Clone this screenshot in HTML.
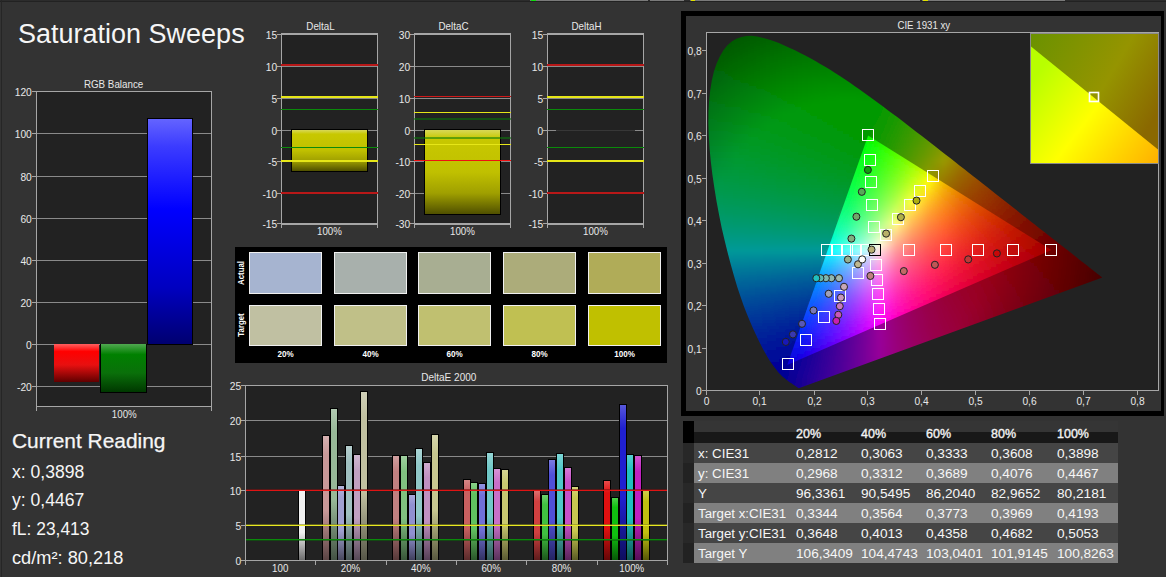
<!DOCTYPE html><html><head><meta charset="utf-8"><style>
html,body{margin:0;padding:0;background:#333333;width:1166px;height:577px;overflow:hidden}
svg{display:block}
text{font-family:"Liberation Sans", sans-serif;fill:#e8e8e8}
</style></head><body>
<svg width="1166" height="577" viewBox="0 0 1166 577" shape-rendering="crispEdges">
<rect x="0" y="0" width="1166" height="577" fill="#333333"/>

<rect x="0" y="0" width="1166" height="1" fill="#2c2c2c"/><rect x="0" y="1" width="1166" height="1" fill="#222222"/>
<rect x="530" y="0" width="118" height="1" fill="#7a7a7a"/><rect x="650" y="0" width="34" height="1" fill="#7a7a7a"/><rect x="690" y="0" width="230" height="1" fill="#7a7a7a"/><rect x="922" y="0" width="143" height="1" fill="#7a7a7a"/>
<rect x="531" y="0" width="5" height="1" fill="#10e010"/><rect x="691" y="0" width="4" height="1" fill="#e0e000"/><rect x="923" y="0" width="5" height="1" fill="#e0e000"/>
<rect x="1" y="0" width="1" height="577" fill="#262626"/>
<text x="18.0" y="42.5" style="font-size:27px;fill:#f6f6f6">Saturation Sweeps</text>
<defs>
<linearGradient id="gR" x1="0" y1="0" x2="0" y2="1"><stop offset="0" stop-color="#ff6060"/><stop offset="0.2" stop-color="#ff0000"/><stop offset="0.55" stop-color="#e81010"/><stop offset="1" stop-color="#600000"/></linearGradient>
<linearGradient id="gG" x1="0" y1="0" x2="0" y2="1"><stop offset="0" stop-color="#50a850"/><stop offset="0.22" stop-color="#008000"/><stop offset="0.6" stop-color="#0a700a"/><stop offset="1" stop-color="#003800"/></linearGradient>
<linearGradient id="gB" x1="0" y1="0" x2="0" y2="1"><stop offset="0" stop-color="#6464ff"/><stop offset="0.12" stop-color="#3c3cff"/><stop offset="0.4" stop-color="#0000ff"/><stop offset="0.75" stop-color="#0000c0"/><stop offset="1" stop-color="#000070"/></linearGradient>
<linearGradient id="gYb" x1="0" y1="0" x2="0" y2="1"><stop offset="0" stop-color="#d8d858"/><stop offset="0.1" stop-color="#c8c800"/><stop offset="0.5" stop-color="#c0c000"/><stop offset="0.75" stop-color="#a0a000"/><stop offset="1" stop-color="#505000"/></linearGradient>
</defs>
<rect x="36" y="91" width="175" height="315" fill="#222222"/>
<rect x="36" y="386" width="175" height="1" fill="#8a8a8a"/>
<rect x="32" y="386" width="4" height="1" fill="#a6a6a6"/>
<text x="31.8" y="391.0" text-anchor="end" textLength="14.8" lengthAdjust="spacingAndGlyphs" style="font-size:11px">-20</text>
<rect x="36" y="344" width="175" height="1" fill="#8a8a8a"/>
<rect x="32" y="344" width="4" height="1" fill="#a6a6a6"/>
<text x="31.8" y="349.0" text-anchor="end" textLength="5.7" lengthAdjust="spacingAndGlyphs" style="font-size:11px">0</text>
<rect x="36" y="302" width="175" height="1" fill="#8a8a8a"/>
<rect x="32" y="302" width="4" height="1" fill="#a6a6a6"/>
<text x="31.8" y="307.0" text-anchor="end" textLength="11.4" lengthAdjust="spacingAndGlyphs" style="font-size:11px">20</text>
<rect x="36" y="260" width="175" height="1" fill="#8a8a8a"/>
<rect x="32" y="260" width="4" height="1" fill="#a6a6a6"/>
<text x="31.8" y="265.0" text-anchor="end" textLength="11.4" lengthAdjust="spacingAndGlyphs" style="font-size:11px">40</text>
<rect x="36" y="218" width="175" height="1" fill="#8a8a8a"/>
<rect x="32" y="218" width="4" height="1" fill="#a6a6a6"/>
<text x="31.8" y="223.0" text-anchor="end" textLength="11.4" lengthAdjust="spacingAndGlyphs" style="font-size:11px">60</text>
<rect x="36" y="176" width="175" height="1" fill="#8a8a8a"/>
<rect x="32" y="176" width="4" height="1" fill="#a6a6a6"/>
<text x="31.8" y="181.0" text-anchor="end" textLength="11.4" lengthAdjust="spacingAndGlyphs" style="font-size:11px">80</text>
<rect x="36" y="133" width="175" height="1" fill="#8a8a8a"/>
<rect x="32" y="133" width="4" height="1" fill="#a6a6a6"/>
<text x="31.8" y="138.0" text-anchor="end" textLength="17.1" lengthAdjust="spacingAndGlyphs" style="font-size:11px">100</text>
<rect x="36" y="91" width="175" height="1" fill="#8a8a8a"/>
<rect x="32" y="91" width="4" height="1" fill="#a6a6a6"/>
<text x="31.8" y="96.0" text-anchor="end" textLength="17.1" lengthAdjust="spacingAndGlyphs" style="font-size:11px">120</text>
<rect x="36" y="91" width="1" height="320" fill="#a6a6a6"/><rect x="211" y="91" width="1" height="320" fill="#a6a6a6"/>
<rect x="36" y="91" width="175" height="1" fill="#a6a6a6"/><rect x="36" y="406" width="176" height="1" fill="#a6a6a6"/>
<text x="113.6" y="88.0" text-anchor="middle" textLength="59.3" lengthAdjust="spacingAndGlyphs" style="font-size:11px">RGB Balance</text>
<text x="124.3" y="418.0" text-anchor="middle" textLength="24.9" lengthAdjust="spacingAndGlyphs" style="font-size:11px">100%</text>
<rect x="54" y="344" width="45" height="38" fill="url(#gR)"/>
<rect x="100" y="344" width="47" height="49" fill="#000"/><rect x="101" y="344" width="45" height="48" fill="url(#gG)"/>
<rect x="147" y="118" width="46" height="227" fill="#000"/><rect x="148" y="119" width="44" height="225" fill="url(#gB)"/>
<rect x="281" y="34" width="96" height="189" fill="#222222"/>
<rect x="281" y="34" width="96" height="1" fill="#8a8a8a"/>
<rect x="277" y="34" width="4" height="1" fill="#a6a6a6"/>
<text x="277.2" y="39.0" text-anchor="end" textLength="11.4" lengthAdjust="spacingAndGlyphs" style="font-size:11px">15</text>
<rect x="281" y="66" width="96" height="1" fill="#8a8a8a"/>
<rect x="277" y="66" width="4" height="1" fill="#a6a6a6"/>
<text x="277.2" y="71.0" text-anchor="end" textLength="11.4" lengthAdjust="spacingAndGlyphs" style="font-size:11px">10</text>
<rect x="281" y="98" width="96" height="1" fill="#8a8a8a"/>
<rect x="277" y="98" width="4" height="1" fill="#a6a6a6"/>
<text x="277.2" y="103.0" text-anchor="end" textLength="5.7" lengthAdjust="spacingAndGlyphs" style="font-size:11px">5</text>
<rect x="281" y="130" width="96" height="1" fill="#8a8a8a"/>
<rect x="277" y="130" width="4" height="1" fill="#a6a6a6"/>
<text x="277.2" y="135.0" text-anchor="end" textLength="5.7" lengthAdjust="spacingAndGlyphs" style="font-size:11px">0</text>
<rect x="281" y="161" width="96" height="1" fill="#8a8a8a"/>
<rect x="277" y="161" width="4" height="1" fill="#a6a6a6"/>
<text x="277.2" y="166.0" text-anchor="end" textLength="9.1" lengthAdjust="spacingAndGlyphs" style="font-size:11px">-5</text>
<rect x="281" y="193" width="96" height="1" fill="#8a8a8a"/>
<rect x="277" y="193" width="4" height="1" fill="#a6a6a6"/>
<text x="277.2" y="198.0" text-anchor="end" textLength="14.8" lengthAdjust="spacingAndGlyphs" style="font-size:11px">-10</text>
<rect x="281" y="223" width="96" height="1" fill="#8a8a8a"/>
<rect x="277" y="223" width="4" height="1" fill="#a6a6a6"/>
<text x="277.2" y="228.0" text-anchor="end" textLength="14.8" lengthAdjust="spacingAndGlyphs" style="font-size:11px">-15</text>
<rect x="291" y="129" width="77" height="43" fill="#000"/>
<rect x="292" y="130" width="75" height="41" fill="url(#gYb)"/>
<rect x="281" y="33" width="1" height="195" fill="#a6a6a6"/><rect x="377" y="33" width="1" height="195" fill="#a6a6a6"/>
<rect x="281" y="33" width="96" height="2" fill="#a6a6a6"/><rect x="281" y="223" width="97" height="2" fill="#a6a6a6"/>
<rect x="281" y="64" width="97" height="2" fill="#b81818"/>
<rect x="281" y="96" width="97" height="2" fill="#e6e618"/>
<rect x="281" y="109" width="97" height="1" fill="#0a8a0a"/>
<rect x="281" y="147" width="97" height="1" fill="#0a8a0a"/>
<rect x="281" y="160" width="97" height="2" fill="#e6e618"/>
<rect x="281" y="192" width="97" height="2" fill="#b81818"/>
<text x="320.5" y="30.0" text-anchor="middle" textLength="28.3" lengthAdjust="spacingAndGlyphs" style="font-size:11px">DeltaL</text>
<text x="329.5" y="234.5" text-anchor="middle" textLength="24.9" lengthAdjust="spacingAndGlyphs" style="font-size:11px">100%</text>
<rect x="414" y="34" width="96" height="189" fill="#222222"/>
<rect x="414" y="34" width="96" height="1" fill="#8a8a8a"/>
<rect x="410" y="34" width="4" height="1" fill="#a6a6a6"/>
<text x="410.2" y="39.0" text-anchor="end" textLength="11.4" lengthAdjust="spacingAndGlyphs" style="font-size:11px">30</text>
<rect x="414" y="66" width="96" height="1" fill="#8a8a8a"/>
<rect x="410" y="66" width="4" height="1" fill="#a6a6a6"/>
<text x="410.2" y="71.0" text-anchor="end" textLength="11.4" lengthAdjust="spacingAndGlyphs" style="font-size:11px">20</text>
<rect x="414" y="98" width="96" height="1" fill="#8a8a8a"/>
<rect x="410" y="98" width="4" height="1" fill="#a6a6a6"/>
<text x="410.2" y="103.0" text-anchor="end" textLength="11.4" lengthAdjust="spacingAndGlyphs" style="font-size:11px">10</text>
<rect x="414" y="130" width="96" height="1" fill="#8a8a8a"/>
<rect x="410" y="130" width="4" height="1" fill="#a6a6a6"/>
<text x="410.2" y="135.0" text-anchor="end" textLength="5.7" lengthAdjust="spacingAndGlyphs" style="font-size:11px">0</text>
<rect x="414" y="161" width="96" height="1" fill="#8a8a8a"/>
<rect x="410" y="161" width="4" height="1" fill="#a6a6a6"/>
<text x="410.2" y="166.0" text-anchor="end" textLength="14.8" lengthAdjust="spacingAndGlyphs" style="font-size:11px">-10</text>
<rect x="414" y="193" width="96" height="1" fill="#8a8a8a"/>
<rect x="410" y="193" width="4" height="1" fill="#a6a6a6"/>
<text x="410.2" y="198.0" text-anchor="end" textLength="14.8" lengthAdjust="spacingAndGlyphs" style="font-size:11px">-20</text>
<rect x="414" y="223" width="96" height="1" fill="#8a8a8a"/>
<rect x="410" y="223" width="4" height="1" fill="#a6a6a6"/>
<text x="410.2" y="228.0" text-anchor="end" textLength="14.8" lengthAdjust="spacingAndGlyphs" style="font-size:11px">-30</text>
<rect x="424" y="129" width="77" height="86" fill="#000"/>
<rect x="425" y="130" width="75" height="84" fill="url(#gYb)"/>
<rect x="414" y="33" width="1" height="195" fill="#a6a6a6"/><rect x="510" y="33" width="1" height="195" fill="#a6a6a6"/>
<rect x="414" y="33" width="96" height="2" fill="#a6a6a6"/><rect x="414" y="223" width="97" height="2" fill="#a6a6a6"/>
<rect x="414" y="96" width="97" height="1" fill="#d01818"/>
<rect x="414" y="112" width="97" height="1" fill="#e6e618"/>
<rect x="414" y="118" width="97" height="2" fill="#0a7a0a" opacity="0.55"/>
<rect x="414" y="137" width="97" height="2" fill="#0a7a0a" opacity="0.55"/>
<rect x="414" y="144" width="97" height="1" fill="#e6e618"/>
<rect x="414" y="160" width="97" height="1" fill="#f01010"/>
<text x="453.5" y="30.0" text-anchor="middle" textLength="29.9" lengthAdjust="spacingAndGlyphs" style="font-size:11px">DeltaC</text>
<text x="462.5" y="234.5" text-anchor="middle" textLength="24.9" lengthAdjust="spacingAndGlyphs" style="font-size:11px">100%</text>
<rect x="547" y="34" width="96" height="189" fill="#222222"/>
<rect x="547" y="34" width="96" height="1" fill="#8a8a8a"/>
<rect x="543" y="34" width="4" height="1" fill="#a6a6a6"/>
<text x="543.2" y="39.0" text-anchor="end" textLength="11.4" lengthAdjust="spacingAndGlyphs" style="font-size:11px">15</text>
<rect x="547" y="66" width="96" height="1" fill="#8a8a8a"/>
<rect x="543" y="66" width="4" height="1" fill="#a6a6a6"/>
<text x="543.2" y="71.0" text-anchor="end" textLength="11.4" lengthAdjust="spacingAndGlyphs" style="font-size:11px">10</text>
<rect x="547" y="98" width="96" height="1" fill="#8a8a8a"/>
<rect x="543" y="98" width="4" height="1" fill="#a6a6a6"/>
<text x="543.2" y="103.0" text-anchor="end" textLength="5.7" lengthAdjust="spacingAndGlyphs" style="font-size:11px">5</text>
<rect x="547" y="130" width="96" height="1" fill="#8a8a8a"/>
<rect x="543" y="130" width="4" height="1" fill="#a6a6a6"/>
<text x="543.2" y="135.0" text-anchor="end" textLength="5.7" lengthAdjust="spacingAndGlyphs" style="font-size:11px">0</text>
<rect x="547" y="161" width="96" height="1" fill="#8a8a8a"/>
<rect x="543" y="161" width="4" height="1" fill="#a6a6a6"/>
<text x="543.2" y="166.0" text-anchor="end" textLength="9.1" lengthAdjust="spacingAndGlyphs" style="font-size:11px">-5</text>
<rect x="547" y="193" width="96" height="1" fill="#8a8a8a"/>
<rect x="543" y="193" width="4" height="1" fill="#a6a6a6"/>
<text x="543.2" y="198.0" text-anchor="end" textLength="14.8" lengthAdjust="spacingAndGlyphs" style="font-size:11px">-10</text>
<rect x="547" y="223" width="96" height="1" fill="#8a8a8a"/>
<rect x="543" y="223" width="4" height="1" fill="#a6a6a6"/>
<text x="543.2" y="228.0" text-anchor="end" textLength="14.8" lengthAdjust="spacingAndGlyphs" style="font-size:11px">-15</text>
<rect x="556" y="130" width="79" height="1" fill="#000" opacity="0.6"/>
<rect x="547" y="33" width="1" height="195" fill="#a6a6a6"/><rect x="643" y="33" width="1" height="195" fill="#a6a6a6"/>
<rect x="547" y="33" width="96" height="2" fill="#a6a6a6"/><rect x="547" y="223" width="97" height="2" fill="#a6a6a6"/>
<rect x="547" y="64" width="97" height="2" fill="#b81818"/>
<rect x="547" y="96" width="97" height="2" fill="#e6e618"/>
<rect x="547" y="109" width="97" height="1" fill="#0a8a0a"/>
<rect x="547" y="147" width="97" height="1" fill="#0a8a0a"/>
<rect x="547" y="160" width="97" height="2" fill="#e6e618"/>
<rect x="547" y="192" width="97" height="2" fill="#b81818"/>
<text x="586.5" y="30.0" text-anchor="middle" textLength="29.9" lengthAdjust="spacingAndGlyphs" style="font-size:11px">DeltaH</text>
<text x="595.5" y="234.5" text-anchor="middle" textLength="24.9" lengthAdjust="spacingAndGlyphs" style="font-size:11px">100%</text>
<rect x="235" y="247" width="432" height="116" fill="#000"/>
<rect x="249" y="252" width="73" height="42" fill="#f0f0f0"/><rect x="250" y="253" width="71" height="40" fill="#a6b4d0"/>
<rect x="249" y="305" width="73" height="41" fill="#f0f0f0"/><rect x="250" y="306" width="71" height="39" fill="#c0c0a2"/>
<text x="285.5" y="357.0" text-anchor="middle" textLength="16.2" lengthAdjust="spacingAndGlyphs" style="font-size:8.5px;font-weight:700;fill:#fff">20%</text>
<rect x="334" y="252" width="73" height="42" fill="#f0f0f0"/><rect x="335" y="253" width="71" height="40" fill="#a8b0ac"/>
<rect x="334" y="305" width="73" height="41" fill="#f0f0f0"/><rect x="335" y="306" width="71" height="39" fill="#c0c088"/>
<text x="370.5" y="357.0" text-anchor="middle" textLength="16.2" lengthAdjust="spacingAndGlyphs" style="font-size:8.5px;font-weight:700;fill:#fff">40%</text>
<rect x="418" y="252" width="73" height="42" fill="#f0f0f0"/><rect x="419" y="253" width="71" height="40" fill="#a8ae92"/>
<rect x="418" y="305" width="73" height="41" fill="#f0f0f0"/><rect x="419" y="306" width="71" height="39" fill="#c0c070"/>
<text x="454.5" y="357.0" text-anchor="middle" textLength="16.2" lengthAdjust="spacingAndGlyphs" style="font-size:8.5px;font-weight:700;fill:#fff">60%</text>
<rect x="503" y="252" width="73" height="42" fill="#f0f0f0"/><rect x="504" y="253" width="71" height="40" fill="#acac7a"/>
<rect x="503" y="305" width="73" height="41" fill="#f0f0f0"/><rect x="504" y="306" width="71" height="39" fill="#c0c052"/>
<text x="539.5" y="357.0" text-anchor="middle" textLength="16.2" lengthAdjust="spacingAndGlyphs" style="font-size:8.5px;font-weight:700;fill:#fff">80%</text>
<rect x="588" y="252" width="73" height="42" fill="#f0f0f0"/><rect x="589" y="253" width="71" height="40" fill="#b0ac58"/>
<rect x="588" y="305" width="73" height="41" fill="#f0f0f0"/><rect x="589" y="306" width="71" height="39" fill="#c0c000"/>
<text x="624.5" y="357.0" text-anchor="middle" textLength="20.7" lengthAdjust="spacingAndGlyphs" style="font-size:8.5px;font-weight:700;fill:#fff">100%</text>
<g transform="translate(244.2,273) rotate(-90)">
<text x="0.0" y="0.0" text-anchor="middle" textLength="23.9" lengthAdjust="spacingAndGlyphs" style="font-size:8.5px;font-weight:700;fill:#fff">Actual</text>
</g>
<g transform="translate(244.2,325) rotate(-90)">
<text x="0.0" y="0.0" text-anchor="middle" textLength="23.3" lengthAdjust="spacingAndGlyphs" style="font-size:8.5px;font-weight:700;fill:#fff">Target</text>
</g>
<rect x="245" y="385" width="422" height="175" fill="#222222"/>
<rect x="245" y="560" width="422" height="1" fill="#8a8a8a"/>
<rect x="241" y="560" width="4" height="1" fill="#a6a6a6"/>
<text x="241.2" y="565.0" text-anchor="end" textLength="5.7" lengthAdjust="spacingAndGlyphs" style="font-size:11px">0</text>
<rect x="245" y="525" width="422" height="1" fill="#8a8a8a"/>
<rect x="241" y="525" width="4" height="1" fill="#a6a6a6"/>
<text x="241.2" y="530.0" text-anchor="end" textLength="5.7" lengthAdjust="spacingAndGlyphs" style="font-size:11px">5</text>
<rect x="245" y="490" width="422" height="1" fill="#8a8a8a"/>
<rect x="241" y="490" width="4" height="1" fill="#a6a6a6"/>
<text x="241.2" y="495.0" text-anchor="end" textLength="11.4" lengthAdjust="spacingAndGlyphs" style="font-size:11px">10</text>
<rect x="245" y="456" width="422" height="1" fill="#8a8a8a"/>
<rect x="241" y="456" width="4" height="1" fill="#a6a6a6"/>
<text x="241.2" y="461.0" text-anchor="end" textLength="11.4" lengthAdjust="spacingAndGlyphs" style="font-size:11px">15</text>
<rect x="245" y="420" width="422" height="1" fill="#8a8a8a"/>
<rect x="241" y="420" width="4" height="1" fill="#a6a6a6"/>
<text x="241.2" y="425.0" text-anchor="end" textLength="11.4" lengthAdjust="spacingAndGlyphs" style="font-size:11px">20</text>
<rect x="245" y="385" width="422" height="1" fill="#8a8a8a"/>
<rect x="241" y="385" width="4" height="1" fill="#a6a6a6"/>
<text x="241.2" y="390.0" text-anchor="end" textLength="11.4" lengthAdjust="spacingAndGlyphs" style="font-size:11px">25</text>
<defs>
<linearGradient id="e06" x1="0" y1="0" x2="0" y2="1"><stop offset="0" stop-color="#f3f3f3"/><stop offset="0.15" stop-color="#f0f0f0"/><stop offset="0.6" stop-color="#f0f0f0"/><stop offset="1" stop-color="#6c6c6c"/></linearGradient>
<linearGradient id="e10" x1="0" y1="0" x2="0" y2="1"><stop offset="0" stop-color="#d5b1b1"/><stop offset="0.15" stop-color="#c89898"/><stop offset="0.6" stop-color="#c89898"/><stop offset="1" stop-color="#5a4444"/></linearGradient>
<linearGradient id="e11" x1="0" y1="0" x2="0" y2="1"><stop offset="0" stop-color="#b1c9b1"/><stop offset="0.15" stop-color="#98b898"/><stop offset="0.6" stop-color="#98b898"/><stop offset="1" stop-color="#445244"/></linearGradient>
<linearGradient id="e12" x1="0" y1="0" x2="0" y2="1"><stop offset="0" stop-color="#b7b7db"/><stop offset="0.15" stop-color="#a0a0d0"/><stop offset="0.6" stop-color="#a0a0d0"/><stop offset="1" stop-color="#48485d"/></linearGradient>
<linearGradient id="e13" x1="0" y1="0" x2="0" y2="1"><stop offset="0" stop-color="#b7cfcf"/><stop offset="0.15" stop-color="#a0c0c0"/><stop offset="0.6" stop-color="#a0c0c0"/><stop offset="1" stop-color="#485656"/></linearGradient>
<linearGradient id="e14" x1="0" y1="0" x2="0" y2="1"><stop offset="0" stop-color="#cfb7cf"/><stop offset="0.15" stop-color="#c0a0c0"/><stop offset="0.6" stop-color="#c0a0c0"/><stop offset="1" stop-color="#564856"/></linearGradient>
<linearGradient id="e15" x1="0" y1="0" x2="0" y2="1"><stop offset="0" stop-color="#cfcfb7"/><stop offset="0.15" stop-color="#c0c0a0"/><stop offset="0.6" stop-color="#c0c0a0"/><stop offset="1" stop-color="#565648"/></linearGradient>
<linearGradient id="e20" x1="0" y1="0" x2="0" y2="1"><stop offset="0" stop-color="#cf9f9f"/><stop offset="0.15" stop-color="#c08080"/><stop offset="0.6" stop-color="#c08080"/><stop offset="1" stop-color="#563939"/></linearGradient>
<linearGradient id="e21" x1="0" y1="0" x2="0" y2="1"><stop offset="0" stop-color="#9fcf9f"/><stop offset="0.15" stop-color="#80c080"/><stop offset="0.6" stop-color="#80c080"/><stop offset="1" stop-color="#395639"/></linearGradient>
<linearGradient id="e22" x1="0" y1="0" x2="0" y2="1"><stop offset="0" stop-color="#ababdb"/><stop offset="0.15" stop-color="#9090d0"/><stop offset="0.6" stop-color="#9090d0"/><stop offset="1" stop-color="#40405d"/></linearGradient>
<linearGradient id="e23" x1="0" y1="0" x2="0" y2="1"><stop offset="0" stop-color="#abd5d5"/><stop offset="0.15" stop-color="#90c8c8"/><stop offset="0.6" stop-color="#90c8c8"/><stop offset="1" stop-color="#405a5a"/></linearGradient>
<linearGradient id="e24" x1="0" y1="0" x2="0" y2="1"><stop offset="0" stop-color="#cfabcf"/><stop offset="0.15" stop-color="#c090c0"/><stop offset="0.6" stop-color="#c090c0"/><stop offset="1" stop-color="#564056"/></linearGradient>
<linearGradient id="e25" x1="0" y1="0" x2="0" y2="1"><stop offset="0" stop-color="#d5d5ab"/><stop offset="0.15" stop-color="#c8c890"/><stop offset="0.6" stop-color="#c8c890"/><stop offset="1" stop-color="#5a5a40"/></linearGradient>
<linearGradient id="e30" x1="0" y1="0" x2="0" y2="1"><stop offset="0" stop-color="#d58787"/><stop offset="0.15" stop-color="#c86060"/><stop offset="0.6" stop-color="#c86060"/><stop offset="1" stop-color="#5a2b2b"/></linearGradient>
<linearGradient id="e31" x1="0" y1="0" x2="0" y2="1"><stop offset="0" stop-color="#87cf87"/><stop offset="0.15" stop-color="#60c060"/><stop offset="0.6" stop-color="#60c060"/><stop offset="1" stop-color="#2b562b"/></linearGradient>
<linearGradient id="e32" x1="0" y1="0" x2="0" y2="1"><stop offset="0" stop-color="#9393e1"/><stop offset="0.15" stop-color="#7070d8"/><stop offset="0.6" stop-color="#7070d8"/><stop offset="1" stop-color="#323261"/></linearGradient>
<linearGradient id="e33" x1="0" y1="0" x2="0" y2="1"><stop offset="0" stop-color="#93d5d5"/><stop offset="0.15" stop-color="#70c8c8"/><stop offset="0.6" stop-color="#70c8c8"/><stop offset="1" stop-color="#325a5a"/></linearGradient>
<linearGradient id="e34" x1="0" y1="0" x2="0" y2="1"><stop offset="0" stop-color="#d593d5"/><stop offset="0.15" stop-color="#c870c8"/><stop offset="0.6" stop-color="#c870c8"/><stop offset="1" stop-color="#5a325a"/></linearGradient>
<linearGradient id="e35" x1="0" y1="0" x2="0" y2="1"><stop offset="0" stop-color="#d5d593"/><stop offset="0.15" stop-color="#c8c870"/><stop offset="0.6" stop-color="#c8c870"/><stop offset="1" stop-color="#5a5a32"/></linearGradient>
<linearGradient id="e40" x1="0" y1="0" x2="0" y2="1"><stop offset="0" stop-color="#db6f6f"/><stop offset="0.15" stop-color="#d04040"/><stop offset="0.6" stop-color="#d04040"/><stop offset="1" stop-color="#5d1c1c"/></linearGradient>
<linearGradient id="e41" x1="0" y1="0" x2="0" y2="1"><stop offset="0" stop-color="#6fcf6f"/><stop offset="0.15" stop-color="#40c040"/><stop offset="0.6" stop-color="#40c040"/><stop offset="1" stop-color="#1c561c"/></linearGradient>
<linearGradient id="e42" x1="0" y1="0" x2="0" y2="1"><stop offset="0" stop-color="#7b7be1"/><stop offset="0.15" stop-color="#5050d8"/><stop offset="0.6" stop-color="#5050d8"/><stop offset="1" stop-color="#242461"/></linearGradient>
<linearGradient id="e43" x1="0" y1="0" x2="0" y2="1"><stop offset="0" stop-color="#7bd5d5"/><stop offset="0.15" stop-color="#50c8c8"/><stop offset="0.6" stop-color="#50c8c8"/><stop offset="1" stop-color="#245a5a"/></linearGradient>
<linearGradient id="e44" x1="0" y1="0" x2="0" y2="1"><stop offset="0" stop-color="#d57bd5"/><stop offset="0.15" stop-color="#c850c8"/><stop offset="0.6" stop-color="#c850c8"/><stop offset="1" stop-color="#5a245a"/></linearGradient>
<linearGradient id="e45" x1="0" y1="0" x2="0" y2="1"><stop offset="0" stop-color="#d5d57b"/><stop offset="0.15" stop-color="#c8c850"/><stop offset="0.6" stop-color="#c8c850"/><stop offset="1" stop-color="#5a5a24"/></linearGradient>
<linearGradient id="e50" x1="0" y1="0" x2="0" y2="1"><stop offset="0" stop-color="#e74b4b"/><stop offset="0.15" stop-color="#e01010"/><stop offset="0.6" stop-color="#e01010"/><stop offset="1" stop-color="#640707"/></linearGradient>
<linearGradient id="e51" x1="0" y1="0" x2="0" y2="1"><stop offset="0" stop-color="#4bcf4b"/><stop offset="0.15" stop-color="#10c010"/><stop offset="0.6" stop-color="#10c010"/><stop offset="1" stop-color="#075607"/></linearGradient>
<linearGradient id="e52" x1="0" y1="0" x2="0" y2="1"><stop offset="0" stop-color="#5757db"/><stop offset="0.15" stop-color="#2020d0"/><stop offset="0.6" stop-color="#2020d0"/><stop offset="1" stop-color="#0e0e5d"/></linearGradient>
<linearGradient id="e53" x1="0" y1="0" x2="0" y2="1"><stop offset="0" stop-color="#57cfcf"/><stop offset="0.15" stop-color="#20c0c0"/><stop offset="0.6" stop-color="#20c0c0"/><stop offset="1" stop-color="#0e5656"/></linearGradient>
<linearGradient id="e54" x1="0" y1="0" x2="0" y2="1"><stop offset="0" stop-color="#cf57cf"/><stop offset="0.15" stop-color="#c020c0"/><stop offset="0.6" stop-color="#c020c0"/><stop offset="1" stop-color="#560e56"/></linearGradient>
<linearGradient id="e55" x1="0" y1="0" x2="0" y2="1"><stop offset="0" stop-color="#cfcf4b"/><stop offset="0.15" stop-color="#c0c010"/><stop offset="0.6" stop-color="#c0c010"/><stop offset="1" stop-color="#565607"/></linearGradient>
</defs>
<rect x="298" y="490" width="8" height="70" fill="#000"/><rect x="299" y="491" width="6" height="69" fill="url(#e06)"/>
<rect x="322" y="435" width="8" height="125" fill="#000"/><rect x="323" y="436" width="6" height="124" fill="url(#e10)"/>
<rect x="330" y="408" width="8" height="152" fill="#000"/><rect x="331" y="409" width="6" height="151" fill="url(#e11)"/>
<rect x="337" y="485" width="8" height="75" fill="#000"/><rect x="338" y="486" width="6" height="74" fill="url(#e12)"/>
<rect x="345" y="445" width="8" height="115" fill="#000"/><rect x="346" y="446" width="6" height="114" fill="url(#e13)"/>
<rect x="353" y="454" width="8" height="106" fill="#000"/><rect x="354" y="455" width="6" height="105" fill="url(#e14)"/>
<rect x="360" y="391" width="8" height="169" fill="#000"/><rect x="361" y="392" width="6" height="168" fill="url(#e15)"/>
<rect x="392" y="455" width="8" height="105" fill="#000"/><rect x="393" y="456" width="6" height="104" fill="url(#e20)"/>
<rect x="400" y="455" width="8" height="105" fill="#000"/><rect x="401" y="456" width="6" height="104" fill="url(#e21)"/>
<rect x="408" y="494" width="8" height="66" fill="#000"/><rect x="409" y="495" width="6" height="65" fill="url(#e22)"/>
<rect x="415" y="448" width="8" height="112" fill="#000"/><rect x="416" y="449" width="6" height="111" fill="url(#e23)"/>
<rect x="423" y="462" width="8" height="98" fill="#000"/><rect x="424" y="463" width="6" height="97" fill="url(#e24)"/>
<rect x="431" y="434" width="8" height="126" fill="#000"/><rect x="432" y="435" width="6" height="125" fill="url(#e25)"/>
<rect x="463" y="479" width="8" height="81" fill="#000"/><rect x="464" y="480" width="6" height="80" fill="url(#e30)"/>
<rect x="470" y="482" width="8" height="78" fill="#000"/><rect x="471" y="483" width="6" height="77" fill="url(#e31)"/>
<rect x="478" y="483" width="8" height="77" fill="#000"/><rect x="479" y="484" width="6" height="76" fill="url(#e32)"/>
<rect x="486" y="452" width="8" height="108" fill="#000"/><rect x="487" y="453" width="6" height="107" fill="url(#e33)"/>
<rect x="493" y="468" width="8" height="92" fill="#000"/><rect x="494" y="469" width="6" height="91" fill="url(#e34)"/>
<rect x="501" y="469" width="8" height="91" fill="#000"/><rect x="502" y="470" width="6" height="90" fill="url(#e35)"/>
<rect x="533" y="490" width="8" height="70" fill="#000"/><rect x="534" y="491" width="6" height="69" fill="url(#e40)"/>
<rect x="541" y="494" width="8" height="66" fill="#000"/><rect x="542" y="495" width="6" height="65" fill="url(#e41)"/>
<rect x="548" y="459" width="8" height="101" fill="#000"/><rect x="549" y="460" width="6" height="100" fill="url(#e42)"/>
<rect x="556" y="453" width="8" height="107" fill="#000"/><rect x="557" y="454" width="6" height="106" fill="url(#e43)"/>
<rect x="564" y="467" width="8" height="93" fill="#000"/><rect x="565" y="468" width="6" height="92" fill="url(#e44)"/>
<rect x="571" y="486" width="8" height="74" fill="#000"/><rect x="572" y="487" width="6" height="73" fill="url(#e45)"/>
<rect x="603" y="480" width="8" height="80" fill="#000"/><rect x="604" y="481" width="6" height="79" fill="url(#e50)"/>
<rect x="611" y="497" width="8" height="63" fill="#000"/><rect x="612" y="498" width="6" height="62" fill="url(#e51)"/>
<rect x="619" y="404" width="8" height="156" fill="#000"/><rect x="620" y="405" width="6" height="155" fill="url(#e52)"/>
<rect x="626" y="454" width="8" height="106" fill="#000"/><rect x="627" y="455" width="6" height="105" fill="url(#e53)"/>
<rect x="634" y="455" width="8" height="105" fill="#000"/><rect x="635" y="456" width="6" height="104" fill="url(#e54)"/>
<rect x="642" y="490" width="8" height="70" fill="#000"/><rect x="643" y="491" width="6" height="69" fill="url(#e55)"/>
<rect x="245" y="490" width="422" height="1" fill="#e01414"/><rect x="245" y="489" width="422" height="1" fill="#801010" opacity="0.6"/>
<rect x="245" y="525" width="422" height="1" fill="#e8e820"/><rect x="245" y="524" width="422" height="1" fill="#8a8a20" opacity="0.6"/>
<rect x="245" y="539" width="422" height="1" fill="#0a8a0a"/><rect x="245" y="540" width="422" height="1" fill="#0a600a" opacity="0.6"/>
<rect x="245" y="385" width="1" height="175" fill="#a6a6a6"/><rect x="667" y="385" width="1" height="175" fill="#a6a6a6"/>
<rect x="245" y="385" width="422" height="1" fill="#a6a6a6"/><rect x="245" y="560" width="423" height="1" fill="#a6a6a6"/>
<rect x="245" y="560" width="1" height="5" fill="#a6a6a6"/>
<rect x="315" y="560" width="1" height="5" fill="#a6a6a6"/>
<rect x="386" y="560" width="1" height="5" fill="#a6a6a6"/>
<rect x="456" y="560" width="1" height="5" fill="#a6a6a6"/>
<rect x="526" y="560" width="1" height="5" fill="#a6a6a6"/>
<rect x="597" y="560" width="1" height="5" fill="#a6a6a6"/>
<rect x="667" y="560" width="1" height="5" fill="#a6a6a6"/>
<text x="280.2" y="571.5" text-anchor="middle" textLength="16.2" lengthAdjust="spacingAndGlyphs" style="font-size:11px">100</text>
<text x="350.5" y="571.5" text-anchor="middle" textLength="19.5" lengthAdjust="spacingAndGlyphs" style="font-size:11px">20%</text>
<text x="420.8" y="571.5" text-anchor="middle" textLength="19.5" lengthAdjust="spacingAndGlyphs" style="font-size:11px">40%</text>
<text x="491.2" y="571.5" text-anchor="middle" textLength="19.5" lengthAdjust="spacingAndGlyphs" style="font-size:11px">60%</text>
<text x="561.5" y="571.5" text-anchor="middle" textLength="19.5" lengthAdjust="spacingAndGlyphs" style="font-size:11px">80%</text>
<text x="631.8" y="571.5" text-anchor="middle" textLength="24.9" lengthAdjust="spacingAndGlyphs" style="font-size:11px">100%</text>
<text x="448.8" y="381.0" text-anchor="middle" textLength="55.1" lengthAdjust="spacingAndGlyphs" style="font-size:11px">DeltaE 2000</text>
<text x="12.0" y="448.0" textLength="153.5" lengthAdjust="spacingAndGlyphs" style="font-size:21px;fill:#f6f6f6" stroke="#f6f6f6" stroke-width="0.25">Current Reading</text>
<text x="12.0" y="477.9" textLength="72.3" lengthAdjust="spacingAndGlyphs" style="font-size:18px;fill:#f6f6f6">x: 0,3898</text>
<text x="12.0" y="505.7" textLength="72.3" lengthAdjust="spacingAndGlyphs" style="font-size:18px;fill:#f6f6f6">y: 0,4467</text>
<text x="12.0" y="535.1" textLength="77.5" lengthAdjust="spacingAndGlyphs" style="font-size:18px;fill:#f6f6f6">fL: 23,413</text>
<text x="12.0" y="563.5" textLength="111.5" lengthAdjust="spacingAndGlyphs" style="font-size:18px;fill:#f6f6f6">cd/m²: 80,218</text>
<rect x="683" y="421" width="435" height="11" fill="#353535"/><rect x="683" y="432" width="435" height="11" fill="#181818"/>
<rect x="683" y="421" width="11" height="22" fill="#000"/>
<text x="796.0" y="437.5" style="font-size:12.5px;fill:#f4f4f4" stroke="#f4f4f4" stroke-width="0.35">20%</text>
<text x="861.0" y="437.5" style="font-size:12.5px;fill:#f4f4f4" stroke="#f4f4f4" stroke-width="0.35">40%</text>
<text x="926.0" y="437.5" style="font-size:12.5px;fill:#f4f4f4" stroke="#f4f4f4" stroke-width="0.35">60%</text>
<text x="991.0" y="437.5" style="font-size:12.5px;fill:#f4f4f4" stroke="#f4f4f4" stroke-width="0.35">80%</text>
<text x="1057.0" y="437.5" style="font-size:12.5px;fill:#f4f4f4" stroke="#f4f4f4" stroke-width="0.35">100%</text>
<rect x="694" y="443" width="424" height="20" fill="#454545"/><rect x="683" y="443" width="11" height="20" fill="#282828"/>
<text x="698.0" y="458.0" textLength="51.1" lengthAdjust="spacingAndGlyphs" style="font-size:12.5px;fill:#f6f6f6">x: CIE31</text>
<text x="796.0" y="458.0" textLength="41.7" lengthAdjust="spacingAndGlyphs" style="font-size:12.5px;fill:#f6f6f6">0,2812</text>
<text x="861.0" y="458.0" textLength="41.7" lengthAdjust="spacingAndGlyphs" style="font-size:12.5px;fill:#f6f6f6">0,3063</text>
<text x="926.0" y="458.0" textLength="41.7" lengthAdjust="spacingAndGlyphs" style="font-size:12.5px;fill:#f6f6f6">0,3333</text>
<text x="991.0" y="458.0" textLength="41.7" lengthAdjust="spacingAndGlyphs" style="font-size:12.5px;fill:#f6f6f6">0,3608</text>
<text x="1057.0" y="458.0" textLength="41.7" lengthAdjust="spacingAndGlyphs" style="font-size:12.5px;fill:#f6f6f6">0,3898</text>
<rect x="694" y="463" width="424" height="20" fill="#808080"/><rect x="683" y="463" width="11" height="20" fill="#222222"/>
<text x="698.0" y="478.0" textLength="51.1" lengthAdjust="spacingAndGlyphs" style="font-size:12.5px;fill:#f6f6f6">y: CIE31</text>
<text x="796.0" y="478.0" textLength="41.7" lengthAdjust="spacingAndGlyphs" style="font-size:12.5px;fill:#f6f6f6">0,2968</text>
<text x="861.0" y="478.0" textLength="41.7" lengthAdjust="spacingAndGlyphs" style="font-size:12.5px;fill:#f6f6f6">0,3312</text>
<text x="926.0" y="478.0" textLength="41.7" lengthAdjust="spacingAndGlyphs" style="font-size:12.5px;fill:#f6f6f6">0,3689</text>
<text x="991.0" y="478.0" textLength="41.7" lengthAdjust="spacingAndGlyphs" style="font-size:12.5px;fill:#f6f6f6">0,4076</text>
<text x="1057.0" y="478.0" textLength="41.7" lengthAdjust="spacingAndGlyphs" style="font-size:12.5px;fill:#f6f6f6">0,4467</text>
<rect x="694" y="483" width="424" height="20" fill="#454545"/><rect x="683" y="483" width="11" height="20" fill="#282828"/>
<text x="698.0" y="498.0" textLength="8.9" lengthAdjust="spacingAndGlyphs" style="font-size:12.5px;fill:#f6f6f6">Y</text>
<text x="796.0" y="498.0" textLength="49.3" lengthAdjust="spacingAndGlyphs" style="font-size:12.5px;fill:#f6f6f6">96,3361</text>
<text x="861.0" y="498.0" textLength="49.3" lengthAdjust="spacingAndGlyphs" style="font-size:12.5px;fill:#f6f6f6">90,5495</text>
<text x="926.0" y="498.0" textLength="49.3" lengthAdjust="spacingAndGlyphs" style="font-size:12.5px;fill:#f6f6f6">86,2040</text>
<text x="991.0" y="498.0" textLength="49.3" lengthAdjust="spacingAndGlyphs" style="font-size:12.5px;fill:#f6f6f6">82,9652</text>
<text x="1057.0" y="498.0" textLength="49.3" lengthAdjust="spacingAndGlyphs" style="font-size:12.5px;fill:#f6f6f6">80,2181</text>
<rect x="694" y="503" width="424" height="20" fill="#808080"/><rect x="683" y="503" width="11" height="20" fill="#222222"/>
<text x="698.0" y="518.0" textLength="88.1" lengthAdjust="spacingAndGlyphs" style="font-size:12.5px;fill:#f6f6f6">Target x:CIE31</text>
<text x="796.0" y="518.0" textLength="41.7" lengthAdjust="spacingAndGlyphs" style="font-size:12.5px;fill:#f6f6f6">0,3344</text>
<text x="861.0" y="518.0" textLength="41.7" lengthAdjust="spacingAndGlyphs" style="font-size:12.5px;fill:#f6f6f6">0,3564</text>
<text x="926.0" y="518.0" textLength="41.7" lengthAdjust="spacingAndGlyphs" style="font-size:12.5px;fill:#f6f6f6">0,3773</text>
<text x="991.0" y="518.0" textLength="41.7" lengthAdjust="spacingAndGlyphs" style="font-size:12.5px;fill:#f6f6f6">0,3969</text>
<text x="1057.0" y="518.0" textLength="41.7" lengthAdjust="spacingAndGlyphs" style="font-size:12.5px;fill:#f6f6f6">0,4193</text>
<rect x="694" y="523" width="424" height="20" fill="#454545"/><rect x="683" y="523" width="11" height="20" fill="#282828"/>
<text x="698.0" y="538.0" textLength="88.1" lengthAdjust="spacingAndGlyphs" style="font-size:12.5px;fill:#f6f6f6">Target y:CIE31</text>
<text x="796.0" y="538.0" textLength="41.7" lengthAdjust="spacingAndGlyphs" style="font-size:12.5px;fill:#f6f6f6">0,3648</text>
<text x="861.0" y="538.0" textLength="41.7" lengthAdjust="spacingAndGlyphs" style="font-size:12.5px;fill:#f6f6f6">0,4013</text>
<text x="926.0" y="538.0" textLength="41.7" lengthAdjust="spacingAndGlyphs" style="font-size:12.5px;fill:#f6f6f6">0,4358</text>
<text x="991.0" y="538.0" textLength="41.7" lengthAdjust="spacingAndGlyphs" style="font-size:12.5px;fill:#f6f6f6">0,4682</text>
<text x="1057.0" y="538.0" textLength="41.7" lengthAdjust="spacingAndGlyphs" style="font-size:12.5px;fill:#f6f6f6">0,5053</text>
<rect x="694" y="543" width="424" height="20" fill="#808080"/><rect x="683" y="543" width="11" height="20" fill="#222222"/>
<text x="698.0" y="558.0" textLength="49.3" lengthAdjust="spacingAndGlyphs" style="font-size:12.5px;fill:#f6f6f6">Target Y</text>
<text x="796.0" y="558.0" textLength="56.8" lengthAdjust="spacingAndGlyphs" style="font-size:12.5px;fill:#f6f6f6">106,3409</text>
<text x="861.0" y="558.0" textLength="56.8" lengthAdjust="spacingAndGlyphs" style="font-size:12.5px;fill:#f6f6f6">104,4743</text>
<text x="926.0" y="558.0" textLength="56.8" lengthAdjust="spacingAndGlyphs" style="font-size:12.5px;fill:#f6f6f6">103,0401</text>
<text x="991.0" y="558.0" textLength="56.8" lengthAdjust="spacingAndGlyphs" style="font-size:12.5px;fill:#f6f6f6">101,9145</text>
<text x="1057.0" y="558.0" textLength="56.8" lengthAdjust="spacingAndGlyphs" style="font-size:12.5px;fill:#f6f6f6">100,8263</text>
<rect x="681" y="11" width="483" height="405" fill="#000"/><rect x="686" y="16" width="475" height="395" fill="#333333"/>
<rect x="706" y="32" width="453" height="359" fill="#222222"/>
<defs><clipPath id="cHs"><path d="M798.8,388.2 L798.7,388.2 L798.5,388.1 L798.4,388.0 L798.2,387.9 L798.0,387.8 L797.8,387.7 L797.7,387.6 L797.4,387.5 L797.2,387.3 L796.9,387.1 L796.7,386.9 L796.4,386.7 L796.1,386.5 L795.7,386.3 L795.4,386.0 L795.0,385.8 L794.6,385.5 L794.2,385.2 L793.7,384.9 L793.2,384.5 L792.7,384.2 L792.1,383.8 L791.5,383.3 L790.8,382.9 L790.1,382.4 L789.4,381.9 L788.6,381.4 L787.8,380.8 L786.9,380.1 L786.0,379.4 L785.0,378.6 L784.0,377.8 L783.0,376.9 L781.9,375.9 L780.7,374.8 L779.4,373.4 L778.0,371.9 L776.6,370.1 L775.0,368.1 L773.3,365.8 L771.5,363.3 L769.6,360.4 L767.6,357.2 L765.5,353.5 L763.2,349.4 L760.8,344.8 L758.3,339.7 L755.6,334.0 L752.7,327.7 L749.7,320.8 L746.6,313.3 L743.4,305.1 L740.3,296.1 L737.1,286.4 L734.0,276.0 L730.9,265.0 L727.8,253.3 L724.7,240.8 L721.7,228.0 L719.1,215.0 L716.6,201.8 L714.4,188.3 L712.4,174.7 L710.8,161.6 L709.6,148.7 L708.8,136.0 L708.4,123.8 L708.5,112.1 L709.1,101.0 L710.2,90.4 L711.8,80.5 L713.9,71.6 L716.6,63.6 L719.8,56.5 L723.4,50.3 L727.4,45.3 L731.7,41.5 L736.4,38.8 L741.4,37.1 L746.4,36.0 L751.6,35.8 L757.0,36.5 L762.5,37.8 L768.0,39.3 L773.4,41.0 L778.9,43.1 L784.4,45.5 L789.8,47.9 L795.0,50.3 L800.2,52.9 L805.3,55.5 L810.4,58.2 L815.4,61.0 L820.3,63.9 L825.2,66.8 L830.2,69.8 L835.1,72.9 L839.9,76.1 L844.8,79.3 L849.7,82.6 L854.5,85.9 L859.3,89.3 L864.1,92.7 L869.0,96.2 L873.8,99.7 L878.6,103.2 L883.4,106.8 L888.2,110.4 L893.0,114.0 L897.9,117.6 L902.7,121.3 L907.5,125.0 L912.3,128.7 L917.1,132.4 L921.9,136.1 L926.7,139.8 L931.5,143.5 L936.3,147.2 L941.0,151.0 L945.8,154.7 L950.5,158.3 L955.2,162.0 L959.8,165.7 L964.5,169.3 L969.1,172.9 L973.6,176.5 L978.2,180.1 L982.6,183.6 L987.1,187.1 L991.5,190.5 L995.8,193.9 L1000.0,197.3 L1004.2,200.6 L1008.4,203.8 L1012.5,207.0 L1016.4,210.1 L1020.3,213.2 L1024.1,216.2 L1027.8,219.1 L1031.4,221.9 L1034.8,224.6 L1038.1,227.2 L1041.3,229.7 L1044.4,232.1 L1047.4,234.5 L1050.3,236.7 L1053.1,239.0 L1055.8,241.1 L1058.3,243.0 L1060.8,244.9 L1063.1,246.7 L1065.3,248.4 L1067.4,250.1 L1069.3,251.6 L1071.2,253.1 L1073.0,254.5 L1074.6,255.8 L1076.2,257.1 L1077.7,258.3 L1079.1,259.4 L1080.5,260.4 L1081.7,261.4 L1082.9,262.3 L1084.0,263.2 L1085.1,264.0 L1086.1,264.8 L1087.0,265.6 L1088.0,266.3 L1088.8,267.0 L1089.7,267.7 L1090.5,268.3 L1091.2,268.9 L1092.0,269.5 L1092.7,270.0 L1093.3,270.5 L1093.9,271.0 L1094.5,271.5 L1095.1,271.9 L1095.6,272.3 L1096.1,272.7 L1096.5,273.0 L1097.0,273.4 L1097.3,273.7 L1097.7,273.9 L1098.1,274.2 L1098.4,274.5 L1098.7,274.7 L1099.0,274.9 L1099.2,275.1 L1099.5,275.3 L1099.7,275.5 L1099.9,275.6 L1100.0,275.8 L1100.2,275.9 L1100.3,276.0 L1100.5,276.1 L1100.6,276.2 L1100.7,276.3 L1100.8,276.4 L1100.9,276.5 L1101.1,276.6 L1101.3,276.8 L1101.5,276.9 L1101.7,277.1 L1101.9,277.2 L1102.1,277.4 L1102.3,277.5 L1102.4,277.6 Z"/></clipPath><clipPath id="cTr"><path d="M1051.4,250.1 L868.1,135.4 L787.2,364.9 Z"/></clipPath><filter id="bl" x="-5%" y="-5%" width="110%" height="110%"><feGaussianBlur stdDeviation="1.5"/></filter><linearGradient id="o0" gradientUnits="userSpaceOnUse" x1="704" y1="0" x2="800" y2="0"><stop offset="0.000" stop-color="#004700"/><stop offset="0.167" stop-color="#004d00"/><stop offset="0.333" stop-color="#005300"/><stop offset="0.500" stop-color="#005800"/><stop offset="0.667" stop-color="#005d00"/><stop offset="0.833" stop-color="#006000"/><stop offset="1.000" stop-color="#006300"/></linearGradient><linearGradient id="o1" gradientUnits="userSpaceOnUse" x1="704" y1="0" x2="800" y2="0"><stop offset="0.000" stop-color="#004900"/><stop offset="0.167" stop-color="#004f00"/><stop offset="0.333" stop-color="#005500"/><stop offset="0.500" stop-color="#005a00"/><stop offset="0.667" stop-color="#005f00"/><stop offset="0.833" stop-color="#006200"/><stop offset="1.000" stop-color="#006500"/></linearGradient><linearGradient id="o2" gradientUnits="userSpaceOnUse" x1="704" y1="0" x2="800" y2="0"><stop offset="0.000" stop-color="#004b01"/><stop offset="0.167" stop-color="#005100"/><stop offset="0.333" stop-color="#005700"/><stop offset="0.500" stop-color="#005c00"/><stop offset="0.667" stop-color="#006100"/><stop offset="0.833" stop-color="#006500"/><stop offset="1.000" stop-color="#006800"/></linearGradient><linearGradient id="o3" gradientUnits="userSpaceOnUse" x1="688" y1="0" x2="816" y2="0"><stop offset="0.000" stop-color="#004502"/><stop offset="0.125" stop-color="#004c01"/><stop offset="0.250" stop-color="#005300"/><stop offset="0.375" stop-color="#005900"/><stop offset="0.500" stop-color="#005e00"/><stop offset="0.625" stop-color="#006300"/><stop offset="0.750" stop-color="#006700"/><stop offset="0.875" stop-color="#006a00"/><stop offset="1.000" stop-color="#006c00"/></linearGradient><linearGradient id="o4" gradientUnits="userSpaceOnUse" x1="688" y1="0" x2="816" y2="0"><stop offset="0.000" stop-color="#004703"/><stop offset="0.125" stop-color="#004e01"/><stop offset="0.250" stop-color="#005500"/><stop offset="0.375" stop-color="#005b00"/><stop offset="0.500" stop-color="#006000"/><stop offset="0.625" stop-color="#006500"/><stop offset="0.750" stop-color="#006900"/><stop offset="0.875" stop-color="#006c00"/><stop offset="1.000" stop-color="#006e00"/></linearGradient><linearGradient id="o5" gradientUnits="userSpaceOnUse" x1="688" y1="0" x2="832" y2="0"><stop offset="0.000" stop-color="#004903"/><stop offset="0.111" stop-color="#005002"/><stop offset="0.222" stop-color="#005600"/><stop offset="0.333" stop-color="#005c00"/><stop offset="0.444" stop-color="#006200"/><stop offset="0.556" stop-color="#006700"/><stop offset="0.667" stop-color="#006b00"/><stop offset="0.778" stop-color="#006e00"/><stop offset="0.889" stop-color="#007000"/><stop offset="1.000" stop-color="#007200"/></linearGradient><linearGradient id="o6" gradientUnits="userSpaceOnUse" x1="688" y1="0" x2="832" y2="0"><stop offset="0.000" stop-color="#004a04"/><stop offset="0.111" stop-color="#005203"/><stop offset="0.222" stop-color="#005801"/><stop offset="0.333" stop-color="#005e00"/><stop offset="0.444" stop-color="#006400"/><stop offset="0.556" stop-color="#006900"/><stop offset="0.667" stop-color="#006d00"/><stop offset="0.778" stop-color="#007000"/><stop offset="0.889" stop-color="#007200"/><stop offset="1.000" stop-color="#007400"/></linearGradient><linearGradient id="o7" gradientUnits="userSpaceOnUse" x1="688" y1="0" x2="848" y2="0"><stop offset="0.000" stop-color="#004c04"/><stop offset="0.100" stop-color="#005303"/><stop offset="0.200" stop-color="#005a02"/><stop offset="0.300" stop-color="#006000"/><stop offset="0.400" stop-color="#006600"/><stop offset="0.500" stop-color="#006b00"/><stop offset="0.600" stop-color="#006f00"/><stop offset="0.700" stop-color="#007200"/><stop offset="0.800" stop-color="#007400"/><stop offset="0.900" stop-color="#007600"/><stop offset="1.000" stop-color="#007600"/></linearGradient><linearGradient id="o8" gradientUnits="userSpaceOnUse" x1="688" y1="0" x2="848" y2="0"><stop offset="0.000" stop-color="#004e05"/><stop offset="0.100" stop-color="#005504"/><stop offset="0.200" stop-color="#005c02"/><stop offset="0.300" stop-color="#006200"/><stop offset="0.400" stop-color="#006800"/><stop offset="0.500" stop-color="#006d00"/><stop offset="0.600" stop-color="#007100"/><stop offset="0.700" stop-color="#007400"/><stop offset="0.800" stop-color="#007700"/><stop offset="0.900" stop-color="#007800"/><stop offset="1.000" stop-color="#007900"/></linearGradient><linearGradient id="o9" gradientUnits="userSpaceOnUse" x1="672" y1="0" x2="848" y2="0"><stop offset="0.000" stop-color="#004806"/><stop offset="0.091" stop-color="#004f05"/><stop offset="0.182" stop-color="#005704"/><stop offset="0.273" stop-color="#005e03"/><stop offset="0.364" stop-color="#006401"/><stop offset="0.455" stop-color="#006a00"/><stop offset="0.545" stop-color="#006f00"/><stop offset="0.636" stop-color="#007300"/><stop offset="0.727" stop-color="#007600"/><stop offset="0.818" stop-color="#007900"/><stop offset="0.909" stop-color="#007a00"/><stop offset="1.000" stop-color="#007b00"/></linearGradient><linearGradient id="o10" gradientUnits="userSpaceOnUse" x1="672" y1="0" x2="864" y2="0"><stop offset="0.000" stop-color="#004907"/><stop offset="0.083" stop-color="#005106"/><stop offset="0.167" stop-color="#005805"/><stop offset="0.250" stop-color="#005f04"/><stop offset="0.333" stop-color="#006602"/><stop offset="0.417" stop-color="#006b00"/><stop offset="0.500" stop-color="#007100"/><stop offset="0.583" stop-color="#007500"/><stop offset="0.667" stop-color="#007800"/><stop offset="0.750" stop-color="#007b00"/><stop offset="0.833" stop-color="#007c00"/><stop offset="0.917" stop-color="#007d00"/><stop offset="1.000" stop-color="#007c00"/></linearGradient><linearGradient id="o11" gradientUnits="userSpaceOnUse" x1="672" y1="0" x2="864" y2="0"><stop offset="0.000" stop-color="#004b07"/><stop offset="0.083" stop-color="#005307"/><stop offset="0.167" stop-color="#005a06"/><stop offset="0.250" stop-color="#006104"/><stop offset="0.333" stop-color="#006802"/><stop offset="0.417" stop-color="#006d00"/><stop offset="0.500" stop-color="#007300"/><stop offset="0.583" stop-color="#007700"/><stop offset="0.667" stop-color="#007a00"/><stop offset="0.750" stop-color="#007d00"/><stop offset="0.833" stop-color="#007f00"/><stop offset="0.917" stop-color="#007f00"/><stop offset="1.000" stop-color="#007f00"/></linearGradient><linearGradient id="o12" gradientUnits="userSpaceOnUse" x1="672" y1="0" x2="864" y2="0"><stop offset="0.000" stop-color="#004c08"/><stop offset="0.083" stop-color="#005407"/><stop offset="0.167" stop-color="#005c06"/><stop offset="0.250" stop-color="#006305"/><stop offset="0.333" stop-color="#006903"/><stop offset="0.417" stop-color="#006f01"/><stop offset="0.500" stop-color="#007400"/><stop offset="0.583" stop-color="#007900"/><stop offset="0.667" stop-color="#007c00"/><stop offset="0.750" stop-color="#007f00"/><stop offset="0.833" stop-color="#008100"/><stop offset="0.917" stop-color="#008100"/><stop offset="1.000" stop-color="#008100"/></linearGradient><linearGradient id="o13" gradientUnits="userSpaceOnUse" x1="672" y1="0" x2="880" y2="0"><stop offset="0.000" stop-color="#004e09"/><stop offset="0.077" stop-color="#005608"/><stop offset="0.154" stop-color="#005d07"/><stop offset="0.231" stop-color="#006506"/><stop offset="0.308" stop-color="#006b04"/><stop offset="0.385" stop-color="#007102"/><stop offset="0.462" stop-color="#007600"/><stop offset="0.538" stop-color="#007b00"/><stop offset="0.615" stop-color="#007f00"/><stop offset="0.692" stop-color="#008100"/><stop offset="0.769" stop-color="#008300"/><stop offset="0.846" stop-color="#008300"/><stop offset="0.923" stop-color="#008300"/><stop offset="1.000" stop-color="#008100"/></linearGradient><linearGradient id="o14" gradientUnits="userSpaceOnUse" x1="672" y1="0" x2="880" y2="0"><stop offset="0.000" stop-color="#004f0a"/><stop offset="0.077" stop-color="#005709"/><stop offset="0.154" stop-color="#005f08"/><stop offset="0.231" stop-color="#006607"/><stop offset="0.308" stop-color="#006d05"/><stop offset="0.385" stop-color="#007303"/><stop offset="0.462" stop-color="#007800"/><stop offset="0.538" stop-color="#007d00"/><stop offset="0.615" stop-color="#008100"/><stop offset="0.692" stop-color="#008300"/><stop offset="0.769" stop-color="#008500"/><stop offset="0.846" stop-color="#008600"/><stop offset="0.923" stop-color="#008500"/><stop offset="1.000" stop-color="#008400"/></linearGradient><linearGradient id="o15" gradientUnits="userSpaceOnUse" x1="672" y1="0" x2="880" y2="0"><stop offset="0.000" stop-color="#00510a"/><stop offset="0.077" stop-color="#00590a"/><stop offset="0.154" stop-color="#006109"/><stop offset="0.231" stop-color="#006807"/><stop offset="0.308" stop-color="#006f06"/><stop offset="0.385" stop-color="#007503"/><stop offset="0.462" stop-color="#007a01"/><stop offset="0.538" stop-color="#007f00"/><stop offset="0.615" stop-color="#008300"/><stop offset="0.692" stop-color="#008500"/><stop offset="0.769" stop-color="#008700"/><stop offset="0.846" stop-color="#008800"/><stop offset="0.923" stop-color="#008700"/><stop offset="1.000" stop-color="#008600"/></linearGradient><linearGradient id="o16" gradientUnits="userSpaceOnUse" x1="672" y1="0" x2="880" y2="0"><stop offset="0.000" stop-color="#00520b"/><stop offset="0.077" stop-color="#005a0b"/><stop offset="0.154" stop-color="#00620a"/><stop offset="0.231" stop-color="#006a08"/><stop offset="0.308" stop-color="#007106"/><stop offset="0.385" stop-color="#007704"/><stop offset="0.462" stop-color="#007c02"/><stop offset="0.538" stop-color="#008100"/><stop offset="0.615" stop-color="#008500"/><stop offset="0.692" stop-color="#008800"/><stop offset="0.769" stop-color="#008900"/><stop offset="0.846" stop-color="#008a00"/><stop offset="0.923" stop-color="#008900"/><stop offset="1.000" stop-color="#008800"/></linearGradient><linearGradient id="o17" gradientUnits="userSpaceOnUse" x1="672" y1="0" x2="896" y2="0"><stop offset="0.000" stop-color="#00540c"/><stop offset="0.071" stop-color="#005c0b"/><stop offset="0.143" stop-color="#00640a"/><stop offset="0.214" stop-color="#006b09"/><stop offset="0.286" stop-color="#007207"/><stop offset="0.357" stop-color="#007905"/><stop offset="0.429" stop-color="#007e03"/><stop offset="0.500" stop-color="#008300"/><stop offset="0.571" stop-color="#008700"/><stop offset="0.643" stop-color="#008a00"/><stop offset="0.714" stop-color="#008b00"/><stop offset="0.786" stop-color="#008c00"/><stop offset="0.857" stop-color="#008c00"/><stop offset="0.929" stop-color="#008a00"/><stop offset="1.000" stop-color="#088700"/></linearGradient><linearGradient id="o18" gradientUnits="userSpaceOnUse" x1="672" y1="0" x2="896" y2="0"><stop offset="0.000" stop-color="#00550d"/><stop offset="0.071" stop-color="#005d0c"/><stop offset="0.143" stop-color="#00650b"/><stop offset="0.214" stop-color="#006d0a"/><stop offset="0.286" stop-color="#007408"/><stop offset="0.357" stop-color="#007a06"/><stop offset="0.429" stop-color="#008004"/><stop offset="0.500" stop-color="#008501"/><stop offset="0.571" stop-color="#008900"/><stop offset="0.643" stop-color="#008c00"/><stop offset="0.714" stop-color="#008e00"/><stop offset="0.786" stop-color="#008e00"/><stop offset="0.857" stop-color="#008e00"/><stop offset="0.929" stop-color="#008c00"/><stop offset="1.000" stop-color="#098900"/></linearGradient><linearGradient id="o19" gradientUnits="userSpaceOnUse" x1="672" y1="0" x2="896" y2="0"><stop offset="0.000" stop-color="#00560e"/><stop offset="0.071" stop-color="#005f0d"/><stop offset="0.143" stop-color="#00670c"/><stop offset="0.214" stop-color="#006f0b"/><stop offset="0.286" stop-color="#007609"/><stop offset="0.357" stop-color="#007c07"/><stop offset="0.429" stop-color="#008205"/><stop offset="0.500" stop-color="#008702"/><stop offset="0.571" stop-color="#008b00"/><stop offset="0.643" stop-color="#008e00"/><stop offset="0.714" stop-color="#009000"/><stop offset="0.786" stop-color="#009000"/><stop offset="0.857" stop-color="#009000"/><stop offset="0.929" stop-color="#008e00"/><stop offset="1.000" stop-color="#0b8b00"/></linearGradient><linearGradient id="o20" gradientUnits="userSpaceOnUse" x1="672" y1="0" x2="896" y2="0"><stop offset="0.000" stop-color="#00580e"/><stop offset="0.071" stop-color="#00600e"/><stop offset="0.143" stop-color="#00690d"/><stop offset="0.214" stop-color="#00700c"/><stop offset="0.286" stop-color="#00780a"/><stop offset="0.357" stop-color="#007e08"/><stop offset="0.429" stop-color="#008406"/><stop offset="0.500" stop-color="#008903"/><stop offset="0.571" stop-color="#008d00"/><stop offset="0.643" stop-color="#009000"/><stop offset="0.714" stop-color="#009200"/><stop offset="0.786" stop-color="#009200"/><stop offset="0.857" stop-color="#009200"/><stop offset="0.929" stop-color="#009000"/><stop offset="1.000" stop-color="#0c8d00"/></linearGradient><linearGradient id="o21" gradientUnits="userSpaceOnUse" x1="672" y1="0" x2="912" y2="0"><stop offset="0.000" stop-color="#00590f"/><stop offset="0.067" stop-color="#00620f"/><stop offset="0.133" stop-color="#006a0e"/><stop offset="0.200" stop-color="#00720d"/><stop offset="0.267" stop-color="#00790c"/><stop offset="0.333" stop-color="#008009"/><stop offset="0.400" stop-color="#008607"/><stop offset="0.467" stop-color="#008b04"/><stop offset="0.533" stop-color="#008f00"/><stop offset="0.600" stop-color="#009200"/><stop offset="0.667" stop-color="#009400"/><stop offset="0.733" stop-color="#009500"/><stop offset="0.800" stop-color="#009400"/><stop offset="0.867" stop-color="#009200"/><stop offset="0.933" stop-color="#0e8f00"/><stop offset="1.000" stop-color="#1e8b00"/></linearGradient><linearGradient id="o22" gradientUnits="userSpaceOnUse" x1="672" y1="0" x2="912" y2="0"><stop offset="0.000" stop-color="#005b10"/><stop offset="0.067" stop-color="#006310"/><stop offset="0.133" stop-color="#006c10"/><stop offset="0.200" stop-color="#00740e"/><stop offset="0.267" stop-color="#007b0d"/><stop offset="0.333" stop-color="#00820b"/><stop offset="0.400" stop-color="#008808"/><stop offset="0.467" stop-color="#008d05"/><stop offset="0.533" stop-color="#009101"/><stop offset="0.600" stop-color="#009400"/><stop offset="0.667" stop-color="#009600"/><stop offset="0.733" stop-color="#009700"/><stop offset="0.800" stop-color="#009600"/><stop offset="0.867" stop-color="#009400"/><stop offset="0.933" stop-color="#0f9100"/><stop offset="1.000" stop-color="#208d00"/></linearGradient><linearGradient id="o23" gradientUnits="userSpaceOnUse" x1="672" y1="0" x2="912" y2="0"><stop offset="0.000" stop-color="#005c11"/><stop offset="0.067" stop-color="#006511"/><stop offset="0.133" stop-color="#006d11"/><stop offset="0.200" stop-color="#007510"/><stop offset="0.267" stop-color="#007d0e"/><stop offset="0.333" stop-color="#00830c"/><stop offset="0.400" stop-color="#008a09"/><stop offset="0.467" stop-color="#008f06"/><stop offset="0.533" stop-color="#009303"/><stop offset="0.600" stop-color="#009600"/><stop offset="0.667" stop-color="#009800"/><stop offset="0.733" stop-color="#009900"/><stop offset="0.800" stop-color="#009800"/><stop offset="0.867" stop-color="#009700"/><stop offset="0.933" stop-color="#119300"/><stop offset="1.000" stop-color="#228f00"/></linearGradient><linearGradient id="o24" gradientUnits="userSpaceOnUse" x1="672" y1="0" x2="912" y2="0"><stop offset="0.000" stop-color="#005d12"/><stop offset="0.067" stop-color="#006612"/><stop offset="0.133" stop-color="#006f12"/><stop offset="0.200" stop-color="#007711"/><stop offset="0.267" stop-color="#007e0f"/><stop offset="0.333" stop-color="#00850d"/><stop offset="0.400" stop-color="#008b0b"/><stop offset="0.467" stop-color="#009107"/><stop offset="0.533" stop-color="#009504"/><stop offset="0.600" stop-color="#009800"/><stop offset="0.667" stop-color="#009900"/><stop offset="0.733" stop-color="#009900"/><stop offset="0.800" stop-color="#009900"/><stop offset="0.867" stop-color="#009900"/><stop offset="0.933" stop-color="#129500"/><stop offset="1.000" stop-color="#249100"/></linearGradient><linearGradient id="o25" gradientUnits="userSpaceOnUse" x1="672" y1="0" x2="928" y2="0"><stop offset="0.000" stop-color="#005f14"/><stop offset="0.062" stop-color="#006814"/><stop offset="0.125" stop-color="#007013"/><stop offset="0.188" stop-color="#007812"/><stop offset="0.250" stop-color="#008010"/><stop offset="0.312" stop-color="#00870e"/><stop offset="0.375" stop-color="#008d0c"/><stop offset="0.438" stop-color="#009309"/><stop offset="0.500" stop-color="#009705"/><stop offset="0.562" stop-color="#009901"/><stop offset="0.625" stop-color="#009900"/><stop offset="0.688" stop-color="#009900"/><stop offset="0.750" stop-color="#009900"/><stop offset="0.812" stop-color="#029900"/><stop offset="0.875" stop-color="#149800"/><stop offset="0.938" stop-color="#269300"/><stop offset="1.000" stop-color="#398e00"/></linearGradient><linearGradient id="o26" gradientUnits="userSpaceOnUse" x1="672" y1="0" x2="928" y2="0"><stop offset="0.000" stop-color="#006015"/><stop offset="0.062" stop-color="#006915"/><stop offset="0.125" stop-color="#007214"/><stop offset="0.188" stop-color="#007a13"/><stop offset="0.250" stop-color="#008212"/><stop offset="0.312" stop-color="#008910"/><stop offset="0.375" stop-color="#008f0d"/><stop offset="0.438" stop-color="#00950a"/><stop offset="0.500" stop-color="#009907"/><stop offset="0.562" stop-color="#009902"/><stop offset="0.625" stop-color="#009900"/><stop offset="0.688" stop-color="#009900"/><stop offset="0.750" stop-color="#009900"/><stop offset="0.812" stop-color="#039900"/><stop offset="0.875" stop-color="#169900"/><stop offset="0.938" stop-color="#299500"/><stop offset="1.000" stop-color="#3c9000"/></linearGradient><linearGradient id="o27" gradientUnits="userSpaceOnUse" x1="672" y1="0" x2="928" y2="0"><stop offset="0.000" stop-color="#006116"/><stop offset="0.062" stop-color="#006a16"/><stop offset="0.125" stop-color="#007316"/><stop offset="0.188" stop-color="#007b15"/><stop offset="0.250" stop-color="#008313"/><stop offset="0.312" stop-color="#008a11"/><stop offset="0.375" stop-color="#00910f"/><stop offset="0.438" stop-color="#00970c"/><stop offset="0.500" stop-color="#009908"/><stop offset="0.562" stop-color="#009904"/><stop offset="0.625" stop-color="#009900"/><stop offset="0.688" stop-color="#009900"/><stop offset="0.750" stop-color="#009900"/><stop offset="0.812" stop-color="#049900"/><stop offset="0.875" stop-color="#179900"/><stop offset="0.938" stop-color="#2b9700"/><stop offset="1.000" stop-color="#3f9200"/></linearGradient><linearGradient id="o28" gradientUnits="userSpaceOnUse" x1="672" y1="0" x2="928" y2="0"><stop offset="0.000" stop-color="#006217"/><stop offset="0.062" stop-color="#006c17"/><stop offset="0.125" stop-color="#007517"/><stop offset="0.188" stop-color="#007d16"/><stop offset="0.250" stop-color="#008515"/><stop offset="0.312" stop-color="#008c13"/><stop offset="0.375" stop-color="#009310"/><stop offset="0.438" stop-color="#00990d"/><stop offset="0.500" stop-color="#009909"/><stop offset="0.562" stop-color="#009905"/><stop offset="0.625" stop-color="#009901"/><stop offset="0.688" stop-color="#009900"/><stop offset="0.750" stop-color="#009900"/><stop offset="0.812" stop-color="#059900"/><stop offset="0.875" stop-color="#199900"/><stop offset="0.938" stop-color="#2e9900"/><stop offset="1.000" stop-color="#429300"/></linearGradient><linearGradient id="o29" gradientUnits="userSpaceOnUse" x1="672" y1="0" x2="944" y2="0"><stop offset="0.000" stop-color="#006418"/><stop offset="0.059" stop-color="#006d18"/><stop offset="0.118" stop-color="#007618"/><stop offset="0.176" stop-color="#007e18"/><stop offset="0.235" stop-color="#008616"/><stop offset="0.294" stop-color="#008e14"/><stop offset="0.353" stop-color="#009512"/><stop offset="0.412" stop-color="#00990f"/><stop offset="0.471" stop-color="#00990b"/><stop offset="0.529" stop-color="#009907"/><stop offset="0.588" stop-color="#009902"/><stop offset="0.647" stop-color="#009900"/><stop offset="0.706" stop-color="#009900"/><stop offset="0.765" stop-color="#079900"/><stop offset="0.824" stop-color="#1b9900"/><stop offset="0.882" stop-color="#309900"/><stop offset="0.941" stop-color="#459500"/><stop offset="1.000" stop-color="#598f00"/></linearGradient><linearGradient id="o30" gradientUnits="userSpaceOnUse" x1="672" y1="0" x2="944" y2="0"><stop offset="0.000" stop-color="#006519"/><stop offset="0.059" stop-color="#006e1a"/><stop offset="0.118" stop-color="#00771a"/><stop offset="0.176" stop-color="#008019"/><stop offset="0.235" stop-color="#008818"/><stop offset="0.294" stop-color="#009016"/><stop offset="0.353" stop-color="#009614"/><stop offset="0.412" stop-color="#009910"/><stop offset="0.471" stop-color="#00990c"/><stop offset="0.529" stop-color="#009908"/><stop offset="0.588" stop-color="#009904"/><stop offset="0.647" stop-color="#009900"/><stop offset="0.706" stop-color="#009900"/><stop offset="0.765" stop-color="#089900"/><stop offset="0.824" stop-color="#1c9900"/><stop offset="0.882" stop-color="#329900"/><stop offset="0.941" stop-color="#489700"/><stop offset="1.000" stop-color="#5d9000"/></linearGradient><linearGradient id="o31" gradientUnits="userSpaceOnUse" x1="672" y1="0" x2="944" y2="0"><stop offset="0.000" stop-color="#00661b"/><stop offset="0.059" stop-color="#00701b"/><stop offset="0.118" stop-color="#00791b"/><stop offset="0.176" stop-color="#00811b"/><stop offset="0.235" stop-color="#008a19"/><stop offset="0.294" stop-color="#009118"/><stop offset="0.353" stop-color="#009815"/><stop offset="0.412" stop-color="#009912"/><stop offset="0.471" stop-color="#00990e"/><stop offset="0.529" stop-color="#00990a"/><stop offset="0.588" stop-color="#009905"/><stop offset="0.647" stop-color="#009900"/><stop offset="0.706" stop-color="#009900"/><stop offset="0.765" stop-color="#099900"/><stop offset="0.824" stop-color="#1e9900"/><stop offset="0.882" stop-color="#349900"/><stop offset="0.941" stop-color="#4c9900"/><stop offset="1.000" stop-color="#619200"/></linearGradient><linearGradient id="o32" gradientUnits="userSpaceOnUse" x1="672" y1="0" x2="944" y2="0"><stop offset="0.000" stop-color="#00671c"/><stop offset="0.059" stop-color="#00711d"/><stop offset="0.118" stop-color="#007a1d"/><stop offset="0.176" stop-color="#00831c"/><stop offset="0.235" stop-color="#008b1b"/><stop offset="0.294" stop-color="#009319"/><stop offset="0.353" stop-color="#009917"/><stop offset="0.412" stop-color="#009913"/><stop offset="0.471" stop-color="#00990f"/><stop offset="0.529" stop-color="#00990b"/><stop offset="0.588" stop-color="#009907"/><stop offset="0.647" stop-color="#009902"/><stop offset="0.706" stop-color="#009900"/><stop offset="0.765" stop-color="#0b9900"/><stop offset="0.824" stop-color="#209900"/><stop offset="0.882" stop-color="#369900"/><stop offset="0.941" stop-color="#4f9900"/><stop offset="1.000" stop-color="#659400"/></linearGradient><linearGradient id="o33" gradientUnits="userSpaceOnUse" x1="672" y1="0" x2="960" y2="0"><stop offset="0.000" stop-color="#00681d"/><stop offset="0.056" stop-color="#00721e"/><stop offset="0.111" stop-color="#007b1e"/><stop offset="0.167" stop-color="#00841e"/><stop offset="0.222" stop-color="#008d1d"/><stop offset="0.278" stop-color="#00951b"/><stop offset="0.333" stop-color="#009918"/><stop offset="0.389" stop-color="#009915"/><stop offset="0.444" stop-color="#009911"/><stop offset="0.500" stop-color="#00990d"/><stop offset="0.556" stop-color="#009908"/><stop offset="0.611" stop-color="#009903"/><stop offset="0.667" stop-color="#009900"/><stop offset="0.722" stop-color="#0c9900"/><stop offset="0.778" stop-color="#229900"/><stop offset="0.833" stop-color="#399900"/><stop offset="0.889" stop-color="#529900"/><stop offset="0.944" stop-color="#6a9500"/><stop offset="1.000" stop-color="#7f8d00"/></linearGradient><linearGradient id="o34" gradientUnits="userSpaceOnUse" x1="672" y1="0" x2="960" y2="0"><stop offset="0.000" stop-color="#006a1f"/><stop offset="0.056" stop-color="#007320"/><stop offset="0.111" stop-color="#007d20"/><stop offset="0.167" stop-color="#008620"/><stop offset="0.222" stop-color="#008e1f"/><stop offset="0.278" stop-color="#00961d"/><stop offset="0.333" stop-color="#00991a"/><stop offset="0.389" stop-color="#009916"/><stop offset="0.444" stop-color="#009912"/><stop offset="0.500" stop-color="#00990e"/><stop offset="0.556" stop-color="#00990a"/><stop offset="0.611" stop-color="#009905"/><stop offset="0.667" stop-color="#009900"/><stop offset="0.722" stop-color="#0e9900"/><stop offset="0.778" stop-color="#249900"/><stop offset="0.833" stop-color="#3b9900"/><stop offset="0.889" stop-color="#559900"/><stop offset="0.944" stop-color="#6f9700"/><stop offset="1.000" stop-color="#858f00"/></linearGradient><linearGradient id="o35" gradientUnits="userSpaceOnUse" x1="672" y1="0" x2="960" y2="0"><stop offset="0.000" stop-color="#006b20"/><stop offset="0.056" stop-color="#007421"/><stop offset="0.111" stop-color="#007e22"/><stop offset="0.167" stop-color="#008721"/><stop offset="0.222" stop-color="#009021"/><stop offset="0.278" stop-color="#00981f"/><stop offset="0.333" stop-color="#00991c"/><stop offset="0.389" stop-color="#009918"/><stop offset="0.444" stop-color="#009914"/><stop offset="0.500" stop-color="#009910"/><stop offset="0.556" stop-color="#00990b"/><stop offset="0.611" stop-color="#009907"/><stop offset="0.667" stop-color="#009901"/><stop offset="0.722" stop-color="#109900"/><stop offset="0.778" stop-color="#269900"/><stop offset="0.833" stop-color="#3e9900"/><stop offset="0.889" stop-color="#589900"/><stop offset="0.944" stop-color="#739900"/><stop offset="1.000" stop-color="#8a9100"/></linearGradient><linearGradient id="o36" gradientUnits="userSpaceOnUse" x1="672" y1="0" x2="960" y2="0"><stop offset="0.000" stop-color="#006c22"/><stop offset="0.056" stop-color="#007623"/><stop offset="0.111" stop-color="#007f23"/><stop offset="0.167" stop-color="#008823"/><stop offset="0.222" stop-color="#009122"/><stop offset="0.278" stop-color="#009921"/><stop offset="0.333" stop-color="#00991d"/><stop offset="0.389" stop-color="#00991a"/><stop offset="0.444" stop-color="#009916"/><stop offset="0.500" stop-color="#009912"/><stop offset="0.556" stop-color="#00990d"/><stop offset="0.611" stop-color="#009908"/><stop offset="0.667" stop-color="#009903"/><stop offset="0.722" stop-color="#119900"/><stop offset="0.778" stop-color="#289900"/><stop offset="0.833" stop-color="#409900"/><stop offset="0.889" stop-color="#5b9900"/><stop offset="0.944" stop-color="#789900"/><stop offset="1.000" stop-color="#909200"/></linearGradient><linearGradient id="o37" gradientUnits="userSpaceOnUse" x1="672" y1="0" x2="976" y2="0"><stop offset="0.000" stop-color="#006d23"/><stop offset="0.053" stop-color="#007724"/><stop offset="0.105" stop-color="#008025"/><stop offset="0.158" stop-color="#008a25"/><stop offset="0.211" stop-color="#009324"/><stop offset="0.263" stop-color="#009923"/><stop offset="0.316" stop-color="#00991f"/><stop offset="0.368" stop-color="#00991b"/><stop offset="0.421" stop-color="#009918"/><stop offset="0.474" stop-color="#009913"/><stop offset="0.526" stop-color="#00990f"/><stop offset="0.579" stop-color="#00990a"/><stop offset="0.632" stop-color="#009905"/><stop offset="0.684" stop-color="#139900"/><stop offset="0.737" stop-color="#2a9900"/><stop offset="0.789" stop-color="#439900"/><stop offset="0.842" stop-color="#5e9900"/><stop offset="0.895" stop-color="#7c9900"/><stop offset="0.947" stop-color="#939100"/><stop offset="1.000" stop-color="#8b6f00"/></linearGradient><linearGradient id="o38" gradientUnits="userSpaceOnUse" x1="672" y1="0" x2="976" y2="0"><stop offset="0.000" stop-color="#006e25"/><stop offset="0.053" stop-color="#007826"/><stop offset="0.105" stop-color="#008227"/><stop offset="0.158" stop-color="#008b27"/><stop offset="0.211" stop-color="#009426"/><stop offset="0.263" stop-color="#009924"/><stop offset="0.316" stop-color="#009921"/><stop offset="0.368" stop-color="#00991d"/><stop offset="0.421" stop-color="#009919"/><stop offset="0.474" stop-color="#009915"/><stop offset="0.526" stop-color="#009911"/><stop offset="0.579" stop-color="#00990c"/><stop offset="0.632" stop-color="#009907"/><stop offset="0.684" stop-color="#159901"/><stop offset="0.737" stop-color="#2c9900"/><stop offset="0.789" stop-color="#469900"/><stop offset="0.842" stop-color="#619900"/><stop offset="0.895" stop-color="#809900"/><stop offset="0.947" stop-color="#958e00"/><stop offset="1.000" stop-color="#8c6c00"/></linearGradient><linearGradient id="o39" gradientUnits="userSpaceOnUse" x1="672" y1="0" x2="976" y2="0"><stop offset="0.000" stop-color="#006f26"/><stop offset="0.053" stop-color="#007928"/><stop offset="0.105" stop-color="#008329"/><stop offset="0.158" stop-color="#008c29"/><stop offset="0.211" stop-color="#009529"/><stop offset="0.263" stop-color="#009926"/><stop offset="0.316" stop-color="#009923"/><stop offset="0.368" stop-color="#00991f"/><stop offset="0.421" stop-color="#00991b"/><stop offset="0.474" stop-color="#009917"/><stop offset="0.526" stop-color="#009912"/><stop offset="0.579" stop-color="#00990e"/><stop offset="0.632" stop-color="#009908"/><stop offset="0.684" stop-color="#169903"/><stop offset="0.737" stop-color="#2e9900"/><stop offset="0.789" stop-color="#499900"/><stop offset="0.842" stop-color="#659900"/><stop offset="0.895" stop-color="#849900"/><stop offset="0.947" stop-color="#968a00"/><stop offset="1.000" stop-color="#8d6a00"/></linearGradient><linearGradient id="o40" gradientUnits="userSpaceOnUse" x1="672" y1="0" x2="976" y2="0"><stop offset="0.000" stop-color="#007028"/><stop offset="0.053" stop-color="#007a2a"/><stop offset="0.105" stop-color="#00842b"/><stop offset="0.158" stop-color="#008e2b"/><stop offset="0.211" stop-color="#00972b"/><stop offset="0.263" stop-color="#009928"/><stop offset="0.316" stop-color="#009925"/><stop offset="0.368" stop-color="#009921"/><stop offset="0.421" stop-color="#00991d"/><stop offset="0.474" stop-color="#009919"/><stop offset="0.526" stop-color="#009914"/><stop offset="0.579" stop-color="#00990f"/><stop offset="0.632" stop-color="#02990a"/><stop offset="0.684" stop-color="#189905"/><stop offset="0.737" stop-color="#319900"/><stop offset="0.789" stop-color="#4c9900"/><stop offset="0.842" stop-color="#699900"/><stop offset="0.895" stop-color="#899900"/><stop offset="0.947" stop-color="#988700"/><stop offset="1.000" stop-color="#8e6800"/></linearGradient><linearGradient id="o41" gradientUnits="userSpaceOnUse" x1="672" y1="0" x2="992" y2="0"><stop offset="0.000" stop-color="#00712a"/><stop offset="0.050" stop-color="#007b2c"/><stop offset="0.100" stop-color="#00852d"/><stop offset="0.150" stop-color="#008f2d"/><stop offset="0.200" stop-color="#00982d"/><stop offset="0.250" stop-color="#00992a"/><stop offset="0.300" stop-color="#009927"/><stop offset="0.350" stop-color="#009923"/><stop offset="0.400" stop-color="#00991f"/><stop offset="0.450" stop-color="#00991b"/><stop offset="0.500" stop-color="#009916"/><stop offset="0.550" stop-color="#009911"/><stop offset="0.600" stop-color="#03990c"/><stop offset="0.650" stop-color="#1a9907"/><stop offset="0.700" stop-color="#339900"/><stop offset="0.750" stop-color="#4f9900"/><stop offset="0.800" stop-color="#6c9900"/><stop offset="0.850" stop-color="#8d9900"/><stop offset="0.900" stop-color="#998400"/><stop offset="0.950" stop-color="#906500"/><stop offset="1.000" stop-color="#864e00"/></linearGradient><linearGradient id="o42" gradientUnits="userSpaceOnUse" x1="672" y1="0" x2="992" y2="0"><stop offset="0.000" stop-color="#00722c"/><stop offset="0.050" stop-color="#007c2d"/><stop offset="0.100" stop-color="#00862f"/><stop offset="0.150" stop-color="#00902f"/><stop offset="0.200" stop-color="#00992f"/><stop offset="0.250" stop-color="#00992c"/><stop offset="0.300" stop-color="#009929"/><stop offset="0.350" stop-color="#009925"/><stop offset="0.400" stop-color="#009921"/><stop offset="0.450" stop-color="#00991d"/><stop offset="0.500" stop-color="#009918"/><stop offset="0.550" stop-color="#009913"/><stop offset="0.600" stop-color="#05990e"/><stop offset="0.650" stop-color="#1c9909"/><stop offset="0.700" stop-color="#369902"/><stop offset="0.750" stop-color="#529900"/><stop offset="0.800" stop-color="#709900"/><stop offset="0.850" stop-color="#929900"/><stop offset="0.900" stop-color="#998000"/><stop offset="0.950" stop-color="#916300"/><stop offset="1.000" stop-color="#874d00"/></linearGradient><linearGradient id="o43" gradientUnits="userSpaceOnUse" x1="672" y1="0" x2="992" y2="0"><stop offset="0.000" stop-color="#00732d"/><stop offset="0.050" stop-color="#007d2f"/><stop offset="0.100" stop-color="#008731"/><stop offset="0.150" stop-color="#009132"/><stop offset="0.200" stop-color="#009931"/><stop offset="0.250" stop-color="#00992e"/><stop offset="0.300" stop-color="#00992b"/><stop offset="0.350" stop-color="#009927"/><stop offset="0.400" stop-color="#009923"/><stop offset="0.450" stop-color="#00991f"/><stop offset="0.500" stop-color="#00991a"/><stop offset="0.550" stop-color="#009916"/><stop offset="0.600" stop-color="#069910"/><stop offset="0.650" stop-color="#1e990b"/><stop offset="0.700" stop-color="#399904"/><stop offset="0.750" stop-color="#559900"/><stop offset="0.800" stop-color="#759900"/><stop offset="0.850" stop-color="#979900"/><stop offset="0.900" stop-color="#997c00"/><stop offset="0.950" stop-color="#926000"/><stop offset="1.000" stop-color="#884b00"/></linearGradient><linearGradient id="o44" gradientUnits="userSpaceOnUse" x1="672" y1="0" x2="992" y2="0"><stop offset="0.000" stop-color="#00742f"/><stop offset="0.050" stop-color="#007e31"/><stop offset="0.100" stop-color="#008833"/><stop offset="0.150" stop-color="#009234"/><stop offset="0.200" stop-color="#009933"/><stop offset="0.250" stop-color="#009930"/><stop offset="0.300" stop-color="#00992d"/><stop offset="0.350" stop-color="#009929"/><stop offset="0.400" stop-color="#009925"/><stop offset="0.450" stop-color="#009921"/><stop offset="0.500" stop-color="#00991d"/><stop offset="0.550" stop-color="#009918"/><stop offset="0.600" stop-color="#089912"/><stop offset="0.650" stop-color="#21990d"/><stop offset="0.700" stop-color="#3b9907"/><stop offset="0.750" stop-color="#599900"/><stop offset="0.800" stop-color="#799900"/><stop offset="0.850" stop-color="#999600"/><stop offset="0.900" stop-color="#997800"/><stop offset="0.950" stop-color="#935e00"/><stop offset="1.000" stop-color="#894900"/></linearGradient><linearGradient id="o45" gradientUnits="userSpaceOnUse" x1="672" y1="0" x2="1008" y2="0"><stop offset="0.000" stop-color="#007531"/><stop offset="0.048" stop-color="#007f33"/><stop offset="0.095" stop-color="#008935"/><stop offset="0.143" stop-color="#009336"/><stop offset="0.190" stop-color="#009936"/><stop offset="0.238" stop-color="#009932"/><stop offset="0.286" stop-color="#00992f"/><stop offset="0.333" stop-color="#00992b"/><stop offset="0.381" stop-color="#009927"/><stop offset="0.429" stop-color="#009923"/><stop offset="0.476" stop-color="#00991f"/><stop offset="0.524" stop-color="#00991a"/><stop offset="0.571" stop-color="#0a9915"/><stop offset="0.619" stop-color="#23990f"/><stop offset="0.667" stop-color="#3e9909"/><stop offset="0.714" stop-color="#5c9902"/><stop offset="0.762" stop-color="#7d9900"/><stop offset="0.810" stop-color="#999100"/><stop offset="0.857" stop-color="#997300"/><stop offset="0.905" stop-color="#945b00"/><stop offset="0.952" stop-color="#8a4700"/><stop offset="1.000" stop-color="#803700"/></linearGradient><linearGradient id="o46" gradientUnits="userSpaceOnUse" x1="672" y1="0" x2="1008" y2="0"><stop offset="0.000" stop-color="#007533"/><stop offset="0.048" stop-color="#008036"/><stop offset="0.095" stop-color="#008a38"/><stop offset="0.143" stop-color="#009439"/><stop offset="0.190" stop-color="#009938"/><stop offset="0.238" stop-color="#009935"/><stop offset="0.286" stop-color="#009931"/><stop offset="0.333" stop-color="#00992e"/><stop offset="0.381" stop-color="#00992a"/><stop offset="0.429" stop-color="#009926"/><stop offset="0.476" stop-color="#009921"/><stop offset="0.524" stop-color="#00991c"/><stop offset="0.571" stop-color="#0b9917"/><stop offset="0.619" stop-color="#259911"/><stop offset="0.667" stop-color="#41990b"/><stop offset="0.714" stop-color="#609904"/><stop offset="0.762" stop-color="#829900"/><stop offset="0.810" stop-color="#998b00"/><stop offset="0.857" stop-color="#997000"/><stop offset="0.905" stop-color="#955900"/><stop offset="0.952" stop-color="#8b4500"/><stop offset="1.000" stop-color="#813500"/></linearGradient><linearGradient id="o47" gradientUnits="userSpaceOnUse" x1="672" y1="0" x2="1008" y2="0"><stop offset="0.000" stop-color="#007635"/><stop offset="0.048" stop-color="#008138"/><stop offset="0.095" stop-color="#008b3a"/><stop offset="0.143" stop-color="#00963b"/><stop offset="0.190" stop-color="#00993a"/><stop offset="0.238" stop-color="#009937"/><stop offset="0.286" stop-color="#009933"/><stop offset="0.333" stop-color="#009930"/><stop offset="0.381" stop-color="#00992c"/><stop offset="0.429" stop-color="#009928"/><stop offset="0.476" stop-color="#009923"/><stop offset="0.524" stop-color="#00991f"/><stop offset="0.571" stop-color="#0d9919"/><stop offset="0.619" stop-color="#289914"/><stop offset="0.667" stop-color="#44990d"/><stop offset="0.714" stop-color="#649907"/><stop offset="0.762" stop-color="#879900"/><stop offset="0.810" stop-color="#998700"/><stop offset="0.857" stop-color="#996c00"/><stop offset="0.905" stop-color="#975600"/><stop offset="0.952" stop-color="#8c4300"/><stop offset="1.000" stop-color="#823400"/></linearGradient><linearGradient id="o48" gradientUnits="userSpaceOnUse" x1="672" y1="0" x2="1008" y2="0"><stop offset="0.000" stop-color="#007737"/><stop offset="0.048" stop-color="#00823a"/><stop offset="0.095" stop-color="#008c3c"/><stop offset="0.143" stop-color="#00973e"/><stop offset="0.190" stop-color="#00993c"/><stop offset="0.238" stop-color="#009939"/><stop offset="0.286" stop-color="#009936"/><stop offset="0.333" stop-color="#009932"/><stop offset="0.381" stop-color="#00992f"/><stop offset="0.429" stop-color="#00992a"/><stop offset="0.476" stop-color="#009926"/><stop offset="0.524" stop-color="#009921"/><stop offset="0.571" stop-color="#0f991c"/><stop offset="0.619" stop-color="#2a9916"/><stop offset="0.667" stop-color="#489910"/><stop offset="0.714" stop-color="#689909"/><stop offset="0.762" stop-color="#8c9901"/><stop offset="0.810" stop-color="#998200"/><stop offset="0.857" stop-color="#996800"/><stop offset="0.905" stop-color="#985400"/><stop offset="0.952" stop-color="#8d4100"/><stop offset="1.000" stop-color="#833200"/></linearGradient><linearGradient id="o49" gradientUnits="userSpaceOnUse" x1="672" y1="0" x2="1024" y2="0"><stop offset="0.000" stop-color="#007839"/><stop offset="0.045" stop-color="#00823c"/><stop offset="0.091" stop-color="#008d3f"/><stop offset="0.136" stop-color="#009741"/><stop offset="0.182" stop-color="#00993f"/><stop offset="0.227" stop-color="#00993c"/><stop offset="0.273" stop-color="#009938"/><stop offset="0.318" stop-color="#009935"/><stop offset="0.364" stop-color="#009931"/><stop offset="0.409" stop-color="#00992d"/><stop offset="0.455" stop-color="#009929"/><stop offset="0.500" stop-color="#009924"/><stop offset="0.545" stop-color="#11991e"/><stop offset="0.591" stop-color="#2d9919"/><stop offset="0.636" stop-color="#4b9912"/><stop offset="0.682" stop-color="#6c990c"/><stop offset="0.727" stop-color="#929904"/><stop offset="0.773" stop-color="#997d00"/><stop offset="0.818" stop-color="#996400"/><stop offset="0.864" stop-color="#995200"/><stop offset="0.909" stop-color="#8e3f00"/><stop offset="0.955" stop-color="#843000"/><stop offset="1.000" stop-color="#792500"/></linearGradient><linearGradient id="o50" gradientUnits="userSpaceOnUse" x1="672" y1="0" x2="1024" y2="0"><stop offset="0.000" stop-color="#00783b"/><stop offset="0.045" stop-color="#00833f"/><stop offset="0.091" stop-color="#008e41"/><stop offset="0.136" stop-color="#009844"/><stop offset="0.182" stop-color="#009941"/><stop offset="0.227" stop-color="#00993e"/><stop offset="0.273" stop-color="#00993b"/><stop offset="0.318" stop-color="#009937"/><stop offset="0.364" stop-color="#009934"/><stop offset="0.409" stop-color="#009930"/><stop offset="0.455" stop-color="#00992b"/><stop offset="0.500" stop-color="#009926"/><stop offset="0.545" stop-color="#139921"/><stop offset="0.591" stop-color="#2f991b"/><stop offset="0.636" stop-color="#4f9915"/><stop offset="0.682" stop-color="#71990e"/><stop offset="0.727" stop-color="#979906"/><stop offset="0.773" stop-color="#997900"/><stop offset="0.818" stop-color="#996100"/><stop offset="0.864" stop-color="#994f00"/><stop offset="0.909" stop-color="#8f3d00"/><stop offset="0.955" stop-color="#842f00"/><stop offset="1.000" stop-color="#7a2400"/></linearGradient><linearGradient id="o51" gradientUnits="userSpaceOnUse" x1="672" y1="0" x2="1024" y2="0"><stop offset="0.000" stop-color="#00793d"/><stop offset="0.045" stop-color="#008441"/><stop offset="0.091" stop-color="#008f44"/><stop offset="0.136" stop-color="#009946"/><stop offset="0.182" stop-color="#009944"/><stop offset="0.227" stop-color="#009941"/><stop offset="0.273" stop-color="#00993d"/><stop offset="0.318" stop-color="#00993a"/><stop offset="0.364" stop-color="#009936"/><stop offset="0.409" stop-color="#009932"/><stop offset="0.455" stop-color="#00992e"/><stop offset="0.500" stop-color="#009929"/><stop offset="0.545" stop-color="#159924"/><stop offset="0.591" stop-color="#32991e"/><stop offset="0.636" stop-color="#529918"/><stop offset="0.682" stop-color="#769911"/><stop offset="0.727" stop-color="#999509"/><stop offset="0.773" stop-color="#997400"/><stop offset="0.818" stop-color="#995d00"/><stop offset="0.864" stop-color="#994c00"/><stop offset="0.909" stop-color="#903b00"/><stop offset="0.955" stop-color="#852d00"/><stop offset="1.000" stop-color="#7a2300"/></linearGradient><linearGradient id="o52" gradientUnits="userSpaceOnUse" x1="672" y1="0" x2="1024" y2="0"><stop offset="0.000" stop-color="#007a40"/><stop offset="0.045" stop-color="#008543"/><stop offset="0.091" stop-color="#009047"/><stop offset="0.136" stop-color="#009949"/><stop offset="0.182" stop-color="#009946"/><stop offset="0.227" stop-color="#009943"/><stop offset="0.273" stop-color="#009940"/><stop offset="0.318" stop-color="#00993d"/><stop offset="0.364" stop-color="#009939"/><stop offset="0.409" stop-color="#009935"/><stop offset="0.455" stop-color="#009931"/><stop offset="0.500" stop-color="#00992c"/><stop offset="0.545" stop-color="#189927"/><stop offset="0.591" stop-color="#359921"/><stop offset="0.636" stop-color="#56991b"/><stop offset="0.682" stop-color="#7b9914"/><stop offset="0.727" stop-color="#998f0b"/><stop offset="0.773" stop-color="#997002"/><stop offset="0.818" stop-color="#995a00"/><stop offset="0.864" stop-color="#994900"/><stop offset="0.909" stop-color="#913900"/><stop offset="0.955" stop-color="#862b00"/><stop offset="1.000" stop-color="#7b2100"/></linearGradient><linearGradient id="o53" gradientUnits="userSpaceOnUse" x1="672" y1="0" x2="1040" y2="0"><stop offset="0.000" stop-color="#007a42"/><stop offset="0.043" stop-color="#008546"/><stop offset="0.087" stop-color="#00904a"/><stop offset="0.130" stop-color="#00994b"/><stop offset="0.174" stop-color="#009949"/><stop offset="0.217" stop-color="#009946"/><stop offset="0.261" stop-color="#009943"/><stop offset="0.304" stop-color="#009940"/><stop offset="0.348" stop-color="#00993c"/><stop offset="0.391" stop-color="#009938"/><stop offset="0.435" stop-color="#009934"/><stop offset="0.478" stop-color="#00992f"/><stop offset="0.522" stop-color="#1a992a"/><stop offset="0.565" stop-color="#389924"/><stop offset="0.609" stop-color="#5a991e"/><stop offset="0.652" stop-color="#809917"/><stop offset="0.696" stop-color="#998a0e"/><stop offset="0.739" stop-color="#996c05"/><stop offset="0.783" stop-color="#995600"/><stop offset="0.826" stop-color="#994600"/><stop offset="0.870" stop-color="#913700"/><stop offset="0.913" stop-color="#862a00"/><stop offset="0.957" stop-color="#7b2000"/><stop offset="1.000" stop-color="#701800"/></linearGradient><linearGradient id="o54" gradientUnits="userSpaceOnUse" x1="672" y1="0" x2="1040" y2="0"><stop offset="0.000" stop-color="#007b44"/><stop offset="0.043" stop-color="#008649"/><stop offset="0.087" stop-color="#00914c"/><stop offset="0.130" stop-color="#00994e"/><stop offset="0.174" stop-color="#00994c"/><stop offset="0.217" stop-color="#009949"/><stop offset="0.261" stop-color="#009946"/><stop offset="0.304" stop-color="#009942"/><stop offset="0.348" stop-color="#00993f"/><stop offset="0.391" stop-color="#00993b"/><stop offset="0.435" stop-color="#009937"/><stop offset="0.478" stop-color="#009932"/><stop offset="0.522" stop-color="#1c992d"/><stop offset="0.565" stop-color="#3c9928"/><stop offset="0.609" stop-color="#5e9921"/><stop offset="0.652" stop-color="#85991a"/><stop offset="0.696" stop-color="#998410"/><stop offset="0.739" stop-color="#996707"/><stop offset="0.783" stop-color="#995300"/><stop offset="0.826" stop-color="#994300"/><stop offset="0.870" stop-color="#923500"/><stop offset="0.913" stop-color="#872800"/><stop offset="0.957" stop-color="#7c1f00"/><stop offset="1.000" stop-color="#711700"/></linearGradient><linearGradient id="o55" gradientUnits="userSpaceOnUse" x1="672" y1="0" x2="1040" y2="0"><stop offset="0.000" stop-color="#007c47"/><stop offset="0.043" stop-color="#00874b"/><stop offset="0.087" stop-color="#00924f"/><stop offset="0.130" stop-color="#009951"/><stop offset="0.174" stop-color="#00994e"/><stop offset="0.217" stop-color="#00994c"/><stop offset="0.261" stop-color="#009949"/><stop offset="0.304" stop-color="#009945"/><stop offset="0.348" stop-color="#009942"/><stop offset="0.391" stop-color="#00993e"/><stop offset="0.435" stop-color="#00993a"/><stop offset="0.478" stop-color="#029935"/><stop offset="0.522" stop-color="#1f9930"/><stop offset="0.565" stop-color="#3f992b"/><stop offset="0.609" stop-color="#639925"/><stop offset="0.652" stop-color="#8b991e"/><stop offset="0.696" stop-color="#997f12"/><stop offset="0.739" stop-color="#996308"/><stop offset="0.783" stop-color="#994f01"/><stop offset="0.826" stop-color="#994000"/><stop offset="0.870" stop-color="#933300"/><stop offset="0.913" stop-color="#882700"/><stop offset="0.957" stop-color="#7d1d00"/><stop offset="1.000" stop-color="#711600"/></linearGradient><linearGradient id="o56" gradientUnits="userSpaceOnUse" x1="672" y1="0" x2="1040" y2="0"><stop offset="0.000" stop-color="#007c49"/><stop offset="0.043" stop-color="#00874e"/><stop offset="0.087" stop-color="#009252"/><stop offset="0.130" stop-color="#009954"/><stop offset="0.174" stop-color="#009951"/><stop offset="0.217" stop-color="#00994f"/><stop offset="0.261" stop-color="#00994c"/><stop offset="0.304" stop-color="#009949"/><stop offset="0.348" stop-color="#009945"/><stop offset="0.391" stop-color="#009941"/><stop offset="0.435" stop-color="#00993d"/><stop offset="0.478" stop-color="#049939"/><stop offset="0.522" stop-color="#229934"/><stop offset="0.565" stop-color="#43992e"/><stop offset="0.609" stop-color="#679928"/><stop offset="0.652" stop-color="#919921"/><stop offset="0.696" stop-color="#997a14"/><stop offset="0.739" stop-color="#995f0a"/><stop offset="0.783" stop-color="#994c03"/><stop offset="0.826" stop-color="#993e00"/><stop offset="0.870" stop-color="#933100"/><stop offset="0.913" stop-color="#882500"/><stop offset="0.957" stop-color="#7d1c00"/><stop offset="1.000" stop-color="#721500"/></linearGradient><linearGradient id="o57" gradientUnits="userSpaceOnUse" x1="672" y1="0" x2="1040" y2="0"><stop offset="0.000" stop-color="#007d4c"/><stop offset="0.043" stop-color="#008851"/><stop offset="0.087" stop-color="#009355"/><stop offset="0.130" stop-color="#009957"/><stop offset="0.174" stop-color="#009954"/><stop offset="0.217" stop-color="#009952"/><stop offset="0.261" stop-color="#00994f"/><stop offset="0.304" stop-color="#00994c"/><stop offset="0.348" stop-color="#009948"/><stop offset="0.391" stop-color="#009945"/><stop offset="0.435" stop-color="#009941"/><stop offset="0.478" stop-color="#06993c"/><stop offset="0.522" stop-color="#249938"/><stop offset="0.565" stop-color="#469932"/><stop offset="0.609" stop-color="#6c992c"/><stop offset="0.652" stop-color="#979925"/><stop offset="0.696" stop-color="#997516"/><stop offset="0.739" stop-color="#995b0c"/><stop offset="0.783" stop-color="#994905"/><stop offset="0.826" stop-color="#993b00"/><stop offset="0.870" stop-color="#942f00"/><stop offset="0.913" stop-color="#892300"/><stop offset="0.957" stop-color="#7e1a00"/><stop offset="1.000" stop-color="#721400"/></linearGradient><linearGradient id="o58" gradientUnits="userSpaceOnUse" x1="672" y1="0" x2="1056" y2="0"><stop offset="0.000" stop-color="#007d4e"/><stop offset="0.042" stop-color="#008854"/><stop offset="0.083" stop-color="#009359"/><stop offset="0.125" stop-color="#00995a"/><stop offset="0.167" stop-color="#009957"/><stop offset="0.208" stop-color="#009955"/><stop offset="0.250" stop-color="#009952"/><stop offset="0.292" stop-color="#00994f"/><stop offset="0.333" stop-color="#00994c"/><stop offset="0.375" stop-color="#009948"/><stop offset="0.417" stop-color="#009944"/><stop offset="0.458" stop-color="#089940"/><stop offset="0.500" stop-color="#27993b"/><stop offset="0.542" stop-color="#4a9936"/><stop offset="0.583" stop-color="#729930"/><stop offset="0.625" stop-color="#999428"/><stop offset="0.667" stop-color="#997019"/><stop offset="0.708" stop-color="#99580e"/><stop offset="0.750" stop-color="#994607"/><stop offset="0.792" stop-color="#993801"/><stop offset="0.833" stop-color="#942d00"/><stop offset="0.875" stop-color="#892200"/><stop offset="0.917" stop-color="#7e1900"/><stop offset="0.958" stop-color="#731200"/><stop offset="1.000" stop-color="#680d00"/></linearGradient><linearGradient id="o59" gradientUnits="userSpaceOnUse" x1="672" y1="0" x2="1056" y2="0"><stop offset="0.000" stop-color="#007d51"/><stop offset="0.042" stop-color="#008957"/><stop offset="0.083" stop-color="#00945c"/><stop offset="0.125" stop-color="#00995d"/><stop offset="0.167" stop-color="#00995b"/><stop offset="0.208" stop-color="#009958"/><stop offset="0.250" stop-color="#009956"/><stop offset="0.292" stop-color="#009953"/><stop offset="0.333" stop-color="#00994f"/><stop offset="0.375" stop-color="#00994c"/><stop offset="0.417" stop-color="#009948"/><stop offset="0.458" stop-color="#0a9944"/><stop offset="0.500" stop-color="#2a993f"/><stop offset="0.542" stop-color="#4e993a"/><stop offset="0.583" stop-color="#779934"/><stop offset="0.625" stop-color="#998e2a"/><stop offset="0.667" stop-color="#996b1b"/><stop offset="0.708" stop-color="#995410"/><stop offset="0.750" stop-color="#994308"/><stop offset="0.792" stop-color="#993602"/><stop offset="0.833" stop-color="#952b00"/><stop offset="0.875" stop-color="#8a2000"/><stop offset="0.917" stop-color="#7f1800"/><stop offset="0.958" stop-color="#731100"/><stop offset="1.000" stop-color="#680c00"/></linearGradient><linearGradient id="o60" gradientUnits="userSpaceOnUse" x1="672" y1="0" x2="1056" y2="0"><stop offset="0.000" stop-color="#007e54"/><stop offset="0.042" stop-color="#00895a"/><stop offset="0.083" stop-color="#00945f"/><stop offset="0.125" stop-color="#009960"/><stop offset="0.167" stop-color="#00995e"/><stop offset="0.208" stop-color="#00995c"/><stop offset="0.250" stop-color="#009959"/><stop offset="0.292" stop-color="#009956"/><stop offset="0.333" stop-color="#009953"/><stop offset="0.375" stop-color="#009950"/><stop offset="0.417" stop-color="#00994c"/><stop offset="0.458" stop-color="#0c9948"/><stop offset="0.500" stop-color="#2d9943"/><stop offset="0.542" stop-color="#53993e"/><stop offset="0.583" stop-color="#7d9939"/><stop offset="0.625" stop-color="#99882c"/><stop offset="0.667" stop-color="#99671c"/><stop offset="0.708" stop-color="#995012"/><stop offset="0.750" stop-color="#99400a"/><stop offset="0.792" stop-color="#993304"/><stop offset="0.833" stop-color="#952800"/><stop offset="0.875" stop-color="#8a1e00"/><stop offset="0.917" stop-color="#7f1600"/><stop offset="0.958" stop-color="#741000"/><stop offset="1.000" stop-color="#680b00"/></linearGradient><linearGradient id="o61" gradientUnits="userSpaceOnUse" x1="672" y1="0" x2="1056" y2="0"><stop offset="0.000" stop-color="#007e56"/><stop offset="0.042" stop-color="#00895d"/><stop offset="0.083" stop-color="#009563"/><stop offset="0.125" stop-color="#009963"/><stop offset="0.167" stop-color="#009961"/><stop offset="0.208" stop-color="#00995f"/><stop offset="0.250" stop-color="#00995d"/><stop offset="0.292" stop-color="#00995a"/><stop offset="0.333" stop-color="#009957"/><stop offset="0.375" stop-color="#009954"/><stop offset="0.417" stop-color="#009950"/><stop offset="0.458" stop-color="#0f994c"/><stop offset="0.500" stop-color="#319948"/><stop offset="0.542" stop-color="#579943"/><stop offset="0.583" stop-color="#83993d"/><stop offset="0.625" stop-color="#99822e"/><stop offset="0.667" stop-color="#99621e"/><stop offset="0.708" stop-color="#994d13"/><stop offset="0.750" stop-color="#993d0b"/><stop offset="0.792" stop-color="#993105"/><stop offset="0.833" stop-color="#962600"/><stop offset="0.875" stop-color="#8b1d00"/><stop offset="0.917" stop-color="#7f1500"/><stop offset="0.958" stop-color="#740f00"/><stop offset="1.000" stop-color="#690a00"/></linearGradient><linearGradient id="o62" gradientUnits="userSpaceOnUse" x1="672" y1="0" x2="1072" y2="0"><stop offset="0.000" stop-color="#007e59"/><stop offset="0.040" stop-color="#008a60"/><stop offset="0.080" stop-color="#009566"/><stop offset="0.120" stop-color="#009967"/><stop offset="0.160" stop-color="#009965"/><stop offset="0.200" stop-color="#009963"/><stop offset="0.240" stop-color="#009960"/><stop offset="0.280" stop-color="#00995e"/><stop offset="0.320" stop-color="#00995b"/><stop offset="0.360" stop-color="#009958"/><stop offset="0.400" stop-color="#009955"/><stop offset="0.440" stop-color="#119951"/><stop offset="0.480" stop-color="#34994c"/><stop offset="0.520" stop-color="#5c9948"/><stop offset="0.560" stop-color="#899942"/><stop offset="0.600" stop-color="#997c30"/><stop offset="0.640" stop-color="#995e20"/><stop offset="0.680" stop-color="#994915"/><stop offset="0.720" stop-color="#993a0d"/><stop offset="0.760" stop-color="#992e06"/><stop offset="0.800" stop-color="#962401"/><stop offset="0.840" stop-color="#8b1b00"/><stop offset="0.880" stop-color="#801400"/><stop offset="0.920" stop-color="#740e00"/><stop offset="0.960" stop-color="#690a00"/><stop offset="1.000" stop-color="#5d0600"/></linearGradient><linearGradient id="o63" gradientUnits="userSpaceOnUse" x1="672" y1="0" x2="1072" y2="0"><stop offset="0.000" stop-color="#007f5c"/><stop offset="0.040" stop-color="#008a63"/><stop offset="0.080" stop-color="#00966a"/><stop offset="0.120" stop-color="#00996b"/><stop offset="0.160" stop-color="#009969"/><stop offset="0.200" stop-color="#009967"/><stop offset="0.240" stop-color="#009964"/><stop offset="0.280" stop-color="#009962"/><stop offset="0.320" stop-color="#00995f"/><stop offset="0.360" stop-color="#00995c"/><stop offset="0.400" stop-color="#009959"/><stop offset="0.440" stop-color="#149955"/><stop offset="0.480" stop-color="#389951"/><stop offset="0.520" stop-color="#61994d"/><stop offset="0.560" stop-color="#909947"/><stop offset="0.600" stop-color="#997632"/><stop offset="0.640" stop-color="#995a22"/><stop offset="0.680" stop-color="#994617"/><stop offset="0.720" stop-color="#99370e"/><stop offset="0.760" stop-color="#992c08"/><stop offset="0.800" stop-color="#972203"/><stop offset="0.840" stop-color="#8b1900"/><stop offset="0.880" stop-color="#801200"/><stop offset="0.920" stop-color="#740d00"/><stop offset="0.960" stop-color="#690900"/><stop offset="1.000" stop-color="#5e0500"/></linearGradient><linearGradient id="o64" gradientUnits="userSpaceOnUse" x1="688" y1="0" x2="1072" y2="0"><stop offset="0.000" stop-color="#008a67"/><stop offset="0.042" stop-color="#00966d"/><stop offset="0.083" stop-color="#00996e"/><stop offset="0.125" stop-color="#00996c"/><stop offset="0.167" stop-color="#00996b"/><stop offset="0.208" stop-color="#009968"/><stop offset="0.250" stop-color="#009966"/><stop offset="0.292" stop-color="#009964"/><stop offset="0.333" stop-color="#009961"/><stop offset="0.375" stop-color="#00995e"/><stop offset="0.417" stop-color="#16995a"/><stop offset="0.458" stop-color="#3c9956"/><stop offset="0.500" stop-color="#679952"/><stop offset="0.542" stop-color="#97994d"/><stop offset="0.583" stop-color="#997134"/><stop offset="0.625" stop-color="#995524"/><stop offset="0.667" stop-color="#994218"/><stop offset="0.708" stop-color="#993410"/><stop offset="0.750" stop-color="#992a09"/><stop offset="0.792" stop-color="#972004"/><stop offset="0.833" stop-color="#8c1800"/><stop offset="0.875" stop-color="#801100"/><stop offset="0.917" stop-color="#750c00"/><stop offset="0.958" stop-color="#690800"/><stop offset="1.000" stop-color="#5e0500"/></linearGradient><linearGradient id="o65" gradientUnits="userSpaceOnUse" x1="688" y1="0" x2="1072" y2="0"><stop offset="0.000" stop-color="#008b6a"/><stop offset="0.042" stop-color="#009671"/><stop offset="0.083" stop-color="#009972"/><stop offset="0.125" stop-color="#009970"/><stop offset="0.167" stop-color="#00996f"/><stop offset="0.208" stop-color="#00996d"/><stop offset="0.250" stop-color="#00996b"/><stop offset="0.292" stop-color="#009968"/><stop offset="0.333" stop-color="#009966"/><stop offset="0.375" stop-color="#009963"/><stop offset="0.417" stop-color="#199960"/><stop offset="0.458" stop-color="#40995c"/><stop offset="0.500" stop-color="#6c9958"/><stop offset="0.542" stop-color="#999350"/><stop offset="0.583" stop-color="#996b36"/><stop offset="0.625" stop-color="#995126"/><stop offset="0.667" stop-color="#993f1a"/><stop offset="0.708" stop-color="#993211"/><stop offset="0.750" stop-color="#99270b"/><stop offset="0.792" stop-color="#971f05"/><stop offset="0.833" stop-color="#8c1601"/><stop offset="0.875" stop-color="#801000"/><stop offset="0.917" stop-color="#750b00"/><stop offset="0.958" stop-color="#690700"/><stop offset="1.000" stop-color="#5e0400"/></linearGradient><linearGradient id="o66" gradientUnits="userSpaceOnUse" x1="688" y1="0" x2="1088" y2="0"><stop offset="0.000" stop-color="#008b6d"/><stop offset="0.040" stop-color="#009675"/><stop offset="0.080" stop-color="#009976"/><stop offset="0.120" stop-color="#009975"/><stop offset="0.160" stop-color="#009973"/><stop offset="0.200" stop-color="#009971"/><stop offset="0.240" stop-color="#00996f"/><stop offset="0.280" stop-color="#00996d"/><stop offset="0.320" stop-color="#00996b"/><stop offset="0.360" stop-color="#009968"/><stop offset="0.400" stop-color="#1c9965"/><stop offset="0.440" stop-color="#449962"/><stop offset="0.480" stop-color="#72995e"/><stop offset="0.520" stop-color="#998c52"/><stop offset="0.560" stop-color="#996638"/><stop offset="0.600" stop-color="#994d27"/><stop offset="0.640" stop-color="#993c1b"/><stop offset="0.680" stop-color="#992f13"/><stop offset="0.720" stop-color="#99250c"/><stop offset="0.760" stop-color="#971d06"/><stop offset="0.800" stop-color="#8c1402"/><stop offset="0.840" stop-color="#800e00"/><stop offset="0.880" stop-color="#750900"/><stop offset="0.920" stop-color="#6a0600"/><stop offset="0.960" stop-color="#5e0300"/><stop offset="1.000" stop-color="#530100"/></linearGradient><linearGradient id="o67" gradientUnits="userSpaceOnUse" x1="688" y1="0" x2="1088" y2="0"><stop offset="0.000" stop-color="#008b71"/><stop offset="0.040" stop-color="#009679"/><stop offset="0.080" stop-color="#00997a"/><stop offset="0.120" stop-color="#009979"/><stop offset="0.160" stop-color="#009977"/><stop offset="0.200" stop-color="#009976"/><stop offset="0.240" stop-color="#009974"/><stop offset="0.280" stop-color="#009972"/><stop offset="0.320" stop-color="#009970"/><stop offset="0.360" stop-color="#00996e"/><stop offset="0.400" stop-color="#20996b"/><stop offset="0.440" stop-color="#499968"/><stop offset="0.480" stop-color="#799964"/><stop offset="0.520" stop-color="#998553"/><stop offset="0.560" stop-color="#99613a"/><stop offset="0.600" stop-color="#994929"/><stop offset="0.640" stop-color="#99391d"/><stop offset="0.680" stop-color="#992c14"/><stop offset="0.720" stop-color="#99230d"/><stop offset="0.760" stop-color="#981b08"/><stop offset="0.800" stop-color="#8c1303"/><stop offset="0.840" stop-color="#810d00"/><stop offset="0.880" stop-color="#750800"/><stop offset="0.920" stop-color="#6a0500"/><stop offset="0.960" stop-color="#5e0200"/><stop offset="1.000" stop-color="#530100"/></linearGradient><linearGradient id="o68" gradientUnits="userSpaceOnUse" x1="688" y1="0" x2="1088" y2="0"><stop offset="0.000" stop-color="#008b75"/><stop offset="0.040" stop-color="#00977d"/><stop offset="0.080" stop-color="#00997e"/><stop offset="0.120" stop-color="#00997d"/><stop offset="0.160" stop-color="#00997c"/><stop offset="0.200" stop-color="#00997b"/><stop offset="0.240" stop-color="#009979"/><stop offset="0.280" stop-color="#009977"/><stop offset="0.320" stop-color="#009976"/><stop offset="0.360" stop-color="#009973"/><stop offset="0.400" stop-color="#239971"/><stop offset="0.440" stop-color="#4e996e"/><stop offset="0.480" stop-color="#80996b"/><stop offset="0.520" stop-color="#997e55"/><stop offset="0.560" stop-color="#995c3b"/><stop offset="0.600" stop-color="#99462b"/><stop offset="0.640" stop-color="#99361e"/><stop offset="0.680" stop-color="#992a15"/><stop offset="0.720" stop-color="#99200e"/><stop offset="0.760" stop-color="#981909"/><stop offset="0.800" stop-color="#8c1104"/><stop offset="0.840" stop-color="#810c00"/><stop offset="0.880" stop-color="#750700"/><stop offset="0.920" stop-color="#6a0400"/><stop offset="0.960" stop-color="#5e0200"/><stop offset="1.000" stop-color="#530000"/></linearGradient><linearGradient id="o69" gradientUnits="userSpaceOnUse" x1="688" y1="0" x2="1088" y2="0"><stop offset="0.000" stop-color="#008b79"/><stop offset="0.040" stop-color="#009782"/><stop offset="0.080" stop-color="#009983"/><stop offset="0.120" stop-color="#009982"/><stop offset="0.160" stop-color="#009981"/><stop offset="0.200" stop-color="#009980"/><stop offset="0.240" stop-color="#00997e"/><stop offset="0.280" stop-color="#00997d"/><stop offset="0.320" stop-color="#00997b"/><stop offset="0.360" stop-color="#009979"/><stop offset="0.400" stop-color="#279977"/><stop offset="0.440" stop-color="#539975"/><stop offset="0.480" stop-color="#879972"/><stop offset="0.520" stop-color="#997757"/><stop offset="0.560" stop-color="#99573d"/><stop offset="0.600" stop-color="#99422c"/><stop offset="0.640" stop-color="#993220"/><stop offset="0.680" stop-color="#992717"/><stop offset="0.720" stop-color="#991e10"/><stop offset="0.760" stop-color="#98170a"/><stop offset="0.800" stop-color="#8c1005"/><stop offset="0.840" stop-color="#810a01"/><stop offset="0.880" stop-color="#750600"/><stop offset="0.920" stop-color="#6a0300"/><stop offset="0.960" stop-color="#5e0100"/><stop offset="1.000" stop-color="#530000"/></linearGradient><linearGradient id="o70" gradientUnits="userSpaceOnUse" x1="688" y1="0" x2="1104" y2="0"><stop offset="0.000" stop-color="#008b7c"/><stop offset="0.038" stop-color="#009786"/><stop offset="0.077" stop-color="#009987"/><stop offset="0.115" stop-color="#009987"/><stop offset="0.154" stop-color="#009986"/><stop offset="0.192" stop-color="#009985"/><stop offset="0.231" stop-color="#009984"/><stop offset="0.269" stop-color="#009983"/><stop offset="0.308" stop-color="#009981"/><stop offset="0.346" stop-color="#029980"/><stop offset="0.385" stop-color="#2a997e"/><stop offset="0.423" stop-color="#59997c"/><stop offset="0.462" stop-color="#8f997a"/><stop offset="0.500" stop-color="#997158"/><stop offset="0.538" stop-color="#99533f"/><stop offset="0.577" stop-color="#993e2e"/><stop offset="0.615" stop-color="#992f21"/><stop offset="0.654" stop-color="#992418"/><stop offset="0.692" stop-color="#991c11"/><stop offset="0.731" stop-color="#98150b"/><stop offset="0.769" stop-color="#8c0e06"/><stop offset="0.808" stop-color="#810902"/><stop offset="0.846" stop-color="#750500"/><stop offset="0.885" stop-color="#6a0200"/><stop offset="0.923" stop-color="#5e0000"/><stop offset="0.962" stop-color="#530000"/><stop offset="1.000" stop-color="#470000"/></linearGradient><linearGradient id="o71" gradientUnits="userSpaceOnUse" x1="688" y1="0" x2="1104" y2="0"><stop offset="0.000" stop-color="#008b80"/><stop offset="0.038" stop-color="#00978b"/><stop offset="0.077" stop-color="#00998c"/><stop offset="0.115" stop-color="#00998c"/><stop offset="0.154" stop-color="#00998b"/><stop offset="0.192" stop-color="#00998a"/><stop offset="0.231" stop-color="#00998a"/><stop offset="0.269" stop-color="#009989"/><stop offset="0.308" stop-color="#009988"/><stop offset="0.346" stop-color="#059987"/><stop offset="0.385" stop-color="#2f9986"/><stop offset="0.423" stop-color="#5f9984"/><stop offset="0.462" stop-color="#989983"/><stop offset="0.500" stop-color="#996b5a"/><stop offset="0.538" stop-color="#994e40"/><stop offset="0.577" stop-color="#993b2f"/><stop offset="0.615" stop-color="#992d23"/><stop offset="0.654" stop-color="#992219"/><stop offset="0.692" stop-color="#991a12"/><stop offset="0.731" stop-color="#98130c"/><stop offset="0.769" stop-color="#8c0d07"/><stop offset="0.808" stop-color="#810803"/><stop offset="0.846" stop-color="#750400"/><stop offset="0.885" stop-color="#6a0100"/><stop offset="0.923" stop-color="#5e0000"/><stop offset="0.962" stop-color="#530000"/><stop offset="1.000" stop-color="#470000"/></linearGradient><linearGradient id="o72" gradientUnits="userSpaceOnUse" x1="688" y1="0" x2="1104" y2="0"><stop offset="0.000" stop-color="#008b85"/><stop offset="0.038" stop-color="#00978f"/><stop offset="0.077" stop-color="#009991"/><stop offset="0.115" stop-color="#009991"/><stop offset="0.154" stop-color="#009991"/><stop offset="0.192" stop-color="#009990"/><stop offset="0.231" stop-color="#009990"/><stop offset="0.269" stop-color="#00998f"/><stop offset="0.308" stop-color="#00998f"/><stop offset="0.346" stop-color="#08998e"/><stop offset="0.385" stop-color="#33998d"/><stop offset="0.423" stop-color="#65998d"/><stop offset="0.462" stop-color="#999285"/><stop offset="0.500" stop-color="#99655b"/><stop offset="0.538" stop-color="#994a42"/><stop offset="0.577" stop-color="#993731"/><stop offset="0.615" stop-color="#992a24"/><stop offset="0.654" stop-color="#99201b"/><stop offset="0.692" stop-color="#991813"/><stop offset="0.731" stop-color="#98110d"/><stop offset="0.769" stop-color="#8c0b08"/><stop offset="0.808" stop-color="#810604"/><stop offset="0.846" stop-color="#750301"/><stop offset="0.885" stop-color="#6a0000"/><stop offset="0.923" stop-color="#5e0000"/><stop offset="0.962" stop-color="#530000"/><stop offset="1.000" stop-color="#470000"/></linearGradient><linearGradient id="o73" gradientUnits="userSpaceOnUse" x1="688" y1="0" x2="1104" y2="0"><stop offset="0.000" stop-color="#008b89"/><stop offset="0.038" stop-color="#009694"/><stop offset="0.077" stop-color="#009996"/><stop offset="0.115" stop-color="#009996"/><stop offset="0.154" stop-color="#009996"/><stop offset="0.192" stop-color="#009996"/><stop offset="0.231" stop-color="#009996"/><stop offset="0.269" stop-color="#009996"/><stop offset="0.308" stop-color="#009996"/><stop offset="0.346" stop-color="#0a9996"/><stop offset="0.385" stop-color="#389996"/><stop offset="0.423" stop-color="#6c9996"/><stop offset="0.462" stop-color="#998986"/><stop offset="0.500" stop-color="#995f5d"/><stop offset="0.538" stop-color="#994543"/><stop offset="0.577" stop-color="#993432"/><stop offset="0.615" stop-color="#992726"/><stop offset="0.654" stop-color="#991d1c"/><stop offset="0.692" stop-color="#991515"/><stop offset="0.731" stop-color="#980f0e"/><stop offset="0.769" stop-color="#8c0909"/><stop offset="0.808" stop-color="#810505"/><stop offset="0.846" stop-color="#750202"/><stop offset="0.885" stop-color="#6a0000"/><stop offset="0.923" stop-color="#5e0000"/><stop offset="0.962" stop-color="#530000"/><stop offset="1.000" stop-color="#470000"/></linearGradient><linearGradient id="o74" gradientUnits="userSpaceOnUse" x1="688" y1="0" x2="1120" y2="0"><stop offset="0.000" stop-color="#00898b"/><stop offset="0.037" stop-color="#009496"/><stop offset="0.074" stop-color="#009699"/><stop offset="0.111" stop-color="#009699"/><stop offset="0.148" stop-color="#009699"/><stop offset="0.185" stop-color="#009599"/><stop offset="0.222" stop-color="#009599"/><stop offset="0.259" stop-color="#009599"/><stop offset="0.296" stop-color="#009599"/><stop offset="0.333" stop-color="#0d9499"/><stop offset="0.370" stop-color="#3a9499"/><stop offset="0.407" stop-color="#6f9399"/><stop offset="0.444" stop-color="#998187"/><stop offset="0.481" stop-color="#995a5e"/><stop offset="0.519" stop-color="#994145"/><stop offset="0.556" stop-color="#993033"/><stop offset="0.593" stop-color="#992427"/><stop offset="0.630" stop-color="#991b1d"/><stop offset="0.667" stop-color="#991316"/><stop offset="0.704" stop-color="#970d10"/><stop offset="0.741" stop-color="#8c080a"/><stop offset="0.778" stop-color="#810405"/><stop offset="0.815" stop-color="#750102"/><stop offset="0.852" stop-color="#6a0000"/><stop offset="0.889" stop-color="#5e0000"/><stop offset="0.926" stop-color="#530000"/><stop offset="0.963" stop-color="#470000"/><stop offset="1.000" stop-color="#3c0000"/></linearGradient><linearGradient id="o75" gradientUnits="userSpaceOnUse" x1="688" y1="0" x2="1120" y2="0"><stop offset="0.000" stop-color="#00848b"/><stop offset="0.037" stop-color="#008f96"/><stop offset="0.074" stop-color="#009199"/><stop offset="0.111" stop-color="#009099"/><stop offset="0.148" stop-color="#009099"/><stop offset="0.185" stop-color="#008f99"/><stop offset="0.222" stop-color="#008f99"/><stop offset="0.259" stop-color="#008e99"/><stop offset="0.296" stop-color="#008d99"/><stop offset="0.333" stop-color="#108c99"/><stop offset="0.370" stop-color="#3c8b99"/><stop offset="0.407" stop-color="#6f8a99"/><stop offset="0.444" stop-color="#997988"/><stop offset="0.481" stop-color="#995460"/><stop offset="0.519" stop-color="#993d46"/><stop offset="0.556" stop-color="#992d35"/><stop offset="0.593" stop-color="#992128"/><stop offset="0.630" stop-color="#99181f"/><stop offset="0.667" stop-color="#991117"/><stop offset="0.704" stop-color="#970c11"/><stop offset="0.741" stop-color="#8c060b"/><stop offset="0.778" stop-color="#800306"/><stop offset="0.815" stop-color="#750003"/><stop offset="0.852" stop-color="#690000"/><stop offset="0.889" stop-color="#5e0000"/><stop offset="0.926" stop-color="#530000"/><stop offset="0.963" stop-color="#470000"/><stop offset="1.000" stop-color="#3c0000"/></linearGradient><linearGradient id="o76" gradientUnits="userSpaceOnUse" x1="688" y1="0" x2="1120" y2="0"><stop offset="0.000" stop-color="#00808a"/><stop offset="0.037" stop-color="#008a96"/><stop offset="0.074" stop-color="#008c99"/><stop offset="0.111" stop-color="#008b99"/><stop offset="0.148" stop-color="#008a99"/><stop offset="0.185" stop-color="#008999"/><stop offset="0.222" stop-color="#008999"/><stop offset="0.259" stop-color="#008799"/><stop offset="0.296" stop-color="#008699"/><stop offset="0.333" stop-color="#128599"/><stop offset="0.370" stop-color="#3d8399"/><stop offset="0.407" stop-color="#708199"/><stop offset="0.444" stop-color="#997289"/><stop offset="0.481" stop-color="#994f61"/><stop offset="0.519" stop-color="#993948"/><stop offset="0.556" stop-color="#992a36"/><stop offset="0.593" stop-color="#991f29"/><stop offset="0.630" stop-color="#991620"/><stop offset="0.667" stop-color="#990f18"/><stop offset="0.704" stop-color="#970a12"/><stop offset="0.741" stop-color="#8c050c"/><stop offset="0.778" stop-color="#800107"/><stop offset="0.815" stop-color="#750004"/><stop offset="0.852" stop-color="#690001"/><stop offset="0.889" stop-color="#5e0000"/><stop offset="0.926" stop-color="#520000"/><stop offset="0.963" stop-color="#470000"/><stop offset="1.000" stop-color="#3b0000"/></linearGradient><linearGradient id="o77" gradientUnits="userSpaceOnUse" x1="688" y1="0" x2="1120" y2="0"><stop offset="0.000" stop-color="#007b8a"/><stop offset="0.037" stop-color="#008596"/><stop offset="0.074" stop-color="#008799"/><stop offset="0.111" stop-color="#008699"/><stop offset="0.148" stop-color="#008599"/><stop offset="0.185" stop-color="#008499"/><stop offset="0.222" stop-color="#008299"/><stop offset="0.259" stop-color="#008199"/><stop offset="0.296" stop-color="#007f99"/><stop offset="0.333" stop-color="#147e99"/><stop offset="0.370" stop-color="#3f7c99"/><stop offset="0.407" stop-color="#707999"/><stop offset="0.444" stop-color="#996b8a"/><stop offset="0.481" stop-color="#994a62"/><stop offset="0.519" stop-color="#993549"/><stop offset="0.556" stop-color="#992738"/><stop offset="0.593" stop-color="#991c2b"/><stop offset="0.630" stop-color="#991421"/><stop offset="0.667" stop-color="#990d19"/><stop offset="0.704" stop-color="#970813"/><stop offset="0.741" stop-color="#8b040c"/><stop offset="0.778" stop-color="#800008"/><stop offset="0.815" stop-color="#750004"/><stop offset="0.852" stop-color="#690002"/><stop offset="0.889" stop-color="#5e0000"/><stop offset="0.926" stop-color="#520000"/><stop offset="0.963" stop-color="#470000"/><stop offset="1.000" stop-color="#3b0000"/></linearGradient><linearGradient id="o78" gradientUnits="userSpaceOnUse" x1="688" y1="0" x2="1120" y2="0"><stop offset="0.000" stop-color="#00778a"/><stop offset="0.037" stop-color="#008095"/><stop offset="0.074" stop-color="#008299"/><stop offset="0.111" stop-color="#008199"/><stop offset="0.148" stop-color="#008099"/><stop offset="0.185" stop-color="#007e99"/><stop offset="0.222" stop-color="#007d99"/><stop offset="0.259" stop-color="#007b99"/><stop offset="0.296" stop-color="#007999"/><stop offset="0.333" stop-color="#167799"/><stop offset="0.370" stop-color="#407499"/><stop offset="0.407" stop-color="#707199"/><stop offset="0.444" stop-color="#99648b"/><stop offset="0.481" stop-color="#994564"/><stop offset="0.519" stop-color="#99314a"/><stop offset="0.556" stop-color="#992339"/><stop offset="0.593" stop-color="#99192c"/><stop offset="0.630" stop-color="#991222"/><stop offset="0.667" stop-color="#990b1a"/><stop offset="0.704" stop-color="#960614"/><stop offset="0.741" stop-color="#8b020d"/><stop offset="0.778" stop-color="#800009"/><stop offset="0.815" stop-color="#740005"/><stop offset="0.852" stop-color="#690002"/><stop offset="0.889" stop-color="#5d0000"/><stop offset="0.926" stop-color="#520000"/><stop offset="0.963" stop-color="#470000"/><stop offset="1.000" stop-color="#3b0000"/></linearGradient><linearGradient id="o79" gradientUnits="userSpaceOnUse" x1="688" y1="0" x2="1136" y2="0"><stop offset="0.000" stop-color="#00738a"/><stop offset="0.036" stop-color="#007b95"/><stop offset="0.071" stop-color="#007d99"/><stop offset="0.107" stop-color="#007c99"/><stop offset="0.143" stop-color="#007a99"/><stop offset="0.179" stop-color="#007999"/><stop offset="0.214" stop-color="#007799"/><stop offset="0.250" stop-color="#007599"/><stop offset="0.286" stop-color="#007399"/><stop offset="0.321" stop-color="#187099"/><stop offset="0.357" stop-color="#416d99"/><stop offset="0.393" stop-color="#716a99"/><stop offset="0.429" stop-color="#995d8c"/><stop offset="0.464" stop-color="#994065"/><stop offset="0.500" stop-color="#992d4c"/><stop offset="0.536" stop-color="#99203a"/><stop offset="0.571" stop-color="#99172d"/><stop offset="0.607" stop-color="#990f23"/><stop offset="0.643" stop-color="#990a1b"/><stop offset="0.679" stop-color="#960515"/><stop offset="0.714" stop-color="#8b010e"/><stop offset="0.750" stop-color="#7f0009"/><stop offset="0.786" stop-color="#740006"/><stop offset="0.821" stop-color="#690003"/><stop offset="0.857" stop-color="#5d0001"/><stop offset="0.893" stop-color="#520000"/><stop offset="0.929" stop-color="#460000"/><stop offset="0.964" stop-color="#3b0000"/><stop offset="1.000" stop-color="#2f0000"/></linearGradient><linearGradient id="o80" gradientUnits="userSpaceOnUse" x1="688" y1="0" x2="1136" y2="0"><stop offset="0.000" stop-color="#006f89"/><stop offset="0.036" stop-color="#007795"/><stop offset="0.071" stop-color="#007999"/><stop offset="0.107" stop-color="#007799"/><stop offset="0.143" stop-color="#007699"/><stop offset="0.179" stop-color="#007499"/><stop offset="0.214" stop-color="#007299"/><stop offset="0.250" stop-color="#006f99"/><stop offset="0.286" stop-color="#006d99"/><stop offset="0.321" stop-color="#1a6a99"/><stop offset="0.357" stop-color="#436699"/><stop offset="0.393" stop-color="#716399"/><stop offset="0.429" stop-color="#99578c"/><stop offset="0.464" stop-color="#993b66"/><stop offset="0.500" stop-color="#992a4d"/><stop offset="0.536" stop-color="#991d3b"/><stop offset="0.571" stop-color="#99142e"/><stop offset="0.607" stop-color="#990d24"/><stop offset="0.643" stop-color="#99081c"/><stop offset="0.679" stop-color="#960315"/><stop offset="0.714" stop-color="#8a000f"/><stop offset="0.750" stop-color="#7f000a"/><stop offset="0.786" stop-color="#740006"/><stop offset="0.821" stop-color="#680003"/><stop offset="0.857" stop-color="#5d0001"/><stop offset="0.893" stop-color="#520000"/><stop offset="0.929" stop-color="#460000"/><stop offset="0.964" stop-color="#3b0000"/><stop offset="1.000" stop-color="#2f0000"/></linearGradient><linearGradient id="o81" gradientUnits="userSpaceOnUse" x1="688" y1="0" x2="1136" y2="0"><stop offset="0.000" stop-color="#006b89"/><stop offset="0.036" stop-color="#007294"/><stop offset="0.071" stop-color="#007499"/><stop offset="0.107" stop-color="#007399"/><stop offset="0.143" stop-color="#007199"/><stop offset="0.179" stop-color="#006f99"/><stop offset="0.214" stop-color="#006c99"/><stop offset="0.250" stop-color="#006a99"/><stop offset="0.286" stop-color="#006799"/><stop offset="0.321" stop-color="#1c6499"/><stop offset="0.357" stop-color="#446099"/><stop offset="0.393" stop-color="#715c99"/><stop offset="0.429" stop-color="#99508d"/><stop offset="0.464" stop-color="#993767"/><stop offset="0.500" stop-color="#99264e"/><stop offset="0.536" stop-color="#991b3d"/><stop offset="0.571" stop-color="#991230"/><stop offset="0.607" stop-color="#990b26"/><stop offset="0.643" stop-color="#99061d"/><stop offset="0.679" stop-color="#950116"/><stop offset="0.714" stop-color="#8a0010"/><stop offset="0.750" stop-color="#7f000b"/><stop offset="0.786" stop-color="#730007"/><stop offset="0.821" stop-color="#680004"/><stop offset="0.857" stop-color="#5d0002"/><stop offset="0.893" stop-color="#510000"/><stop offset="0.929" stop-color="#460000"/><stop offset="0.964" stop-color="#3a0000"/><stop offset="1.000" stop-color="#2f0000"/></linearGradient><linearGradient id="o82" gradientUnits="userSpaceOnUse" x1="688" y1="0" x2="1136" y2="0"><stop offset="0.000" stop-color="#006788"/><stop offset="0.036" stop-color="#006e94"/><stop offset="0.071" stop-color="#007099"/><stop offset="0.107" stop-color="#006e99"/><stop offset="0.143" stop-color="#006c99"/><stop offset="0.179" stop-color="#006a99"/><stop offset="0.214" stop-color="#006799"/><stop offset="0.250" stop-color="#006499"/><stop offset="0.286" stop-color="#006199"/><stop offset="0.321" stop-color="#1e5e99"/><stop offset="0.357" stop-color="#455a99"/><stop offset="0.393" stop-color="#725599"/><stop offset="0.429" stop-color="#994a8e"/><stop offset="0.464" stop-color="#993268"/><stop offset="0.500" stop-color="#99234f"/><stop offset="0.536" stop-color="#99183e"/><stop offset="0.571" stop-color="#990f31"/><stop offset="0.607" stop-color="#990927"/><stop offset="0.643" stop-color="#99041f"/><stop offset="0.679" stop-color="#950017"/><stop offset="0.714" stop-color="#8a0011"/><stop offset="0.750" stop-color="#7e000b"/><stop offset="0.786" stop-color="#730007"/><stop offset="0.821" stop-color="#680004"/><stop offset="0.857" stop-color="#5c0002"/><stop offset="0.893" stop-color="#510000"/><stop offset="0.929" stop-color="#460000"/><stop offset="0.964" stop-color="#3a0000"/><stop offset="1.000" stop-color="#2f0000"/></linearGradient><linearGradient id="o83" gradientUnits="userSpaceOnUse" x1="688" y1="0" x2="1136" y2="0"><stop offset="0.000" stop-color="#006388"/><stop offset="0.036" stop-color="#006993"/><stop offset="0.071" stop-color="#006c99"/><stop offset="0.107" stop-color="#006a99"/><stop offset="0.143" stop-color="#006799"/><stop offset="0.179" stop-color="#006599"/><stop offset="0.214" stop-color="#006299"/><stop offset="0.250" stop-color="#005f99"/><stop offset="0.286" stop-color="#005c99"/><stop offset="0.321" stop-color="#1f5899"/><stop offset="0.357" stop-color="#465499"/><stop offset="0.393" stop-color="#724f99"/><stop offset="0.429" stop-color="#99458f"/><stop offset="0.464" stop-color="#992e69"/><stop offset="0.500" stop-color="#991f51"/><stop offset="0.536" stop-color="#99153f"/><stop offset="0.571" stop-color="#990d32"/><stop offset="0.607" stop-color="#990728"/><stop offset="0.643" stop-color="#990220"/><stop offset="0.679" stop-color="#940018"/><stop offset="0.714" stop-color="#890011"/><stop offset="0.750" stop-color="#7e000c"/><stop offset="0.786" stop-color="#730008"/><stop offset="0.821" stop-color="#670005"/><stop offset="0.857" stop-color="#5c0003"/><stop offset="0.893" stop-color="#510001"/><stop offset="0.929" stop-color="#450000"/><stop offset="0.964" stop-color="#3a0000"/><stop offset="1.000" stop-color="#2f0000"/></linearGradient><linearGradient id="o84" gradientUnits="userSpaceOnUse" x1="688" y1="0" x2="1136" y2="0"><stop offset="0.000" stop-color="#005f87"/><stop offset="0.036" stop-color="#006592"/><stop offset="0.071" stop-color="#006899"/><stop offset="0.107" stop-color="#006599"/><stop offset="0.143" stop-color="#006399"/><stop offset="0.179" stop-color="#006099"/><stop offset="0.214" stop-color="#005d99"/><stop offset="0.250" stop-color="#005a99"/><stop offset="0.286" stop-color="#005799"/><stop offset="0.321" stop-color="#215399"/><stop offset="0.357" stop-color="#474e99"/><stop offset="0.393" stop-color="#724999"/><stop offset="0.429" stop-color="#993f8f"/><stop offset="0.464" stop-color="#992a6a"/><stop offset="0.500" stop-color="#991c52"/><stop offset="0.536" stop-color="#991240"/><stop offset="0.571" stop-color="#990b33"/><stop offset="0.607" stop-color="#990529"/><stop offset="0.643" stop-color="#990021"/><stop offset="0.679" stop-color="#940019"/><stop offset="0.714" stop-color="#890012"/><stop offset="0.750" stop-color="#7d000d"/><stop offset="0.786" stop-color="#720009"/><stop offset="0.821" stop-color="#670005"/><stop offset="0.857" stop-color="#5c0003"/><stop offset="0.893" stop-color="#500001"/><stop offset="0.929" stop-color="#450000"/><stop offset="0.964" stop-color="#3a0000"/><stop offset="1.000" stop-color="#2e0000"/></linearGradient><linearGradient id="o85" gradientUnits="userSpaceOnUse" x1="704" y1="0" x2="1120" y2="0"><stop offset="0.000" stop-color="#006192"/><stop offset="0.038" stop-color="#006499"/><stop offset="0.077" stop-color="#006199"/><stop offset="0.115" stop-color="#005f99"/><stop offset="0.154" stop-color="#005c99"/><stop offset="0.192" stop-color="#005999"/><stop offset="0.231" stop-color="#005599"/><stop offset="0.269" stop-color="#025299"/><stop offset="0.308" stop-color="#234d99"/><stop offset="0.346" stop-color="#484999"/><stop offset="0.385" stop-color="#724399"/><stop offset="0.423" stop-color="#993990"/><stop offset="0.462" stop-color="#99266b"/><stop offset="0.500" stop-color="#991953"/><stop offset="0.538" stop-color="#990f41"/><stop offset="0.577" stop-color="#990834"/><stop offset="0.615" stop-color="#99032a"/><stop offset="0.654" stop-color="#990022"/><stop offset="0.692" stop-color="#93001a"/><stop offset="0.731" stop-color="#880013"/><stop offset="0.769" stop-color="#7d000d"/><stop offset="0.808" stop-color="#720009"/><stop offset="0.846" stop-color="#660006"/><stop offset="0.885" stop-color="#5b0003"/><stop offset="0.923" stop-color="#500002"/><stop offset="0.962" stop-color="#450000"/><stop offset="1.000" stop-color="#390000"/></linearGradient><linearGradient id="o86" gradientUnits="userSpaceOnUse" x1="704" y1="0" x2="1120" y2="0"><stop offset="0.000" stop-color="#005d91"/><stop offset="0.038" stop-color="#006099"/><stop offset="0.077" stop-color="#005d99"/><stop offset="0.115" stop-color="#005a99"/><stop offset="0.154" stop-color="#005799"/><stop offset="0.192" stop-color="#005499"/><stop offset="0.231" stop-color="#005199"/><stop offset="0.269" stop-color="#044d99"/><stop offset="0.308" stop-color="#244899"/><stop offset="0.346" stop-color="#494399"/><stop offset="0.385" stop-color="#733e99"/><stop offset="0.423" stop-color="#993491"/><stop offset="0.462" stop-color="#99226c"/><stop offset="0.500" stop-color="#991654"/><stop offset="0.538" stop-color="#990d42"/><stop offset="0.577" stop-color="#990635"/><stop offset="0.615" stop-color="#99012b"/><stop offset="0.654" stop-color="#990023"/><stop offset="0.692" stop-color="#92001b"/><stop offset="0.731" stop-color="#870014"/><stop offset="0.769" stop-color="#7c000e"/><stop offset="0.808" stop-color="#71000a"/><stop offset="0.846" stop-color="#660006"/><stop offset="0.885" stop-color="#5b0004"/><stop offset="0.923" stop-color="#500002"/><stop offset="0.962" stop-color="#440001"/><stop offset="1.000" stop-color="#390000"/></linearGradient><linearGradient id="o87" gradientUnits="userSpaceOnUse" x1="704" y1="0" x2="1104" y2="0"><stop offset="0.000" stop-color="#005991"/><stop offset="0.040" stop-color="#005c99"/><stop offset="0.080" stop-color="#005999"/><stop offset="0.120" stop-color="#005699"/><stop offset="0.160" stop-color="#005399"/><stop offset="0.200" stop-color="#005099"/><stop offset="0.240" stop-color="#004c99"/><stop offset="0.280" stop-color="#054899"/><stop offset="0.320" stop-color="#264399"/><stop offset="0.360" stop-color="#4a3e99"/><stop offset="0.400" stop-color="#733899"/><stop offset="0.440" stop-color="#992f91"/><stop offset="0.480" stop-color="#991e6d"/><stop offset="0.520" stop-color="#991255"/><stop offset="0.560" stop-color="#990a44"/><stop offset="0.600" stop-color="#990436"/><stop offset="0.640" stop-color="#99002c"/><stop offset="0.680" stop-color="#990024"/><stop offset="0.720" stop-color="#92001b"/><stop offset="0.760" stop-color="#870014"/><stop offset="0.800" stop-color="#7c000f"/><stop offset="0.840" stop-color="#71000a"/><stop offset="0.880" stop-color="#650007"/><stop offset="0.920" stop-color="#5a0004"/><stop offset="0.960" stop-color="#4f0002"/><stop offset="1.000" stop-color="#440001"/></linearGradient><linearGradient id="o88" gradientUnits="userSpaceOnUse" x1="704" y1="0" x2="1104" y2="0"><stop offset="0.000" stop-color="#005590"/><stop offset="0.040" stop-color="#005899"/><stop offset="0.080" stop-color="#005599"/><stop offset="0.120" stop-color="#005299"/><stop offset="0.160" stop-color="#004f99"/><stop offset="0.200" stop-color="#004b99"/><stop offset="0.240" stop-color="#004899"/><stop offset="0.280" stop-color="#074399"/><stop offset="0.320" stop-color="#273e99"/><stop offset="0.360" stop-color="#4b3999"/><stop offset="0.400" stop-color="#733399"/><stop offset="0.440" stop-color="#992a92"/><stop offset="0.480" stop-color="#991a6e"/><stop offset="0.520" stop-color="#990f56"/><stop offset="0.560" stop-color="#990845"/><stop offset="0.600" stop-color="#990237"/><stop offset="0.640" stop-color="#99002d"/><stop offset="0.680" stop-color="#990025"/><stop offset="0.720" stop-color="#91001c"/><stop offset="0.760" stop-color="#860015"/><stop offset="0.800" stop-color="#7b000f"/><stop offset="0.840" stop-color="#70000b"/><stop offset="0.880" stop-color="#650007"/><stop offset="0.920" stop-color="#5a0005"/><stop offset="0.960" stop-color="#4f0003"/><stop offset="1.000" stop-color="#430001"/></linearGradient><linearGradient id="o89" gradientUnits="userSpaceOnUse" x1="704" y1="0" x2="1088" y2="0"><stop offset="0.000" stop-color="#00518f"/><stop offset="0.042" stop-color="#005499"/><stop offset="0.083" stop-color="#005299"/><stop offset="0.125" stop-color="#004e99"/><stop offset="0.167" stop-color="#004b99"/><stop offset="0.208" stop-color="#004799"/><stop offset="0.250" stop-color="#004399"/><stop offset="0.292" stop-color="#093f99"/><stop offset="0.333" stop-color="#293a99"/><stop offset="0.375" stop-color="#4c3499"/><stop offset="0.417" stop-color="#732e99"/><stop offset="0.458" stop-color="#992593"/><stop offset="0.500" stop-color="#99176f"/><stop offset="0.542" stop-color="#990c57"/><stop offset="0.583" stop-color="#990546"/><stop offset="0.625" stop-color="#990038"/><stop offset="0.667" stop-color="#99002e"/><stop offset="0.708" stop-color="#990025"/><stop offset="0.750" stop-color="#90001d"/><stop offset="0.792" stop-color="#850016"/><stop offset="0.833" stop-color="#7a0010"/><stop offset="0.875" stop-color="#6f000b"/><stop offset="0.917" stop-color="#640008"/><stop offset="0.958" stop-color="#590005"/><stop offset="1.000" stop-color="#4e0003"/></linearGradient><linearGradient id="o90" gradientUnits="userSpaceOnUse" x1="704" y1="0" x2="1088" y2="0"><stop offset="0.000" stop-color="#004e8e"/><stop offset="0.042" stop-color="#005199"/><stop offset="0.083" stop-color="#004e99"/><stop offset="0.125" stop-color="#004b99"/><stop offset="0.167" stop-color="#004799"/><stop offset="0.208" stop-color="#004399"/><stop offset="0.250" stop-color="#003f99"/><stop offset="0.292" stop-color="#0b3a99"/><stop offset="0.333" stop-color="#2a3599"/><stop offset="0.375" stop-color="#4d3099"/><stop offset="0.417" stop-color="#732999"/><stop offset="0.458" stop-color="#992193"/><stop offset="0.500" stop-color="#991370"/><stop offset="0.542" stop-color="#990a58"/><stop offset="0.583" stop-color="#990347"/><stop offset="0.625" stop-color="#990039"/><stop offset="0.667" stop-color="#99002f"/><stop offset="0.708" stop-color="#990026"/><stop offset="0.750" stop-color="#8f001d"/><stop offset="0.792" stop-color="#850016"/><stop offset="0.833" stop-color="#7a0010"/><stop offset="0.875" stop-color="#6f000c"/><stop offset="0.917" stop-color="#640008"/><stop offset="0.958" stop-color="#590005"/><stop offset="1.000" stop-color="#4e0003"/></linearGradient><linearGradient id="o91" gradientUnits="userSpaceOnUse" x1="704" y1="0" x2="1072" y2="0"><stop offset="0.000" stop-color="#004a8d"/><stop offset="0.043" stop-color="#004d98"/><stop offset="0.087" stop-color="#004a99"/><stop offset="0.130" stop-color="#004799"/><stop offset="0.174" stop-color="#004399"/><stop offset="0.217" stop-color="#003f99"/><stop offset="0.261" stop-color="#003b99"/><stop offset="0.304" stop-color="#0d3699"/><stop offset="0.348" stop-color="#2b3199"/><stop offset="0.391" stop-color="#4d2b99"/><stop offset="0.435" stop-color="#742599"/><stop offset="0.478" stop-color="#991c94"/><stop offset="0.522" stop-color="#990f71"/><stop offset="0.565" stop-color="#990759"/><stop offset="0.609" stop-color="#990048"/><stop offset="0.652" stop-color="#99003a"/><stop offset="0.696" stop-color="#990030"/><stop offset="0.739" stop-color="#990027"/><stop offset="0.783" stop-color="#8e001e"/><stop offset="0.826" stop-color="#840017"/><stop offset="0.870" stop-color="#790011"/><stop offset="0.913" stop-color="#6e000c"/><stop offset="0.957" stop-color="#630009"/><stop offset="1.000" stop-color="#580006"/></linearGradient><linearGradient id="o92" gradientUnits="userSpaceOnUse" x1="704" y1="0" x2="1072" y2="0"><stop offset="0.000" stop-color="#00478d"/><stop offset="0.043" stop-color="#004997"/><stop offset="0.087" stop-color="#004799"/><stop offset="0.130" stop-color="#004399"/><stop offset="0.174" stop-color="#004099"/><stop offset="0.217" stop-color="#003b99"/><stop offset="0.261" stop-color="#003799"/><stop offset="0.304" stop-color="#0e3299"/><stop offset="0.348" stop-color="#2d2d99"/><stop offset="0.391" stop-color="#4e2799"/><stop offset="0.435" stop-color="#742099"/><stop offset="0.478" stop-color="#991894"/><stop offset="0.522" stop-color="#990c72"/><stop offset="0.565" stop-color="#99045a"/><stop offset="0.609" stop-color="#990049"/><stop offset="0.652" stop-color="#99003b"/><stop offset="0.696" stop-color="#990031"/><stop offset="0.739" stop-color="#980028"/><stop offset="0.783" stop-color="#8e001f"/><stop offset="0.826" stop-color="#830017"/><stop offset="0.870" stop-color="#780011"/><stop offset="0.913" stop-color="#6e000d"/><stop offset="0.957" stop-color="#630009"/><stop offset="1.000" stop-color="#580006"/></linearGradient><linearGradient id="o93" gradientUnits="userSpaceOnUse" x1="704" y1="0" x2="1056" y2="0"><stop offset="0.000" stop-color="#00438c"/><stop offset="0.045" stop-color="#004596"/><stop offset="0.091" stop-color="#004399"/><stop offset="0.136" stop-color="#004099"/><stop offset="0.182" stop-color="#003c99"/><stop offset="0.227" stop-color="#003899"/><stop offset="0.273" stop-color="#003399"/><stop offset="0.318" stop-color="#102e99"/><stop offset="0.364" stop-color="#2e2999"/><stop offset="0.409" stop-color="#4f2399"/><stop offset="0.455" stop-color="#741c99"/><stop offset="0.500" stop-color="#991495"/><stop offset="0.545" stop-color="#990973"/><stop offset="0.591" stop-color="#99015b"/><stop offset="0.636" stop-color="#99004a"/><stop offset="0.682" stop-color="#99003c"/><stop offset="0.727" stop-color="#990032"/><stop offset="0.773" stop-color="#970029"/><stop offset="0.818" stop-color="#8d001f"/><stop offset="0.864" stop-color="#820018"/><stop offset="0.909" stop-color="#780012"/><stop offset="0.955" stop-color="#6d000d"/><stop offset="1.000" stop-color="#620009"/></linearGradient><linearGradient id="o94" gradientUnits="userSpaceOnUse" x1="704" y1="0" x2="1056" y2="0"><stop offset="0.000" stop-color="#00408b"/><stop offset="0.045" stop-color="#004295"/><stop offset="0.091" stop-color="#004099"/><stop offset="0.136" stop-color="#003c99"/><stop offset="0.182" stop-color="#003899"/><stop offset="0.227" stop-color="#003499"/><stop offset="0.273" stop-color="#002f99"/><stop offset="0.318" stop-color="#122a99"/><stop offset="0.364" stop-color="#2f2599"/><stop offset="0.409" stop-color="#501f99"/><stop offset="0.455" stop-color="#741899"/><stop offset="0.500" stop-color="#991095"/><stop offset="0.545" stop-color="#990574"/><stop offset="0.591" stop-color="#99005c"/><stop offset="0.636" stop-color="#99004b"/><stop offset="0.682" stop-color="#99003d"/><stop offset="0.727" stop-color="#990033"/><stop offset="0.773" stop-color="#960029"/><stop offset="0.818" stop-color="#8c0020"/><stop offset="0.864" stop-color="#810018"/><stop offset="0.909" stop-color="#770012"/><stop offset="0.955" stop-color="#6c000e"/><stop offset="1.000" stop-color="#61000a"/></linearGradient><linearGradient id="o95" gradientUnits="userSpaceOnUse" x1="704" y1="0" x2="1040" y2="0"><stop offset="0.000" stop-color="#003d8a"/><stop offset="0.048" stop-color="#003e94"/><stop offset="0.095" stop-color="#003d99"/><stop offset="0.143" stop-color="#003999"/><stop offset="0.190" stop-color="#003599"/><stop offset="0.238" stop-color="#003199"/><stop offset="0.286" stop-color="#002c99"/><stop offset="0.333" stop-color="#132799"/><stop offset="0.381" stop-color="#302199"/><stop offset="0.429" stop-color="#501b99"/><stop offset="0.476" stop-color="#741499"/><stop offset="0.524" stop-color="#990c96"/><stop offset="0.571" stop-color="#990275"/><stop offset="0.619" stop-color="#99005d"/><stop offset="0.667" stop-color="#99004c"/><stop offset="0.714" stop-color="#99003e"/><stop offset="0.762" stop-color="#990034"/><stop offset="0.810" stop-color="#95002a"/><stop offset="0.857" stop-color="#8b0020"/><stop offset="0.905" stop-color="#800019"/><stop offset="0.952" stop-color="#760013"/><stop offset="1.000" stop-color="#6b000e"/></linearGradient><linearGradient id="o96" gradientUnits="userSpaceOnUse" x1="704" y1="0" x2="1040" y2="0"><stop offset="0.000" stop-color="#003989"/><stop offset="0.048" stop-color="#003b93"/><stop offset="0.095" stop-color="#003999"/><stop offset="0.143" stop-color="#003699"/><stop offset="0.190" stop-color="#003299"/><stop offset="0.238" stop-color="#002d99"/><stop offset="0.286" stop-color="#002899"/><stop offset="0.333" stop-color="#152399"/><stop offset="0.381" stop-color="#311d99"/><stop offset="0.429" stop-color="#511799"/><stop offset="0.476" stop-color="#741099"/><stop offset="0.524" stop-color="#990896"/><stop offset="0.571" stop-color="#990075"/><stop offset="0.619" stop-color="#99005e"/><stop offset="0.667" stop-color="#99004d"/><stop offset="0.714" stop-color="#99003f"/><stop offset="0.762" stop-color="#990035"/><stop offset="0.810" stop-color="#94002a"/><stop offset="0.857" stop-color="#8a0021"/><stop offset="0.905" stop-color="#800019"/><stop offset="0.952" stop-color="#750013"/><stop offset="1.000" stop-color="#6a000f"/></linearGradient><linearGradient id="o97" gradientUnits="userSpaceOnUse" x1="704" y1="0" x2="1024" y2="0"><stop offset="0.000" stop-color="#003688"/><stop offset="0.050" stop-color="#003792"/><stop offset="0.100" stop-color="#003699"/><stop offset="0.150" stop-color="#003299"/><stop offset="0.200" stop-color="#002e99"/><stop offset="0.250" stop-color="#002a99"/><stop offset="0.300" stop-color="#002599"/><stop offset="0.350" stop-color="#161f99"/><stop offset="0.400" stop-color="#321a99"/><stop offset="0.450" stop-color="#521399"/><stop offset="0.500" stop-color="#750c99"/><stop offset="0.550" stop-color="#990497"/><stop offset="0.600" stop-color="#990076"/><stop offset="0.650" stop-color="#99005f"/><stop offset="0.700" stop-color="#99004e"/><stop offset="0.750" stop-color="#990040"/><stop offset="0.800" stop-color="#990035"/><stop offset="0.850" stop-color="#93002b"/><stop offset="0.900" stop-color="#890021"/><stop offset="0.950" stop-color="#7f001a"/><stop offset="1.000" stop-color="#740014"/></linearGradient><linearGradient id="o98" gradientUnits="userSpaceOnUse" x1="704" y1="0" x2="1024" y2="0"><stop offset="0.000" stop-color="#003387"/><stop offset="0.050" stop-color="#003490"/><stop offset="0.100" stop-color="#003399"/><stop offset="0.150" stop-color="#002f99"/><stop offset="0.200" stop-color="#002b99"/><stop offset="0.250" stop-color="#002699"/><stop offset="0.300" stop-color="#002199"/><stop offset="0.350" stop-color="#171c99"/><stop offset="0.400" stop-color="#341699"/><stop offset="0.450" stop-color="#520f99"/><stop offset="0.500" stop-color="#750899"/><stop offset="0.550" stop-color="#990097"/><stop offset="0.600" stop-color="#990077"/><stop offset="0.650" stop-color="#990060"/><stop offset="0.700" stop-color="#99004e"/><stop offset="0.750" stop-color="#990041"/><stop offset="0.800" stop-color="#990036"/><stop offset="0.850" stop-color="#91002b"/><stop offset="0.900" stop-color="#880022"/><stop offset="0.950" stop-color="#7e001a"/><stop offset="1.000" stop-color="#730014"/></linearGradient><linearGradient id="o99" gradientUnits="userSpaceOnUse" x1="704" y1="0" x2="1008" y2="0"><stop offset="0.000" stop-color="#003086"/><stop offset="0.053" stop-color="#00318f"/><stop offset="0.105" stop-color="#003099"/><stop offset="0.158" stop-color="#002c99"/><stop offset="0.211" stop-color="#002899"/><stop offset="0.263" stop-color="#002399"/><stop offset="0.316" stop-color="#001e99"/><stop offset="0.368" stop-color="#191999"/><stop offset="0.421" stop-color="#351399"/><stop offset="0.474" stop-color="#530c99"/><stop offset="0.526" stop-color="#750599"/><stop offset="0.579" stop-color="#990098"/><stop offset="0.632" stop-color="#990078"/><stop offset="0.684" stop-color="#990061"/><stop offset="0.737" stop-color="#99004f"/><stop offset="0.789" stop-color="#990042"/><stop offset="0.842" stop-color="#990037"/><stop offset="0.895" stop-color="#90002c"/><stop offset="0.947" stop-color="#870022"/><stop offset="1.000" stop-color="#7d001b"/></linearGradient><linearGradient id="o100" gradientUnits="userSpaceOnUse" x1="720" y1="0" x2="1008" y2="0"><stop offset="0.000" stop-color="#002e8e"/><stop offset="0.056" stop-color="#002d97"/><stop offset="0.111" stop-color="#002999"/><stop offset="0.167" stop-color="#002599"/><stop offset="0.222" stop-color="#002099"/><stop offset="0.278" stop-color="#011b99"/><stop offset="0.333" stop-color="#1a1599"/><stop offset="0.389" stop-color="#360f99"/><stop offset="0.444" stop-color="#540999"/><stop offset="0.500" stop-color="#750199"/><stop offset="0.556" stop-color="#990098"/><stop offset="0.611" stop-color="#990078"/><stop offset="0.667" stop-color="#990061"/><stop offset="0.722" stop-color="#990050"/><stop offset="0.778" stop-color="#990043"/><stop offset="0.833" stop-color="#980038"/><stop offset="0.889" stop-color="#8f002c"/><stop offset="0.944" stop-color="#850023"/><stop offset="1.000" stop-color="#7c001b"/></linearGradient><linearGradient id="o101" gradientUnits="userSpaceOnUse" x1="720" y1="0" x2="992" y2="0"><stop offset="0.000" stop-color="#002b8d"/><stop offset="0.059" stop-color="#002a96"/><stop offset="0.118" stop-color="#002699"/><stop offset="0.176" stop-color="#002299"/><stop offset="0.235" stop-color="#001d99"/><stop offset="0.294" stop-color="#031899"/><stop offset="0.353" stop-color="#1b1299"/><stop offset="0.412" stop-color="#370c99"/><stop offset="0.471" stop-color="#540599"/><stop offset="0.529" stop-color="#750099"/><stop offset="0.588" stop-color="#990099"/><stop offset="0.647" stop-color="#990079"/><stop offset="0.706" stop-color="#990062"/><stop offset="0.765" stop-color="#990051"/><stop offset="0.824" stop-color="#990044"/><stop offset="0.882" stop-color="#970038"/><stop offset="0.941" stop-color="#8e002d"/><stop offset="1.000" stop-color="#840023"/></linearGradient><linearGradient id="o102" gradientUnits="userSpaceOnUse" x1="720" y1="0" x2="992" y2="0"><stop offset="0.000" stop-color="#00288c"/><stop offset="0.059" stop-color="#002795"/><stop offset="0.118" stop-color="#002499"/><stop offset="0.176" stop-color="#001f99"/><stop offset="0.235" stop-color="#001a99"/><stop offset="0.294" stop-color="#041599"/><stop offset="0.353" stop-color="#1d0f99"/><stop offset="0.412" stop-color="#380999"/><stop offset="0.471" stop-color="#550299"/><stop offset="0.529" stop-color="#750099"/><stop offset="0.588" stop-color="#990099"/><stop offset="0.647" stop-color="#99007a"/><stop offset="0.706" stop-color="#990063"/><stop offset="0.765" stop-color="#990052"/><stop offset="0.824" stop-color="#990044"/><stop offset="0.882" stop-color="#950038"/><stop offset="0.941" stop-color="#8c002d"/><stop offset="1.000" stop-color="#830024"/></linearGradient><linearGradient id="o103" gradientUnits="userSpaceOnUse" x1="720" y1="0" x2="976" y2="0"><stop offset="0.000" stop-color="#00258a"/><stop offset="0.062" stop-color="#002493"/><stop offset="0.125" stop-color="#002199"/><stop offset="0.188" stop-color="#001c99"/><stop offset="0.250" stop-color="#001799"/><stop offset="0.312" stop-color="#061299"/><stop offset="0.375" stop-color="#1e0c99"/><stop offset="0.438" stop-color="#380699"/><stop offset="0.500" stop-color="#560099"/><stop offset="0.562" stop-color="#750099"/><stop offset="0.625" stop-color="#980099"/><stop offset="0.688" stop-color="#99007a"/><stop offset="0.750" stop-color="#990064"/><stop offset="0.812" stop-color="#990053"/><stop offset="0.875" stop-color="#990045"/><stop offset="0.938" stop-color="#940039"/><stop offset="1.000" stop-color="#8b002d"/></linearGradient><linearGradient id="o104" gradientUnits="userSpaceOnUse" x1="720" y1="0" x2="976" y2="0"><stop offset="0.000" stop-color="#002289"/><stop offset="0.062" stop-color="#002192"/><stop offset="0.125" stop-color="#001e99"/><stop offset="0.188" stop-color="#001999"/><stop offset="0.250" stop-color="#001499"/><stop offset="0.312" stop-color="#070f99"/><stop offset="0.375" stop-color="#1f0999"/><stop offset="0.438" stop-color="#390399"/><stop offset="0.500" stop-color="#560099"/><stop offset="0.562" stop-color="#750099"/><stop offset="0.625" stop-color="#980099"/><stop offset="0.688" stop-color="#99007b"/><stop offset="0.750" stop-color="#990065"/><stop offset="0.812" stop-color="#990054"/><stop offset="0.875" stop-color="#990046"/><stop offset="0.938" stop-color="#930039"/><stop offset="1.000" stop-color="#8a002d"/></linearGradient><linearGradient id="o105" gradientUnits="userSpaceOnUse" x1="720" y1="0" x2="960" y2="0"><stop offset="0.000" stop-color="#002088"/><stop offset="0.067" stop-color="#001e90"/><stop offset="0.133" stop-color="#001b98"/><stop offset="0.200" stop-color="#001799"/><stop offset="0.267" stop-color="#001299"/><stop offset="0.333" stop-color="#080c99"/><stop offset="0.400" stop-color="#200699"/><stop offset="0.467" stop-color="#3a0099"/><stop offset="0.533" stop-color="#570099"/><stop offset="0.600" stop-color="#760099"/><stop offset="0.667" stop-color="#980099"/><stop offset="0.733" stop-color="#99007c"/><stop offset="0.800" stop-color="#990065"/><stop offset="0.867" stop-color="#990054"/><stop offset="0.933" stop-color="#990047"/><stop offset="1.000" stop-color="#910039"/></linearGradient><linearGradient id="o106" gradientUnits="userSpaceOnUse" x1="720" y1="0" x2="944" y2="0"><stop offset="0.000" stop-color="#001d86"/><stop offset="0.071" stop-color="#001b8f"/><stop offset="0.143" stop-color="#001897"/><stop offset="0.214" stop-color="#001499"/><stop offset="0.286" stop-color="#000f99"/><stop offset="0.357" stop-color="#0a0999"/><stop offset="0.429" stop-color="#210499"/><stop offset="0.500" stop-color="#3b0099"/><stop offset="0.571" stop-color="#570099"/><stop offset="0.643" stop-color="#760099"/><stop offset="0.714" stop-color="#970099"/><stop offset="0.786" stop-color="#99007c"/><stop offset="0.857" stop-color="#990066"/><stop offset="0.929" stop-color="#990055"/><stop offset="1.000" stop-color="#980047"/></linearGradient><linearGradient id="o107" gradientUnits="userSpaceOnUse" x1="720" y1="0" x2="944" y2="0"><stop offset="0.000" stop-color="#001b85"/><stop offset="0.071" stop-color="#00198d"/><stop offset="0.143" stop-color="#001695"/><stop offset="0.214" stop-color="#001199"/><stop offset="0.286" stop-color="#000c99"/><stop offset="0.357" stop-color="#0b0799"/><stop offset="0.429" stop-color="#230199"/><stop offset="0.500" stop-color="#3c0099"/><stop offset="0.571" stop-color="#580099"/><stop offset="0.643" stop-color="#760099"/><stop offset="0.714" stop-color="#970099"/><stop offset="0.786" stop-color="#99007d"/><stop offset="0.857" stop-color="#990067"/><stop offset="0.929" stop-color="#990056"/><stop offset="1.000" stop-color="#960047"/></linearGradient><linearGradient id="o108" gradientUnits="userSpaceOnUse" x1="720" y1="0" x2="928" y2="0"><stop offset="0.000" stop-color="#001883"/><stop offset="0.077" stop-color="#00168c"/><stop offset="0.154" stop-color="#001394"/><stop offset="0.231" stop-color="#000f99"/><stop offset="0.308" stop-color="#000a99"/><stop offset="0.385" stop-color="#0c0499"/><stop offset="0.462" stop-color="#240099"/><stop offset="0.538" stop-color="#3d0099"/><stop offset="0.615" stop-color="#580099"/><stop offset="0.692" stop-color="#760099"/><stop offset="0.769" stop-color="#970099"/><stop offset="0.846" stop-color="#99007e"/><stop offset="0.923" stop-color="#990068"/><stop offset="1.000" stop-color="#990057"/></linearGradient><linearGradient id="o109" gradientUnits="userSpaceOnUse" x1="720" y1="0" x2="928" y2="0"><stop offset="0.000" stop-color="#001682"/><stop offset="0.077" stop-color="#00148a"/><stop offset="0.154" stop-color="#001092"/><stop offset="0.231" stop-color="#000c99"/><stop offset="0.308" stop-color="#000799"/><stop offset="0.385" stop-color="#0e0299"/><stop offset="0.462" stop-color="#250099"/><stop offset="0.538" stop-color="#3e0099"/><stop offset="0.615" stop-color="#590099"/><stop offset="0.692" stop-color="#760099"/><stop offset="0.769" stop-color="#960099"/><stop offset="0.846" stop-color="#99007e"/><stop offset="0.923" stop-color="#990068"/><stop offset="1.000" stop-color="#990057"/></linearGradient><linearGradient id="o110" gradientUnits="userSpaceOnUse" x1="736" y1="0" x2="912" y2="0"><stop offset="0.000" stop-color="#001189"/><stop offset="0.091" stop-color="#000e90"/><stop offset="0.182" stop-color="#000a97"/><stop offset="0.273" stop-color="#000599"/><stop offset="0.364" stop-color="#0f0099"/><stop offset="0.455" stop-color="#260099"/><stop offset="0.545" stop-color="#3e0099"/><stop offset="0.636" stop-color="#590099"/><stop offset="0.727" stop-color="#760099"/><stop offset="0.818" stop-color="#960099"/><stop offset="0.909" stop-color="#99007f"/><stop offset="1.000" stop-color="#990069"/></linearGradient><linearGradient id="o111" gradientUnits="userSpaceOnUse" x1="736" y1="0" x2="912" y2="0"><stop offset="0.000" stop-color="#000f87"/><stop offset="0.091" stop-color="#000c8f"/><stop offset="0.182" stop-color="#000795"/><stop offset="0.273" stop-color="#000299"/><stop offset="0.364" stop-color="#100099"/><stop offset="0.455" stop-color="#270099"/><stop offset="0.545" stop-color="#3f0099"/><stop offset="0.636" stop-color="#5a0099"/><stop offset="0.727" stop-color="#760099"/><stop offset="0.818" stop-color="#960099"/><stop offset="0.909" stop-color="#99007f"/><stop offset="1.000" stop-color="#99006a"/></linearGradient><linearGradient id="o112" gradientUnits="userSpaceOnUse" x1="736" y1="0" x2="896" y2="0"><stop offset="0.000" stop-color="#000d86"/><stop offset="0.100" stop-color="#00098d"/><stop offset="0.200" stop-color="#000594"/><stop offset="0.300" stop-color="#000099"/><stop offset="0.400" stop-color="#110099"/><stop offset="0.500" stop-color="#280099"/><stop offset="0.600" stop-color="#400099"/><stop offset="0.700" stop-color="#5a0099"/><stop offset="0.800" stop-color="#760099"/><stop offset="0.900" stop-color="#950099"/><stop offset="1.000" stop-color="#990080"/></linearGradient><linearGradient id="o113" gradientUnits="userSpaceOnUse" x1="736" y1="0" x2="896" y2="0"><stop offset="0.000" stop-color="#000b84"/><stop offset="0.100" stop-color="#00078b"/><stop offset="0.200" stop-color="#000392"/><stop offset="0.300" stop-color="#000097"/><stop offset="0.400" stop-color="#130099"/><stop offset="0.500" stop-color="#290099"/><stop offset="0.600" stop-color="#410099"/><stop offset="0.700" stop-color="#5a0099"/><stop offset="0.800" stop-color="#760099"/><stop offset="0.900" stop-color="#950099"/><stop offset="1.000" stop-color="#990080"/></linearGradient><linearGradient id="o114" gradientUnits="userSpaceOnUse" x1="736" y1="0" x2="880" y2="0"><stop offset="0.000" stop-color="#000982"/><stop offset="0.111" stop-color="#000589"/><stop offset="0.222" stop-color="#000190"/><stop offset="0.333" stop-color="#000095"/><stop offset="0.444" stop-color="#140099"/><stop offset="0.556" stop-color="#2a0099"/><stop offset="0.667" stop-color="#410099"/><stop offset="0.778" stop-color="#5b0099"/><stop offset="0.889" stop-color="#770099"/><stop offset="1.000" stop-color="#950099"/></linearGradient><linearGradient id="o115" gradientUnits="userSpaceOnUse" x1="736" y1="0" x2="880" y2="0"><stop offset="0.000" stop-color="#000781"/><stop offset="0.111" stop-color="#000388"/><stop offset="0.222" stop-color="#00008e"/><stop offset="0.333" stop-color="#010093"/><stop offset="0.444" stop-color="#150098"/><stop offset="0.556" stop-color="#2b0099"/><stop offset="0.667" stop-color="#420099"/><stop offset="0.778" stop-color="#5b0099"/><stop offset="0.889" stop-color="#770099"/><stop offset="1.000" stop-color="#940099"/></linearGradient><linearGradient id="o116" gradientUnits="userSpaceOnUse" x1="736" y1="0" x2="864" y2="0"><stop offset="0.000" stop-color="#00057f"/><stop offset="0.125" stop-color="#000186"/><stop offset="0.250" stop-color="#00008c"/><stop offset="0.375" stop-color="#020092"/><stop offset="0.500" stop-color="#160096"/><stop offset="0.625" stop-color="#2c0099"/><stop offset="0.750" stop-color="#430099"/><stop offset="0.875" stop-color="#5c0099"/><stop offset="1.000" stop-color="#770099"/></linearGradient><linearGradient id="o117" gradientUnits="userSpaceOnUse" x1="752" y1="0" x2="864" y2="0"><stop offset="0.000" stop-color="#000084"/><stop offset="0.143" stop-color="#00008a"/><stop offset="0.286" stop-color="#030090"/><stop offset="0.429" stop-color="#160094"/><stop offset="0.571" stop-color="#2c0097"/><stop offset="0.714" stop-color="#430099"/><stop offset="0.857" stop-color="#5c0099"/><stop offset="1.000" stop-color="#770099"/></linearGradient><linearGradient id="o118" gradientUnits="userSpaceOnUse" x1="752" y1="0" x2="848" y2="0"><stop offset="0.000" stop-color="#000082"/><stop offset="0.167" stop-color="#000088"/><stop offset="0.333" stop-color="#04008e"/><stop offset="0.500" stop-color="#170092"/><stop offset="0.667" stop-color="#2c0095"/><stop offset="0.833" stop-color="#430097"/><stop offset="1.000" stop-color="#5c0098"/></linearGradient><linearGradient id="o119" gradientUnits="userSpaceOnUse" x1="752" y1="0" x2="848" y2="0"><stop offset="0.000" stop-color="#000081"/><stop offset="0.167" stop-color="#000087"/><stop offset="0.333" stop-color="#05008c"/><stop offset="0.500" stop-color="#180090"/><stop offset="0.667" stop-color="#2c0093"/><stop offset="0.833" stop-color="#430095"/><stop offset="1.000" stop-color="#5b0096"/></linearGradient><linearGradient id="o120" gradientUnits="userSpaceOnUse" x1="752" y1="0" x2="848" y2="0"><stop offset="0.000" stop-color="#00007f"/><stop offset="0.167" stop-color="#000085"/><stop offset="0.333" stop-color="#06008a"/><stop offset="0.500" stop-color="#18008e"/><stop offset="0.667" stop-color="#2c0091"/><stop offset="0.833" stop-color="#420093"/><stop offset="1.000" stop-color="#5a0093"/></linearGradient><linearGradient id="o121" gradientUnits="userSpaceOnUse" x1="752" y1="0" x2="848" y2="0"><stop offset="0.000" stop-color="#00007d"/><stop offset="0.167" stop-color="#000083"/><stop offset="0.333" stop-color="#060088"/><stop offset="0.500" stop-color="#18008c"/><stop offset="0.667" stop-color="#2c008f"/><stop offset="0.833" stop-color="#410091"/><stop offset="1.000" stop-color="#580091"/></linearGradient><linearGradient id="i122" gradientUnits="userSpaceOnUse" x1="832" y1="0" x2="912" y2="0"><stop offset="0.000" stop-color="#00f00e"/><stop offset="0.200" stop-color="#00f206"/><stop offset="0.400" stop-color="#00f100"/><stop offset="0.600" stop-color="#14ee00"/><stop offset="0.800" stop-color="#34e900"/><stop offset="1.000" stop-color="#55e300"/></linearGradient><linearGradient id="i123" gradientUnits="userSpaceOnUse" x1="832" y1="0" x2="912" y2="0"><stop offset="0.000" stop-color="#00f310"/><stop offset="0.200" stop-color="#00f409"/><stop offset="0.400" stop-color="#00f301"/><stop offset="0.600" stop-color="#17f000"/><stop offset="0.800" stop-color="#38eb00"/><stop offset="1.000" stop-color="#5ae500"/></linearGradient><linearGradient id="i124" gradientUnits="userSpaceOnUse" x1="832" y1="0" x2="912" y2="0"><stop offset="0.000" stop-color="#00f613"/><stop offset="0.200" stop-color="#00f70b"/><stop offset="0.400" stop-color="#00f603"/><stop offset="0.600" stop-color="#19f300"/><stop offset="0.800" stop-color="#3cee00"/><stop offset="1.000" stop-color="#5ee700"/></linearGradient><linearGradient id="i125" gradientUnits="userSpaceOnUse" x1="832" y1="0" x2="912" y2="0"><stop offset="0.000" stop-color="#00f816"/><stop offset="0.200" stop-color="#00f90e"/><stop offset="0.400" stop-color="#00f806"/><stop offset="0.600" stop-color="#1cf500"/><stop offset="0.800" stop-color="#40f000"/><stop offset="1.000" stop-color="#63e900"/></linearGradient><linearGradient id="i126" gradientUnits="userSpaceOnUse" x1="832" y1="0" x2="928" y2="0"><stop offset="0.000" stop-color="#00fb19"/><stop offset="0.167" stop-color="#00fc11"/><stop offset="0.333" stop-color="#00fb09"/><stop offset="0.500" stop-color="#20f800"/><stop offset="0.667" stop-color="#44f300"/><stop offset="0.833" stop-color="#69ec00"/><stop offset="1.000" stop-color="#8de300"/></linearGradient><linearGradient id="i127" gradientUnits="userSpaceOnUse" x1="832" y1="0" x2="928" y2="0"><stop offset="0.000" stop-color="#00fe1d"/><stop offset="0.167" stop-color="#00ff15"/><stop offset="0.333" stop-color="#00fe0c"/><stop offset="0.500" stop-color="#23fa03"/><stop offset="0.667" stop-color="#48f500"/><stop offset="0.833" stop-color="#6eee00"/><stop offset="1.000" stop-color="#94e500"/></linearGradient><linearGradient id="i128" gradientUnits="userSpaceOnUse" x1="816" y1="0" x2="928" y2="0"><stop offset="0.000" stop-color="#00fc27"/><stop offset="0.143" stop-color="#00ff20"/><stop offset="0.286" stop-color="#00ff18"/><stop offset="0.429" stop-color="#01ff0f"/><stop offset="0.571" stop-color="#26fd06"/><stop offset="0.714" stop-color="#4cf700"/><stop offset="0.857" stop-color="#73f000"/><stop offset="1.000" stop-color="#9be800"/></linearGradient><linearGradient id="i129" gradientUnits="userSpaceOnUse" x1="816" y1="0" x2="944" y2="0"><stop offset="0.000" stop-color="#00ff2b"/><stop offset="0.125" stop-color="#00ff23"/><stop offset="0.250" stop-color="#00ff1b"/><stop offset="0.375" stop-color="#04ff12"/><stop offset="0.500" stop-color="#2aff09"/><stop offset="0.625" stop-color="#51fa00"/><stop offset="0.750" stop-color="#79f200"/><stop offset="0.875" stop-color="#a2ea00"/><stop offset="1.000" stop-color="#cae000"/></linearGradient><linearGradient id="i130" gradientUnits="userSpaceOnUse" x1="816" y1="0" x2="944" y2="0"><stop offset="0.000" stop-color="#00ff2e"/><stop offset="0.125" stop-color="#00ff26"/><stop offset="0.250" stop-color="#00ff1e"/><stop offset="0.375" stop-color="#06ff15"/><stop offset="0.500" stop-color="#2dff0c"/><stop offset="0.625" stop-color="#56fc02"/><stop offset="0.750" stop-color="#7ff500"/><stop offset="0.875" stop-color="#a9ec00"/><stop offset="1.000" stop-color="#d2e100"/></linearGradient><linearGradient id="i131" gradientUnits="userSpaceOnUse" x1="816" y1="0" x2="944" y2="0"><stop offset="0.000" stop-color="#00ff31"/><stop offset="0.125" stop-color="#00ff2a"/><stop offset="0.250" stop-color="#00ff22"/><stop offset="0.375" stop-color="#09ff19"/><stop offset="0.500" stop-color="#30ff0f"/><stop offset="0.625" stop-color="#5bfe05"/><stop offset="0.750" stop-color="#86f700"/><stop offset="0.875" stop-color="#b1ed00"/><stop offset="1.000" stop-color="#dbe300"/></linearGradient><linearGradient id="i132" gradientUnits="userSpaceOnUse" x1="816" y1="0" x2="944" y2="0"><stop offset="0.000" stop-color="#00ff35"/><stop offset="0.125" stop-color="#00ff2d"/><stop offset="0.250" stop-color="#00ff25"/><stop offset="0.375" stop-color="#0bff1c"/><stop offset="0.500" stop-color="#34ff13"/><stop offset="0.625" stop-color="#60ff09"/><stop offset="0.750" stop-color="#8cf900"/><stop offset="0.875" stop-color="#b9ef00"/><stop offset="1.000" stop-color="#e5e500"/></linearGradient><linearGradient id="i133" gradientUnits="userSpaceOnUse" x1="816" y1="0" x2="960" y2="0"><stop offset="0.000" stop-color="#00ff38"/><stop offset="0.111" stop-color="#00ff31"/><stop offset="0.222" stop-color="#00ff29"/><stop offset="0.333" stop-color="#0eff20"/><stop offset="0.444" stop-color="#37ff16"/><stop offset="0.556" stop-color="#64ff0c"/><stop offset="0.667" stop-color="#93fb01"/><stop offset="0.778" stop-color="#c1f100"/><stop offset="0.889" stop-color="#e7df00"/><stop offset="1.000" stop-color="#dba900"/></linearGradient><linearGradient id="i134" gradientUnits="userSpaceOnUse" x1="816" y1="0" x2="960" y2="0"><stop offset="0.000" stop-color="#00ff3c"/><stop offset="0.111" stop-color="#00ff35"/><stop offset="0.222" stop-color="#00ff2d"/><stop offset="0.333" stop-color="#11ff24"/><stop offset="0.444" stop-color="#3bff1a"/><stop offset="0.556" stop-color="#69ff10"/><stop offset="0.667" stop-color="#9bfd04"/><stop offset="0.778" stop-color="#caf300"/><stop offset="0.889" stop-color="#e8d900"/><stop offset="1.000" stop-color="#dda500"/></linearGradient><linearGradient id="i135" gradientUnits="userSpaceOnUse" x1="816" y1="0" x2="960" y2="0"><stop offset="0.000" stop-color="#00ff40"/><stop offset="0.111" stop-color="#00ff38"/><stop offset="0.222" stop-color="#00ff30"/><stop offset="0.333" stop-color="#14ff28"/><stop offset="0.444" stop-color="#3fff1e"/><stop offset="0.556" stop-color="#6eff14"/><stop offset="0.667" stop-color="#a2ff08"/><stop offset="0.778" stop-color="#d3f500"/><stop offset="0.889" stop-color="#ead300"/><stop offset="1.000" stop-color="#dea000"/></linearGradient><linearGradient id="i136" gradientUnits="userSpaceOnUse" x1="816" y1="0" x2="976" y2="0"><stop offset="0.000" stop-color="#00ff44"/><stop offset="0.100" stop-color="#00ff3d"/><stop offset="0.200" stop-color="#00ff34"/><stop offset="0.300" stop-color="#17ff2c"/><stop offset="0.400" stop-color="#43ff22"/><stop offset="0.500" stop-color="#74ff18"/><stop offset="0.600" stop-color="#a9ff0c"/><stop offset="0.700" stop-color="#dcf700"/><stop offset="0.800" stop-color="#eccd00"/><stop offset="0.900" stop-color="#e09c00"/><stop offset="1.000" stop-color="#d37800"/></linearGradient><linearGradient id="i137" gradientUnits="userSpaceOnUse" x1="816" y1="0" x2="976" y2="0"><stop offset="0.000" stop-color="#00ff48"/><stop offset="0.100" stop-color="#00ff41"/><stop offset="0.200" stop-color="#00ff39"/><stop offset="0.300" stop-color="#1aff30"/><stop offset="0.400" stop-color="#48ff26"/><stop offset="0.500" stop-color="#79ff1c"/><stop offset="0.600" stop-color="#b0ff10"/><stop offset="0.700" stop-color="#e6f803"/><stop offset="0.800" stop-color="#edc700"/><stop offset="0.900" stop-color="#e19700"/><stop offset="1.000" stop-color="#d57400"/></linearGradient><linearGradient id="i138" gradientUnits="userSpaceOnUse" x1="816" y1="0" x2="976" y2="0"><stop offset="0.000" stop-color="#00ff4c"/><stop offset="0.100" stop-color="#00ff45"/><stop offset="0.200" stop-color="#00ff3d"/><stop offset="0.300" stop-color="#1eff34"/><stop offset="0.400" stop-color="#4cff2b"/><stop offset="0.500" stop-color="#7fff20"/><stop offset="0.600" stop-color="#b7ff15"/><stop offset="0.700" stop-color="#f1fa08"/><stop offset="0.800" stop-color="#efc100"/><stop offset="0.900" stop-color="#e29300"/><stop offset="1.000" stop-color="#d67100"/></linearGradient><linearGradient id="i139" gradientUnits="userSpaceOnUse" x1="816" y1="0" x2="992" y2="0"><stop offset="0.000" stop-color="#00ff51"/><stop offset="0.091" stop-color="#00ff49"/><stop offset="0.182" stop-color="#00ff42"/><stop offset="0.273" stop-color="#21ff39"/><stop offset="0.364" stop-color="#51ff2f"/><stop offset="0.455" stop-color="#85ff25"/><stop offset="0.545" stop-color="#bfff19"/><stop offset="0.636" stop-color="#fcfb0c"/><stop offset="0.727" stop-color="#f0bb00"/><stop offset="0.818" stop-color="#e48e00"/><stop offset="0.909" stop-color="#d76d00"/><stop offset="1.000" stop-color="#ca5500"/></linearGradient><linearGradient id="i140" gradientUnits="userSpaceOnUse" x1="816" y1="0" x2="992" y2="0"><stop offset="0.000" stop-color="#00ff55"/><stop offset="0.091" stop-color="#00ff4e"/><stop offset="0.182" stop-color="#00ff46"/><stop offset="0.273" stop-color="#25ff3e"/><stop offset="0.364" stop-color="#55ff34"/><stop offset="0.455" stop-color="#8bff2a"/><stop offset="0.545" stop-color="#c7ff1e"/><stop offset="0.636" stop-color="#fdf310"/><stop offset="0.727" stop-color="#f1b502"/><stop offset="0.818" stop-color="#e58900"/><stop offset="0.909" stop-color="#d86a00"/><stop offset="1.000" stop-color="#cb5200"/></linearGradient><linearGradient id="i141" gradientUnits="userSpaceOnUse" x1="816" y1="0" x2="992" y2="0"><stop offset="0.000" stop-color="#00ff5a"/><stop offset="0.091" stop-color="#00ff53"/><stop offset="0.182" stop-color="#00ff4b"/><stop offset="0.273" stop-color="#29ff43"/><stop offset="0.364" stop-color="#5aff39"/><stop offset="0.455" stop-color="#92ff2f"/><stop offset="0.545" stop-color="#cfff23"/><stop offset="0.636" stop-color="#ffec14"/><stop offset="0.727" stop-color="#f3af05"/><stop offset="0.818" stop-color="#e68500"/><stop offset="0.909" stop-color="#d96600"/><stop offset="1.000" stop-color="#cc4f00"/></linearGradient><linearGradient id="i142" gradientUnits="userSpaceOnUse" x1="816" y1="0" x2="992" y2="0"><stop offset="0.000" stop-color="#00ff5f"/><stop offset="0.091" stop-color="#00ff58"/><stop offset="0.182" stop-color="#00ff50"/><stop offset="0.273" stop-color="#2cff48"/><stop offset="0.364" stop-color="#60ff3e"/><stop offset="0.455" stop-color="#98ff34"/><stop offset="0.545" stop-color="#d8ff28"/><stop offset="0.636" stop-color="#ffe318"/><stop offset="0.727" stop-color="#f4a908"/><stop offset="0.818" stop-color="#e78000"/><stop offset="0.909" stop-color="#da6300"/><stop offset="1.000" stop-color="#cd4c00"/></linearGradient><linearGradient id="i143" gradientUnits="userSpaceOnUse" x1="800" y1="0" x2="1008" y2="0"><stop offset="0.000" stop-color="#00ff6a"/><stop offset="0.077" stop-color="#00ff64"/><stop offset="0.154" stop-color="#00ff5d"/><stop offset="0.231" stop-color="#01ff55"/><stop offset="0.308" stop-color="#31ff4d"/><stop offset="0.385" stop-color="#65ff44"/><stop offset="0.462" stop-color="#a0ff39"/><stop offset="0.538" stop-color="#e1ff2e"/><stop offset="0.615" stop-color="#ffda1c"/><stop offset="0.692" stop-color="#f5a40c"/><stop offset="0.769" stop-color="#e87c00"/><stop offset="0.846" stop-color="#db5f00"/><stop offset="0.923" stop-color="#ce4900"/><stop offset="1.000" stop-color="#c03800"/></linearGradient><linearGradient id="i144" gradientUnits="userSpaceOnUse" x1="800" y1="0" x2="1008" y2="0"><stop offset="0.000" stop-color="#00ff70"/><stop offset="0.077" stop-color="#00ff69"/><stop offset="0.154" stop-color="#00ff63"/><stop offset="0.231" stop-color="#04ff5b"/><stop offset="0.308" stop-color="#35ff53"/><stop offset="0.385" stop-color="#6bff49"/><stop offset="0.462" stop-color="#a7ff3f"/><stop offset="0.538" stop-color="#ebff34"/><stop offset="0.615" stop-color="#ffd120"/><stop offset="0.692" stop-color="#f69e0f"/><stop offset="0.769" stop-color="#e97803"/><stop offset="0.846" stop-color="#dc5b00"/><stop offset="0.923" stop-color="#cf4600"/><stop offset="1.000" stop-color="#c13600"/></linearGradient><linearGradient id="i145" gradientUnits="userSpaceOnUse" x1="800" y1="0" x2="1008" y2="0"><stop offset="0.000" stop-color="#00ff75"/><stop offset="0.077" stop-color="#00ff6f"/><stop offset="0.154" stop-color="#00ff68"/><stop offset="0.231" stop-color="#07ff61"/><stop offset="0.308" stop-color="#39ff58"/><stop offset="0.385" stop-color="#71ff4f"/><stop offset="0.462" stop-color="#afff45"/><stop offset="0.538" stop-color="#f5ff3a"/><stop offset="0.615" stop-color="#ffc923"/><stop offset="0.692" stop-color="#f79812"/><stop offset="0.769" stop-color="#ea7306"/><stop offset="0.846" stop-color="#dd5800"/><stop offset="0.923" stop-color="#cf4300"/><stop offset="1.000" stop-color="#c23400"/></linearGradient><linearGradient id="i146" gradientUnits="userSpaceOnUse" x1="800" y1="0" x2="1024" y2="0"><stop offset="0.000" stop-color="#00ff7b"/><stop offset="0.071" stop-color="#00ff75"/><stop offset="0.143" stop-color="#00ff6e"/><stop offset="0.214" stop-color="#0bff67"/><stop offset="0.286" stop-color="#3eff5f"/><stop offset="0.357" stop-color="#77ff56"/><stop offset="0.429" stop-color="#b7ff4c"/><stop offset="0.500" stop-color="#fffe40"/><stop offset="0.571" stop-color="#ffc027"/><stop offset="0.643" stop-color="#f89215"/><stop offset="0.714" stop-color="#eb6f08"/><stop offset="0.786" stop-color="#de5400"/><stop offset="0.857" stop-color="#d04000"/><stop offset="0.929" stop-color="#c23100"/><stop offset="1.000" stop-color="#b42500"/></linearGradient><linearGradient id="i147" gradientUnits="userSpaceOnUse" x1="800" y1="0" x2="1024" y2="0"><stop offset="0.000" stop-color="#00ff80"/><stop offset="0.071" stop-color="#00ff7b"/><stop offset="0.143" stop-color="#00ff74"/><stop offset="0.214" stop-color="#0eff6d"/><stop offset="0.286" stop-color="#43ff65"/><stop offset="0.357" stop-color="#7eff5c"/><stop offset="0.429" stop-color="#c0ff52"/><stop offset="0.500" stop-color="#fff344"/><stop offset="0.571" stop-color="#ffb82a"/><stop offset="0.643" stop-color="#f98d18"/><stop offset="0.714" stop-color="#ec6a0b"/><stop offset="0.786" stop-color="#de5102"/><stop offset="0.857" stop-color="#d13e00"/><stop offset="0.929" stop-color="#c32f00"/><stop offset="1.000" stop-color="#b52300"/></linearGradient><linearGradient id="i148" gradientUnits="userSpaceOnUse" x1="800" y1="0" x2="1024" y2="0"><stop offset="0.000" stop-color="#00ff86"/><stop offset="0.071" stop-color="#00ff81"/><stop offset="0.143" stop-color="#00ff7a"/><stop offset="0.214" stop-color="#12ff74"/><stop offset="0.286" stop-color="#48ff6c"/><stop offset="0.357" stop-color="#85ff63"/><stop offset="0.429" stop-color="#c9ff59"/><stop offset="0.500" stop-color="#ffe947"/><stop offset="0.571" stop-color="#ffb02d"/><stop offset="0.643" stop-color="#fa871b"/><stop offset="0.714" stop-color="#ed660d"/><stop offset="0.786" stop-color="#df4d04"/><stop offset="0.857" stop-color="#d13b00"/><stop offset="0.929" stop-color="#c32c00"/><stop offset="1.000" stop-color="#b62100"/></linearGradient><linearGradient id="i149" gradientUnits="userSpaceOnUse" x1="800" y1="0" x2="1040" y2="0"><stop offset="0.000" stop-color="#00ff8d"/><stop offset="0.067" stop-color="#00ff87"/><stop offset="0.133" stop-color="#00ff81"/><stop offset="0.200" stop-color="#16ff7a"/><stop offset="0.267" stop-color="#4eff73"/><stop offset="0.333" stop-color="#8cff6a"/><stop offset="0.400" stop-color="#d3ff61"/><stop offset="0.467" stop-color="#ffdf4b"/><stop offset="0.533" stop-color="#ffa931"/><stop offset="0.600" stop-color="#fb821e"/><stop offset="0.667" stop-color="#ee6210"/><stop offset="0.733" stop-color="#e04a06"/><stop offset="0.800" stop-color="#d23800"/><stop offset="0.867" stop-color="#c42a00"/><stop offset="0.933" stop-color="#b61f00"/><stop offset="1.000" stop-color="#a81700"/></linearGradient><linearGradient id="i150" gradientUnits="userSpaceOnUse" x1="800" y1="0" x2="1040" y2="0"><stop offset="0.000" stop-color="#00ff93"/><stop offset="0.067" stop-color="#00ff8e"/><stop offset="0.133" stop-color="#00ff88"/><stop offset="0.200" stop-color="#1aff82"/><stop offset="0.267" stop-color="#53ff7a"/><stop offset="0.333" stop-color="#94ff72"/><stop offset="0.400" stop-color="#deff69"/><stop offset="0.467" stop-color="#ffd54e"/><stop offset="0.533" stop-color="#ffa134"/><stop offset="0.600" stop-color="#fc7c21"/><stop offset="0.667" stop-color="#ee5d12"/><stop offset="0.733" stop-color="#e04608"/><stop offset="0.800" stop-color="#d23501"/><stop offset="0.867" stop-color="#c42800"/><stop offset="0.933" stop-color="#b61d00"/><stop offset="1.000" stop-color="#a81500"/></linearGradient><linearGradient id="i151" gradientUnits="userSpaceOnUse" x1="800" y1="0" x2="1040" y2="0"><stop offset="0.000" stop-color="#00ff9a"/><stop offset="0.067" stop-color="#00ff95"/><stop offset="0.133" stop-color="#00ff8f"/><stop offset="0.200" stop-color="#1eff89"/><stop offset="0.267" stop-color="#59ff82"/><stop offset="0.333" stop-color="#9cff7a"/><stop offset="0.400" stop-color="#e9ff71"/><stop offset="0.467" stop-color="#ffcb52"/><stop offset="0.533" stop-color="#ff9a37"/><stop offset="0.600" stop-color="#fd7724"/><stop offset="0.667" stop-color="#ef5915"/><stop offset="0.733" stop-color="#e1430a"/><stop offset="0.800" stop-color="#d33203"/><stop offset="0.867" stop-color="#c52500"/><stop offset="0.933" stop-color="#b71b00"/><stop offset="1.000" stop-color="#a91400"/></linearGradient><linearGradient id="i152" gradientUnits="userSpaceOnUse" x1="800" y1="0" x2="1040" y2="0"><stop offset="0.000" stop-color="#00ffa1"/><stop offset="0.067" stop-color="#00ff9c"/><stop offset="0.133" stop-color="#00ff97"/><stop offset="0.200" stop-color="#22ff91"/><stop offset="0.267" stop-color="#5fff8a"/><stop offset="0.333" stop-color="#a5ff83"/><stop offset="0.400" stop-color="#f4ff7a"/><stop offset="0.467" stop-color="#ffc255"/><stop offset="0.533" stop-color="#ff933a"/><stop offset="0.600" stop-color="#fd7226"/><stop offset="0.667" stop-color="#ef5517"/><stop offset="0.733" stop-color="#e13f0c"/><stop offset="0.800" stop-color="#d32f04"/><stop offset="0.867" stop-color="#c52300"/><stop offset="0.933" stop-color="#b71900"/><stop offset="1.000" stop-color="#a91200"/></linearGradient><linearGradient id="i153" gradientUnits="userSpaceOnUse" x1="800" y1="0" x2="1056" y2="0"><stop offset="0.000" stop-color="#00ffa9"/><stop offset="0.062" stop-color="#00ffa4"/><stop offset="0.125" stop-color="#00ff9f"/><stop offset="0.188" stop-color="#27ff99"/><stop offset="0.250" stop-color="#66ff93"/><stop offset="0.312" stop-color="#aeff8c"/><stop offset="0.375" stop-color="#fffd83"/><stop offset="0.438" stop-color="#ffb958"/><stop offset="0.500" stop-color="#ff8c3d"/><stop offset="0.562" stop-color="#fe6c29"/><stop offset="0.625" stop-color="#f05119"/><stop offset="0.688" stop-color="#e23c0e"/><stop offset="0.750" stop-color="#d42d06"/><stop offset="0.812" stop-color="#c62100"/><stop offset="0.875" stop-color="#b71800"/><stop offset="0.938" stop-color="#a91000"/><stop offset="1.000" stop-color="#9b0b00"/></linearGradient><linearGradient id="i154" gradientUnits="userSpaceOnUse" x1="800" y1="0" x2="1056" y2="0"><stop offset="0.000" stop-color="#00ffb0"/><stop offset="0.062" stop-color="#00ffac"/><stop offset="0.125" stop-color="#00ffa8"/><stop offset="0.188" stop-color="#2cffa2"/><stop offset="0.250" stop-color="#6dff9c"/><stop offset="0.312" stop-color="#b8ff95"/><stop offset="0.375" stop-color="#fff186"/><stop offset="0.438" stop-color="#ffb05b"/><stop offset="0.500" stop-color="#ff8540"/><stop offset="0.562" stop-color="#fe672c"/><stop offset="0.625" stop-color="#f04c1c"/><stop offset="0.688" stop-color="#e23910"/><stop offset="0.750" stop-color="#d42a08"/><stop offset="0.812" stop-color="#c61e02"/><stop offset="0.875" stop-color="#b81600"/><stop offset="0.938" stop-color="#a90f00"/><stop offset="1.000" stop-color="#9b0a00"/></linearGradient><linearGradient id="i155" gradientUnits="userSpaceOnUse" x1="800" y1="0" x2="1056" y2="0"><stop offset="0.000" stop-color="#00ffb9"/><stop offset="0.062" stop-color="#00ffb5"/><stop offset="0.125" stop-color="#00ffb0"/><stop offset="0.188" stop-color="#31ffac"/><stop offset="0.250" stop-color="#75ffa6"/><stop offset="0.312" stop-color="#c2ffa0"/><stop offset="0.375" stop-color="#ffe589"/><stop offset="0.438" stop-color="#ffa75e"/><stop offset="0.500" stop-color="#ff7f42"/><stop offset="0.562" stop-color="#ff622f"/><stop offset="0.625" stop-color="#f0481e"/><stop offset="0.688" stop-color="#e23512"/><stop offset="0.750" stop-color="#d4270a"/><stop offset="0.812" stop-color="#c61c03"/><stop offset="0.875" stop-color="#b81400"/><stop offset="0.938" stop-color="#aa0d00"/><stop offset="1.000" stop-color="#9c0800"/></linearGradient><linearGradient id="i156" gradientUnits="userSpaceOnUse" x1="800" y1="0" x2="1072" y2="0"><stop offset="0.000" stop-color="#00ffc1"/><stop offset="0.059" stop-color="#00ffbe"/><stop offset="0.118" stop-color="#00ffba"/><stop offset="0.176" stop-color="#37ffb5"/><stop offset="0.235" stop-color="#7dffb0"/><stop offset="0.294" stop-color="#cdffab"/><stop offset="0.353" stop-color="#ffda8c"/><stop offset="0.412" stop-color="#ff9f61"/><stop offset="0.471" stop-color="#ff7845"/><stop offset="0.529" stop-color="#ff5d31"/><stop offset="0.588" stop-color="#f14420"/><stop offset="0.647" stop-color="#e33214"/><stop offset="0.706" stop-color="#d4240b"/><stop offset="0.765" stop-color="#c61a05"/><stop offset="0.824" stop-color="#b81200"/><stop offset="0.882" stop-color="#aa0c00"/><stop offset="0.941" stop-color="#9c0700"/><stop offset="1.000" stop-color="#8d0300"/></linearGradient><linearGradient id="i157" gradientUnits="userSpaceOnUse" x1="800" y1="0" x2="1072" y2="0"><stop offset="0.000" stop-color="#00ffca"/><stop offset="0.059" stop-color="#00ffc7"/><stop offset="0.118" stop-color="#00ffc4"/><stop offset="0.176" stop-color="#3cffc0"/><stop offset="0.235" stop-color="#85ffbb"/><stop offset="0.294" stop-color="#d9ffb6"/><stop offset="0.353" stop-color="#ffce8f"/><stop offset="0.412" stop-color="#ff9764"/><stop offset="0.471" stop-color="#ff7248"/><stop offset="0.529" stop-color="#ff5834"/><stop offset="0.588" stop-color="#f14022"/><stop offset="0.647" stop-color="#e32f16"/><stop offset="0.706" stop-color="#d4220d"/><stop offset="0.765" stop-color="#c61806"/><stop offset="0.824" stop-color="#b81001"/><stop offset="0.882" stop-color="#aa0a00"/><stop offset="0.941" stop-color="#9c0600"/><stop offset="1.000" stop-color="#8e0200"/></linearGradient><linearGradient id="i158" gradientUnits="userSpaceOnUse" x1="784" y1="0" x2="1072" y2="0"><stop offset="0.000" stop-color="#00ffd6"/><stop offset="0.056" stop-color="#00ffd3"/><stop offset="0.111" stop-color="#00ffd1"/><stop offset="0.167" stop-color="#01ffce"/><stop offset="0.222" stop-color="#42ffcb"/><stop offset="0.278" stop-color="#8effc7"/><stop offset="0.333" stop-color="#e6ffc3"/><stop offset="0.389" stop-color="#ffc491"/><stop offset="0.444" stop-color="#ff8f67"/><stop offset="0.500" stop-color="#ff6c4a"/><stop offset="0.556" stop-color="#ff5236"/><stop offset="0.611" stop-color="#f13c25"/><stop offset="0.667" stop-color="#e32b18"/><stop offset="0.722" stop-color="#d51f0e"/><stop offset="0.778" stop-color="#c61507"/><stop offset="0.833" stop-color="#b80e02"/><stop offset="0.889" stop-color="#aa0800"/><stop offset="0.944" stop-color="#9c0400"/><stop offset="1.000" stop-color="#8e0100"/></linearGradient><linearGradient id="i159" gradientUnits="userSpaceOnUse" x1="784" y1="0" x2="1072" y2="0"><stop offset="0.000" stop-color="#00ffdf"/><stop offset="0.056" stop-color="#00ffdd"/><stop offset="0.111" stop-color="#00ffdb"/><stop offset="0.167" stop-color="#05ffd9"/><stop offset="0.222" stop-color="#49ffd6"/><stop offset="0.278" stop-color="#97ffd4"/><stop offset="0.333" stop-color="#f3ffd0"/><stop offset="0.389" stop-color="#ffb994"/><stop offset="0.444" stop-color="#ff8769"/><stop offset="0.500" stop-color="#ff664d"/><stop offset="0.556" stop-color="#ff4d38"/><stop offset="0.611" stop-color="#f13827"/><stop offset="0.667" stop-color="#e3281a"/><stop offset="0.722" stop-color="#d51c10"/><stop offset="0.778" stop-color="#c61309"/><stop offset="0.833" stop-color="#b80c03"/><stop offset="0.889" stop-color="#aa0700"/><stop offset="0.944" stop-color="#9c0300"/><stop offset="1.000" stop-color="#8e0000"/></linearGradient><linearGradient id="i160" gradientUnits="userSpaceOnUse" x1="784" y1="0" x2="1088" y2="0"><stop offset="0.000" stop-color="#00ffe9"/><stop offset="0.053" stop-color="#00ffe8"/><stop offset="0.105" stop-color="#00ffe6"/><stop offset="0.158" stop-color="#09ffe5"/><stop offset="0.211" stop-color="#50ffe3"/><stop offset="0.263" stop-color="#a2ffe1"/><stop offset="0.316" stop-color="#fffddc"/><stop offset="0.368" stop-color="#ffaf97"/><stop offset="0.421" stop-color="#ff806c"/><stop offset="0.474" stop-color="#ff604f"/><stop offset="0.526" stop-color="#ff493b"/><stop offset="0.579" stop-color="#f13429"/><stop offset="0.632" stop-color="#e3251c"/><stop offset="0.684" stop-color="#d51a12"/><stop offset="0.737" stop-color="#c6110a"/><stop offset="0.789" stop-color="#b80a05"/><stop offset="0.842" stop-color="#aa0501"/><stop offset="0.895" stop-color="#9c0200"/><stop offset="0.947" stop-color="#8e0000"/><stop offset="1.000" stop-color="#7f0000"/></linearGradient><linearGradient id="i161" gradientUnits="userSpaceOnUse" x1="784" y1="0" x2="1088" y2="0"><stop offset="0.000" stop-color="#00fff3"/><stop offset="0.053" stop-color="#00fff2"/><stop offset="0.105" stop-color="#00fff2"/><stop offset="0.158" stop-color="#0efff1"/><stop offset="0.211" stop-color="#57fff0"/><stop offset="0.263" stop-color="#adffef"/><stop offset="0.316" stop-color="#ffeede"/><stop offset="0.368" stop-color="#ffa599"/><stop offset="0.421" stop-color="#ff786f"/><stop offset="0.474" stop-color="#ff5a52"/><stop offset="0.526" stop-color="#ff443d"/><stop offset="0.579" stop-color="#f1302b"/><stop offset="0.632" stop-color="#e3221d"/><stop offset="0.684" stop-color="#d41713"/><stop offset="0.737" stop-color="#c60f0c"/><stop offset="0.789" stop-color="#b80906"/><stop offset="0.842" stop-color="#aa0402"/><stop offset="0.895" stop-color="#9c0000"/><stop offset="0.947" stop-color="#8e0000"/><stop offset="1.000" stop-color="#7f0000"/></linearGradient><linearGradient id="i162" gradientUnits="userSpaceOnUse" x1="784" y1="0" x2="1088" y2="0"><stop offset="0.000" stop-color="#00fffe"/><stop offset="0.053" stop-color="#00fffe"/><stop offset="0.105" stop-color="#00fffe"/><stop offset="0.158" stop-color="#13fffe"/><stop offset="0.211" stop-color="#5ffffe"/><stop offset="0.263" stop-color="#b8fffe"/><stop offset="0.316" stop-color="#ffe0e0"/><stop offset="0.368" stop-color="#ff9c9c"/><stop offset="0.421" stop-color="#ff7171"/><stop offset="0.474" stop-color="#ff5454"/><stop offset="0.526" stop-color="#ff3f3f"/><stop offset="0.579" stop-color="#f12c2d"/><stop offset="0.632" stop-color="#e21f1f"/><stop offset="0.684" stop-color="#d41415"/><stop offset="0.737" stop-color="#c60d0d"/><stop offset="0.789" stop-color="#b80707"/><stop offset="0.842" stop-color="#aa0203"/><stop offset="0.895" stop-color="#9c0000"/><stop offset="0.947" stop-color="#8d0000"/><stop offset="1.000" stop-color="#7f0000"/></linearGradient><linearGradient id="i163" gradientUnits="userSpaceOnUse" x1="784" y1="0" x2="1088" y2="0"><stop offset="0.000" stop-color="#00f5ff"/><stop offset="0.053" stop-color="#00f4ff"/><stop offset="0.105" stop-color="#00f3ff"/><stop offset="0.158" stop-color="#17f2ff"/><stop offset="0.211" stop-color="#62f1ff"/><stop offset="0.263" stop-color="#b9f0ff"/><stop offset="0.316" stop-color="#ffd3e2"/><stop offset="0.368" stop-color="#ff929e"/><stop offset="0.421" stop-color="#ff6a74"/><stop offset="0.474" stop-color="#ff4f57"/><stop offset="0.526" stop-color="#fe3a41"/><stop offset="0.579" stop-color="#f0292f"/><stop offset="0.632" stop-color="#e21c21"/><stop offset="0.684" stop-color="#d41216"/><stop offset="0.737" stop-color="#c60b0e"/><stop offset="0.789" stop-color="#b80508"/><stop offset="0.842" stop-color="#aa0104"/><stop offset="0.895" stop-color="#9b0000"/><stop offset="0.947" stop-color="#8d0000"/><stop offset="1.000" stop-color="#7f0000"/></linearGradient><linearGradient id="i164" gradientUnits="userSpaceOnUse" x1="784" y1="0" x2="1088" y2="0"><stop offset="0.000" stop-color="#00eaff"/><stop offset="0.053" stop-color="#00e9ff"/><stop offset="0.105" stop-color="#00e7ff"/><stop offset="0.158" stop-color="#1be6ff"/><stop offset="0.211" stop-color="#65e4ff"/><stop offset="0.263" stop-color="#bae1ff"/><stop offset="0.316" stop-color="#ffc6e3"/><stop offset="0.368" stop-color="#ff8aa0"/><stop offset="0.421" stop-color="#ff6376"/><stop offset="0.474" stop-color="#ff4959"/><stop offset="0.526" stop-color="#fe3643"/><stop offset="0.579" stop-color="#f02530"/><stop offset="0.632" stop-color="#e21922"/><stop offset="0.684" stop-color="#d40f18"/><stop offset="0.737" stop-color="#c60810"/><stop offset="0.789" stop-color="#b80309"/><stop offset="0.842" stop-color="#a90005"/><stop offset="0.895" stop-color="#9b0001"/><stop offset="0.947" stop-color="#8d0000"/><stop offset="1.000" stop-color="#7f0000"/></linearGradient><linearGradient id="i165" gradientUnits="userSpaceOnUse" x1="784" y1="0" x2="1072" y2="0"><stop offset="0.000" stop-color="#00e0ff"/><stop offset="0.056" stop-color="#00deff"/><stop offset="0.111" stop-color="#00dcff"/><stop offset="0.167" stop-color="#1fd9ff"/><stop offset="0.222" stop-color="#67d6ff"/><stop offset="0.278" stop-color="#bad3ff"/><stop offset="0.333" stop-color="#ffbae5"/><stop offset="0.389" stop-color="#ff81a2"/><stop offset="0.444" stop-color="#ff5d78"/><stop offset="0.500" stop-color="#ff445b"/><stop offset="0.556" stop-color="#fe3145"/><stop offset="0.611" stop-color="#f02132"/><stop offset="0.667" stop-color="#e21624"/><stop offset="0.722" stop-color="#d40d19"/><stop offset="0.778" stop-color="#c50611"/><stop offset="0.833" stop-color="#b7010a"/><stop offset="0.889" stop-color="#a90006"/><stop offset="0.944" stop-color="#9b0002"/><stop offset="1.000" stop-color="#8d0000"/></linearGradient><linearGradient id="i166" gradientUnits="userSpaceOnUse" x1="784" y1="0" x2="1072" y2="0"><stop offset="0.000" stop-color="#00d6ff"/><stop offset="0.056" stop-color="#00d4ff"/><stop offset="0.111" stop-color="#00d1ff"/><stop offset="0.167" stop-color="#23ceff"/><stop offset="0.222" stop-color="#69caff"/><stop offset="0.278" stop-color="#bbc6ff"/><stop offset="0.333" stop-color="#ffaee6"/><stop offset="0.389" stop-color="#ff78a5"/><stop offset="0.444" stop-color="#ff567b"/><stop offset="0.500" stop-color="#ff3f5d"/><stop offset="0.556" stop-color="#fd2d47"/><stop offset="0.611" stop-color="#ef1e34"/><stop offset="0.667" stop-color="#e11326"/><stop offset="0.722" stop-color="#d30a1b"/><stop offset="0.778" stop-color="#c50412"/><stop offset="0.833" stop-color="#b7000c"/><stop offset="0.889" stop-color="#a90006"/><stop offset="0.944" stop-color="#9b0003"/><stop offset="1.000" stop-color="#8d0000"/></linearGradient><linearGradient id="i167" gradientUnits="userSpaceOnUse" x1="784" y1="0" x2="1056" y2="0"><stop offset="0.000" stop-color="#00cdff"/><stop offset="0.059" stop-color="#00caff"/><stop offset="0.118" stop-color="#00c6ff"/><stop offset="0.176" stop-color="#26c2ff"/><stop offset="0.235" stop-color="#6cbeff"/><stop offset="0.294" stop-color="#bcb9ff"/><stop offset="0.353" stop-color="#ffa2e8"/><stop offset="0.412" stop-color="#ff70a7"/><stop offset="0.471" stop-color="#ff507d"/><stop offset="0.529" stop-color="#ff3960"/><stop offset="0.588" stop-color="#fc2849"/><stop offset="0.647" stop-color="#ef1a36"/><stop offset="0.706" stop-color="#e11027"/><stop offset="0.765" stop-color="#d3081c"/><stop offset="0.824" stop-color="#c50213"/><stop offset="0.882" stop-color="#b7000d"/><stop offset="0.941" stop-color="#a90007"/><stop offset="1.000" stop-color="#9b0004"/></linearGradient><linearGradient id="i168" gradientUnits="userSpaceOnUse" x1="784" y1="0" x2="1056" y2="0"><stop offset="0.000" stop-color="#00c3ff"/><stop offset="0.059" stop-color="#00c0ff"/><stop offset="0.118" stop-color="#00bcff"/><stop offset="0.176" stop-color="#29b7ff"/><stop offset="0.235" stop-color="#6eb2ff"/><stop offset="0.294" stop-color="#bcacff"/><stop offset="0.353" stop-color="#ff97e9"/><stop offset="0.412" stop-color="#ff68a9"/><stop offset="0.471" stop-color="#ff4a7f"/><stop offset="0.529" stop-color="#ff3462"/><stop offset="0.588" stop-color="#fc244b"/><stop offset="0.647" stop-color="#ee1737"/><stop offset="0.706" stop-color="#e00d29"/><stop offset="0.765" stop-color="#d2061d"/><stop offset="0.824" stop-color="#c40014"/><stop offset="0.882" stop-color="#b6000e"/><stop offset="0.941" stop-color="#a80008"/><stop offset="1.000" stop-color="#9a0004"/></linearGradient><linearGradient id="i169" gradientUnits="userSpaceOnUse" x1="784" y1="0" x2="1040" y2="0"><stop offset="0.000" stop-color="#00baff"/><stop offset="0.062" stop-color="#00b6ff"/><stop offset="0.125" stop-color="#00b2ff"/><stop offset="0.188" stop-color="#2cadff"/><stop offset="0.250" stop-color="#70a7ff"/><stop offset="0.312" stop-color="#bda1ff"/><stop offset="0.375" stop-color="#ff8dea"/><stop offset="0.438" stop-color="#ff61ab"/><stop offset="0.500" stop-color="#ff4481"/><stop offset="0.562" stop-color="#ff2f64"/><stop offset="0.625" stop-color="#fb204d"/><stop offset="0.688" stop-color="#ed1339"/><stop offset="0.750" stop-color="#e00a2a"/><stop offset="0.812" stop-color="#d2031f"/><stop offset="0.875" stop-color="#c40016"/><stop offset="0.938" stop-color="#b6000f"/><stop offset="1.000" stop-color="#a80009"/></linearGradient><linearGradient id="i170" gradientUnits="userSpaceOnUse" x1="784" y1="0" x2="1040" y2="0"><stop offset="0.000" stop-color="#00b2ff"/><stop offset="0.062" stop-color="#00adff"/><stop offset="0.125" stop-color="#00a8ff"/><stop offset="0.188" stop-color="#30a3ff"/><stop offset="0.250" stop-color="#729dff"/><stop offset="0.312" stop-color="#bd95ff"/><stop offset="0.375" stop-color="#ff83ec"/><stop offset="0.438" stop-color="#ff59ad"/><stop offset="0.500" stop-color="#ff3e83"/><stop offset="0.562" stop-color="#ff2b66"/><stop offset="0.625" stop-color="#fa1c4e"/><stop offset="0.688" stop-color="#ed103b"/><stop offset="0.750" stop-color="#df072b"/><stop offset="0.812" stop-color="#d10120"/><stop offset="0.875" stop-color="#c30017"/><stop offset="0.938" stop-color="#b50010"/><stop offset="1.000" stop-color="#a7000a"/></linearGradient><linearGradient id="i171" gradientUnits="userSpaceOnUse" x1="784" y1="0" x2="1024" y2="0"><stop offset="0.000" stop-color="#00a9ff"/><stop offset="0.067" stop-color="#00a4ff"/><stop offset="0.133" stop-color="#009fff"/><stop offset="0.200" stop-color="#3399ff"/><stop offset="0.267" stop-color="#7392ff"/><stop offset="0.333" stop-color="#bd8bff"/><stop offset="0.400" stop-color="#ff79ed"/><stop offset="0.467" stop-color="#ff52ae"/><stop offset="0.533" stop-color="#ff3885"/><stop offset="0.600" stop-color="#ff2668"/><stop offset="0.667" stop-color="#f91850"/><stop offset="0.733" stop-color="#ec0d3c"/><stop offset="0.800" stop-color="#de052d"/><stop offset="0.867" stop-color="#d10021"/><stop offset="0.933" stop-color="#c30018"/><stop offset="1.000" stop-color="#b50011"/></linearGradient><linearGradient id="i172" gradientUnits="userSpaceOnUse" x1="784" y1="0" x2="1024" y2="0"><stop offset="0.000" stop-color="#00a1ff"/><stop offset="0.067" stop-color="#009cff"/><stop offset="0.133" stop-color="#0096ff"/><stop offset="0.200" stop-color="#3590ff"/><stop offset="0.267" stop-color="#7588ff"/><stop offset="0.333" stop-color="#be80ff"/><stop offset="0.400" stop-color="#ff6fee"/><stop offset="0.467" stop-color="#ff4bb0"/><stop offset="0.533" stop-color="#ff3287"/><stop offset="0.600" stop-color="#ff216a"/><stop offset="0.667" stop-color="#f81452"/><stop offset="0.733" stop-color="#eb0a3e"/><stop offset="0.800" stop-color="#dd022e"/><stop offset="0.867" stop-color="#d00022"/><stop offset="0.933" stop-color="#c20019"/><stop offset="1.000" stop-color="#b40012"/></linearGradient><linearGradient id="i173" gradientUnits="userSpaceOnUse" x1="768" y1="0" x2="1024" y2="0"><stop offset="0.000" stop-color="#009eff"/><stop offset="0.062" stop-color="#0099ff"/><stop offset="0.125" stop-color="#0094ff"/><stop offset="0.188" stop-color="#008dff"/><stop offset="0.250" stop-color="#3887ff"/><stop offset="0.312" stop-color="#777fff"/><stop offset="0.375" stop-color="#be76ff"/><stop offset="0.438" stop-color="#ff66ef"/><stop offset="0.500" stop-color="#ff44b2"/><stop offset="0.562" stop-color="#ff2d89"/><stop offset="0.625" stop-color="#ff1d6c"/><stop offset="0.688" stop-color="#f71053"/><stop offset="0.750" stop-color="#ea063f"/><stop offset="0.812" stop-color="#dd002f"/><stop offset="0.875" stop-color="#cf0023"/><stop offset="0.938" stop-color="#c1001a"/><stop offset="1.000" stop-color="#b40013"/></linearGradient><linearGradient id="i174" gradientUnits="userSpaceOnUse" x1="768" y1="0" x2="1008" y2="0"><stop offset="0.000" stop-color="#0097ff"/><stop offset="0.067" stop-color="#0091ff"/><stop offset="0.133" stop-color="#008bff"/><stop offset="0.200" stop-color="#0485ff"/><stop offset="0.267" stop-color="#3b7eff"/><stop offset="0.333" stop-color="#7976ff"/><stop offset="0.400" stop-color="#bf6dff"/><stop offset="0.467" stop-color="#ff5df1"/><stop offset="0.533" stop-color="#ff3db4"/><stop offset="0.600" stop-color="#ff288b"/><stop offset="0.667" stop-color="#ff186e"/><stop offset="0.733" stop-color="#f60c54"/><stop offset="0.800" stop-color="#e90340"/><stop offset="0.867" stop-color="#dc0031"/><stop offset="0.933" stop-color="#ce0025"/><stop offset="1.000" stop-color="#c1001b"/></linearGradient><linearGradient id="i175" gradientUnits="userSpaceOnUse" x1="768" y1="0" x2="1008" y2="0"><stop offset="0.000" stop-color="#008fff"/><stop offset="0.067" stop-color="#008aff"/><stop offset="0.133" stop-color="#0084ff"/><stop offset="0.200" stop-color="#077dff"/><stop offset="0.267" stop-color="#3d75ff"/><stop offset="0.333" stop-color="#7a6dff"/><stop offset="0.400" stop-color="#bf64ff"/><stop offset="0.467" stop-color="#ff54f2"/><stop offset="0.533" stop-color="#ff36b5"/><stop offset="0.600" stop-color="#ff228d"/><stop offset="0.667" stop-color="#ff146f"/><stop offset="0.733" stop-color="#f50956"/><stop offset="0.800" stop-color="#e80042"/><stop offset="0.867" stop-color="#db0032"/><stop offset="0.933" stop-color="#ce0026"/><stop offset="1.000" stop-color="#c0001c"/></linearGradient><linearGradient id="i176" gradientUnits="userSpaceOnUse" x1="768" y1="0" x2="992" y2="0"><stop offset="0.000" stop-color="#0088ff"/><stop offset="0.071" stop-color="#0083ff"/><stop offset="0.143" stop-color="#007cff"/><stop offset="0.214" stop-color="#0a75ff"/><stop offset="0.286" stop-color="#406dff"/><stop offset="0.357" stop-color="#7c65ff"/><stop offset="0.429" stop-color="#bf5bff"/><stop offset="0.500" stop-color="#ff4cf3"/><stop offset="0.571" stop-color="#ff30b7"/><stop offset="0.643" stop-color="#ff1d8e"/><stop offset="0.714" stop-color="#ff1071"/><stop offset="0.786" stop-color="#f40557"/><stop offset="0.857" stop-color="#e70043"/><stop offset="0.929" stop-color="#da0033"/><stop offset="1.000" stop-color="#cd0027"/></linearGradient><linearGradient id="i177" gradientUnits="userSpaceOnUse" x1="768" y1="0" x2="992" y2="0"><stop offset="0.000" stop-color="#0081fd"/><stop offset="0.071" stop-color="#007bff"/><stop offset="0.143" stop-color="#0075ff"/><stop offset="0.214" stop-color="#0d6eff"/><stop offset="0.286" stop-color="#4265ff"/><stop offset="0.357" stop-color="#7d5cff"/><stop offset="0.429" stop-color="#c052ff"/><stop offset="0.500" stop-color="#ff44f4"/><stop offset="0.571" stop-color="#ff2ab9"/><stop offset="0.643" stop-color="#ff1890"/><stop offset="0.714" stop-color="#fe0b73"/><stop offset="0.786" stop-color="#f20258"/><stop offset="0.857" stop-color="#e60044"/><stop offset="0.929" stop-color="#d90034"/><stop offset="1.000" stop-color="#cc0028"/></linearGradient><linearGradient id="i178" gradientUnits="userSpaceOnUse" x1="768" y1="0" x2="976" y2="0"><stop offset="0.000" stop-color="#0079fc"/><stop offset="0.077" stop-color="#0075ff"/><stop offset="0.154" stop-color="#006eff"/><stop offset="0.231" stop-color="#1066ff"/><stop offset="0.308" stop-color="#455eff"/><stop offset="0.385" stop-color="#7f54ff"/><stop offset="0.462" stop-color="#c04aff"/><stop offset="0.538" stop-color="#ff3cf5"/><stop offset="0.615" stop-color="#ff24ba"/><stop offset="0.692" stop-color="#ff1392"/><stop offset="0.769" stop-color="#fd0774"/><stop offset="0.846" stop-color="#f10059"/><stop offset="0.923" stop-color="#e50045"/><stop offset="1.000" stop-color="#d80035"/></linearGradient><linearGradient id="i179" gradientUnits="userSpaceOnUse" x1="768" y1="0" x2="976" y2="0"><stop offset="0.000" stop-color="#0072fa"/><stop offset="0.077" stop-color="#006eff"/><stop offset="0.154" stop-color="#0067ff"/><stop offset="0.231" stop-color="#135fff"/><stop offset="0.308" stop-color="#4756ff"/><stop offset="0.385" stop-color="#804dff"/><stop offset="0.462" stop-color="#c042ff"/><stop offset="0.538" stop-color="#ff34f6"/><stop offset="0.615" stop-color="#ff1ebc"/><stop offset="0.692" stop-color="#ff0e94"/><stop offset="0.769" stop-color="#fb0375"/><stop offset="0.846" stop-color="#f0005a"/><stop offset="0.923" stop-color="#e30046"/><stop offset="1.000" stop-color="#d70036"/></linearGradient><linearGradient id="i180" gradientUnits="userSpaceOnUse" x1="768" y1="0" x2="976" y2="0"><stop offset="0.000" stop-color="#006bf9"/><stop offset="0.077" stop-color="#0067ff"/><stop offset="0.154" stop-color="#0060ff"/><stop offset="0.231" stop-color="#1658ff"/><stop offset="0.308" stop-color="#494fff"/><stop offset="0.385" stop-color="#8245ff"/><stop offset="0.462" stop-color="#c13aff"/><stop offset="0.538" stop-color="#ff2df7"/><stop offset="0.615" stop-color="#ff18bd"/><stop offset="0.692" stop-color="#ff0a95"/><stop offset="0.769" stop-color="#fa0076"/><stop offset="0.846" stop-color="#ee005b"/><stop offset="0.923" stop-color="#e20047"/><stop offset="1.000" stop-color="#d60037"/></linearGradient><linearGradient id="i181" gradientUnits="userSpaceOnUse" x1="768" y1="0" x2="960" y2="0"><stop offset="0.000" stop-color="#0065f7"/><stop offset="0.083" stop-color="#0061ff"/><stop offset="0.167" stop-color="#005aff"/><stop offset="0.250" stop-color="#1951ff"/><stop offset="0.333" stop-color="#4b48ff"/><stop offset="0.417" stop-color="#833eff"/><stop offset="0.500" stop-color="#c133ff"/><stop offset="0.583" stop-color="#ff25f8"/><stop offset="0.667" stop-color="#ff12bf"/><stop offset="0.750" stop-color="#ff0597"/><stop offset="0.833" stop-color="#f80076"/><stop offset="0.917" stop-color="#ed005c"/><stop offset="1.000" stop-color="#e10048"/></linearGradient><linearGradient id="i182" gradientUnits="userSpaceOnUse" x1="768" y1="0" x2="960" y2="0"><stop offset="0.000" stop-color="#005ef5"/><stop offset="0.083" stop-color="#005bff"/><stop offset="0.167" stop-color="#0053ff"/><stop offset="0.250" stop-color="#1c4bff"/><stop offset="0.333" stop-color="#4d42ff"/><stop offset="0.417" stop-color="#8437ff"/><stop offset="0.500" stop-color="#c12cff"/><stop offset="0.583" stop-color="#ff1ef8"/><stop offset="0.667" stop-color="#ff0dc0"/><stop offset="0.750" stop-color="#ff0098"/><stop offset="0.833" stop-color="#f60077"/><stop offset="0.917" stop-color="#eb005d"/><stop offset="1.000" stop-color="#df0049"/></linearGradient><linearGradient id="i183" gradientUnits="userSpaceOnUse" x1="768" y1="0" x2="944" y2="0"><stop offset="0.000" stop-color="#0058f3"/><stop offset="0.091" stop-color="#0054fd"/><stop offset="0.182" stop-color="#004dff"/><stop offset="0.273" stop-color="#1e44ff"/><stop offset="0.364" stop-color="#4f3bff"/><stop offset="0.455" stop-color="#8531ff"/><stop offset="0.545" stop-color="#c225ff"/><stop offset="0.636" stop-color="#ff18f9"/><stop offset="0.727" stop-color="#ff07c1"/><stop offset="0.818" stop-color="#fe009a"/><stop offset="0.909" stop-color="#f40078"/><stop offset="1.000" stop-color="#ea005e"/></linearGradient><linearGradient id="i184" gradientUnits="userSpaceOnUse" x1="768" y1="0" x2="944" y2="0"><stop offset="0.000" stop-color="#0052f2"/><stop offset="0.091" stop-color="#004efb"/><stop offset="0.182" stop-color="#0047ff"/><stop offset="0.273" stop-color="#213eff"/><stop offset="0.364" stop-color="#5135ff"/><stop offset="0.455" stop-color="#872aff"/><stop offset="0.545" stop-color="#c21eff"/><stop offset="0.636" stop-color="#ff11fa"/><stop offset="0.727" stop-color="#ff02c3"/><stop offset="0.818" stop-color="#fc009a"/><stop offset="0.909" stop-color="#f30078"/><stop offset="1.000" stop-color="#e8005f"/></linearGradient><linearGradient id="i185" gradientUnits="userSpaceOnUse" x1="768" y1="0" x2="928" y2="0"><stop offset="0.000" stop-color="#004cf0"/><stop offset="0.100" stop-color="#0048f9"/><stop offset="0.200" stop-color="#0041ff"/><stop offset="0.300" stop-color="#2338ff"/><stop offset="0.400" stop-color="#532fff"/><stop offset="0.500" stop-color="#8824ff"/><stop offset="0.600" stop-color="#c218ff"/><stop offset="0.700" stop-color="#ff0bfb"/><stop offset="0.800" stop-color="#ff00c4"/><stop offset="0.900" stop-color="#fa009a"/><stop offset="1.000" stop-color="#f10079"/></linearGradient><linearGradient id="i186" gradientUnits="userSpaceOnUse" x1="768" y1="0" x2="928" y2="0"><stop offset="0.000" stop-color="#0046ee"/><stop offset="0.100" stop-color="#0042f7"/><stop offset="0.200" stop-color="#003cff"/><stop offset="0.300" stop-color="#2532ff"/><stop offset="0.400" stop-color="#5529ff"/><stop offset="0.500" stop-color="#891eff"/><stop offset="0.600" stop-color="#c212ff"/><stop offset="0.700" stop-color="#ff04fc"/><stop offset="0.800" stop-color="#ff00c5"/><stop offset="0.900" stop-color="#f8009a"/><stop offset="1.000" stop-color="#ef0079"/></linearGradient><linearGradient id="i187" gradientUnits="userSpaceOnUse" x1="768" y1="0" x2="928" y2="0"><stop offset="0.000" stop-color="#0041ec"/><stop offset="0.100" stop-color="#003cf5"/><stop offset="0.200" stop-color="#0036fd"/><stop offset="0.300" stop-color="#282dff"/><stop offset="0.400" stop-color="#5723ff"/><stop offset="0.500" stop-color="#8a18ff"/><stop offset="0.600" stop-color="#c30cff"/><stop offset="0.700" stop-color="#ff00fd"/><stop offset="0.800" stop-color="#fe00c6"/><stop offset="0.900" stop-color="#f6009a"/><stop offset="1.000" stop-color="#ed007a"/></linearGradient><linearGradient id="i188" gradientUnits="userSpaceOnUse" x1="752" y1="0" x2="912" y2="0"><stop offset="0.000" stop-color="#003fe0"/><stop offset="0.100" stop-color="#003cea"/><stop offset="0.200" stop-color="#0036f3"/><stop offset="0.300" stop-color="#0030fb"/><stop offset="0.400" stop-color="#2a27ff"/><stop offset="0.500" stop-color="#581dff"/><stop offset="0.600" stop-color="#8b12ff"/><stop offset="0.700" stop-color="#c306ff"/><stop offset="0.800" stop-color="#ff00fd"/><stop offset="0.900" stop-color="#fc00c5"/><stop offset="1.000" stop-color="#f4009a"/></linearGradient><linearGradient id="i189" gradientUnits="userSpaceOnUse" x1="752" y1="0" x2="912" y2="0"><stop offset="0.000" stop-color="#003bde"/><stop offset="0.100" stop-color="#0036e8"/><stop offset="0.200" stop-color="#0031f1"/><stop offset="0.300" stop-color="#022af8"/><stop offset="0.400" stop-color="#2c22fe"/><stop offset="0.500" stop-color="#5a18ff"/><stop offset="0.600" stop-color="#8c0cff"/><stop offset="0.700" stop-color="#c300ff"/><stop offset="0.800" stop-color="#ff00fe"/><stop offset="0.900" stop-color="#f900c4"/><stop offset="1.000" stop-color="#f2009a"/></linearGradient><linearGradient id="i190" gradientUnits="userSpaceOnUse" x1="752" y1="0" x2="896" y2="0"><stop offset="0.000" stop-color="#0036dc"/><stop offset="0.111" stop-color="#0032e6"/><stop offset="0.222" stop-color="#002cef"/><stop offset="0.333" stop-color="#0525f6"/><stop offset="0.444" stop-color="#2e1cfc"/><stop offset="0.556" stop-color="#5c12ff"/><stop offset="0.667" stop-color="#8d07ff"/><stop offset="0.778" stop-color="#c300ff"/><stop offset="0.889" stop-color="#fc00fc"/><stop offset="1.000" stop-color="#f700c4"/></linearGradient><linearGradient id="i191" gradientUnits="userSpaceOnUse" x1="752" y1="0" x2="896" y2="0"><stop offset="0.000" stop-color="#0031da"/><stop offset="0.111" stop-color="#002de4"/><stop offset="0.222" stop-color="#0027ed"/><stop offset="0.333" stop-color="#0720f4"/><stop offset="0.444" stop-color="#2f17f9"/><stop offset="0.556" stop-color="#5c0dfd"/><stop offset="0.667" stop-color="#8d02fe"/><stop offset="0.778" stop-color="#c200fd"/><stop offset="0.889" stop-color="#f900fa"/><stop offset="1.000" stop-color="#f400c3"/></linearGradient><linearGradient id="i192" gradientUnits="userSpaceOnUse" x1="752" y1="0" x2="880" y2="0"><stop offset="0.000" stop-color="#002dd9"/><stop offset="0.125" stop-color="#0028e2"/><stop offset="0.250" stop-color="#0022ea"/><stop offset="0.375" stop-color="#091bf1"/><stop offset="0.500" stop-color="#3112f7"/><stop offset="0.625" stop-color="#5d08fa"/><stop offset="0.750" stop-color="#8d00fb"/><stop offset="0.875" stop-color="#c000fa"/><stop offset="1.000" stop-color="#f600f7"/></linearGradient><linearGradient id="i193" gradientUnits="userSpaceOnUse" x1="752" y1="0" x2="880" y2="0"><stop offset="0.000" stop-color="#0029d7"/><stop offset="0.125" stop-color="#0024e0"/><stop offset="0.250" stop-color="#001ee8"/><stop offset="0.375" stop-color="#0c16ef"/><stop offset="0.500" stop-color="#320df4"/><stop offset="0.625" stop-color="#5d03f8"/><stop offset="0.750" stop-color="#8c00f9"/><stop offset="0.875" stop-color="#be00f8"/><stop offset="1.000" stop-color="#f300f5"/></linearGradient><linearGradient id="i194" gradientUnits="userSpaceOnUse" x1="752" y1="0" x2="880" y2="0"><stop offset="0.000" stop-color="#0025d5"/><stop offset="0.125" stop-color="#0020de"/><stop offset="0.250" stop-color="#0019e6"/><stop offset="0.375" stop-color="#0e11ed"/><stop offset="0.500" stop-color="#3409f2"/><stop offset="0.625" stop-color="#5e00f5"/><stop offset="0.750" stop-color="#8c00f6"/><stop offset="0.875" stop-color="#bc00f5"/><stop offset="1.000" stop-color="#f000f2"/></linearGradient><linearGradient id="i195" gradientUnits="userSpaceOnUse" x1="752" y1="0" x2="864" y2="0"><stop offset="0.000" stop-color="#0021d3"/><stop offset="0.143" stop-color="#001bdc"/><stop offset="0.286" stop-color="#0015e4"/><stop offset="0.429" stop-color="#100dea"/><stop offset="0.571" stop-color="#3504ef"/><stop offset="0.714" stop-color="#5e00f2"/><stop offset="0.857" stop-color="#8b00f3"/><stop offset="1.000" stop-color="#bb00f3"/></linearGradient><linearGradient id="i196" gradientUnits="userSpaceOnUse" x1="752" y1="0" x2="864" y2="0"><stop offset="0.000" stop-color="#001dd1"/><stop offset="0.143" stop-color="#0017da"/><stop offset="0.286" stop-color="#0011e1"/><stop offset="0.429" stop-color="#1109e8"/><stop offset="0.571" stop-color="#3600ed"/><stop offset="0.714" stop-color="#5e00f0"/><stop offset="0.857" stop-color="#8a00f1"/><stop offset="1.000" stop-color="#b900f0"/></linearGradient><linearGradient id="i197" gradientUnits="userSpaceOnUse" x1="752" y1="0" x2="848" y2="0"><stop offset="0.000" stop-color="#0019cf"/><stop offset="0.167" stop-color="#0014d7"/><stop offset="0.333" stop-color="#000ddf"/><stop offset="0.500" stop-color="#1305e5"/><stop offset="0.667" stop-color="#3700ea"/><stop offset="0.833" stop-color="#5f00ed"/><stop offset="1.000" stop-color="#8900ee"/></linearGradient><linearGradient id="i198" gradientUnits="userSpaceOnUse" x1="752" y1="0" x2="848" y2="0"><stop offset="0.000" stop-color="#0016cd"/><stop offset="0.167" stop-color="#0010d5"/><stop offset="0.333" stop-color="#0009dd"/><stop offset="0.500" stop-color="#1501e3"/><stop offset="0.667" stop-color="#3800e7"/><stop offset="0.833" stop-color="#5f00ea"/><stop offset="1.000" stop-color="#8900eb"/></linearGradient><linearGradient id="i199" gradientUnits="userSpaceOnUse" x1="752" y1="0" x2="832" y2="0"><stop offset="0.000" stop-color="#0012cb"/><stop offset="0.200" stop-color="#000cd3"/><stop offset="0.400" stop-color="#0005da"/><stop offset="0.600" stop-color="#1700e0"/><stop offset="0.800" stop-color="#3900e5"/><stop offset="1.000" stop-color="#5f00e8"/></linearGradient><linearGradient id="i200" gradientUnits="userSpaceOnUse" x1="752" y1="0" x2="832" y2="0"><stop offset="0.000" stop-color="#000fc8"/><stop offset="0.200" stop-color="#0009d1"/><stop offset="0.400" stop-color="#0002d8"/><stop offset="0.600" stop-color="#1800de"/><stop offset="0.800" stop-color="#3a00e2"/><stop offset="1.000" stop-color="#5f00e5"/></linearGradient><linearGradient id="i201" gradientUnits="userSpaceOnUse" x1="752" y1="0" x2="832" y2="0"><stop offset="0.000" stop-color="#000cc6"/><stop offset="0.200" stop-color="#0006cf"/><stop offset="0.400" stop-color="#0000d6"/><stop offset="0.600" stop-color="#1a00db"/><stop offset="0.800" stop-color="#3b00e0"/><stop offset="1.000" stop-color="#5f00e3"/></linearGradient><linearGradient id="i202" gradientUnits="userSpaceOnUse" x1="752" y1="0" x2="832" y2="0"><stop offset="0.000" stop-color="#0009c4"/><stop offset="0.200" stop-color="#0003cc"/><stop offset="0.400" stop-color="#0000d3"/><stop offset="0.600" stop-color="#1b00d9"/><stop offset="0.800" stop-color="#3b00dd"/><stop offset="1.000" stop-color="#5f00e0"/></linearGradient></defs>
<g clip-path="url(#cHs)" shape-rendering="geometricPrecision"><g filter="url(#bl)"><rect x="704" y="29" width="96" height="3" fill="url(#o0)"/><rect x="704" y="32" width="96" height="3" fill="url(#o1)"/><rect x="704" y="35" width="96" height="3" fill="url(#o2)"/><rect x="688" y="38" width="128" height="3" fill="url(#o3)"/><rect x="688" y="41" width="128" height="3" fill="url(#o4)"/><rect x="688" y="44" width="144" height="3" fill="url(#o5)"/><rect x="688" y="47" width="144" height="3" fill="url(#o6)"/><rect x="688" y="50" width="160" height="3" fill="url(#o7)"/><rect x="688" y="53" width="160" height="3" fill="url(#o8)"/><rect x="672" y="56" width="176" height="3" fill="url(#o9)"/><rect x="672" y="59" width="192" height="3" fill="url(#o10)"/><rect x="672" y="62" width="192" height="3" fill="url(#o11)"/><rect x="672" y="65" width="192" height="3" fill="url(#o12)"/><rect x="672" y="68" width="208" height="3" fill="url(#o13)"/><rect x="672" y="71" width="208" height="3" fill="url(#o14)"/><rect x="672" y="74" width="208" height="3" fill="url(#o15)"/><rect x="672" y="77" width="208" height="3" fill="url(#o16)"/><rect x="672" y="80" width="224" height="3" fill="url(#o17)"/><rect x="672" y="83" width="224" height="3" fill="url(#o18)"/><rect x="672" y="86" width="224" height="3" fill="url(#o19)"/><rect x="672" y="89" width="224" height="3" fill="url(#o20)"/><rect x="672" y="92" width="240" height="3" fill="url(#o21)"/><rect x="672" y="95" width="240" height="3" fill="url(#o22)"/><rect x="672" y="98" width="240" height="3" fill="url(#o23)"/><rect x="672" y="101" width="240" height="3" fill="url(#o24)"/><rect x="672" y="104" width="256" height="3" fill="url(#o25)"/><rect x="672" y="107" width="256" height="3" fill="url(#o26)"/><rect x="672" y="110" width="256" height="3" fill="url(#o27)"/><rect x="672" y="113" width="256" height="3" fill="url(#o28)"/><rect x="672" y="116" width="272" height="3" fill="url(#o29)"/><rect x="672" y="119" width="272" height="3" fill="url(#o30)"/><rect x="672" y="122" width="272" height="3" fill="url(#o31)"/><rect x="672" y="125" width="272" height="3" fill="url(#o32)"/><rect x="672" y="128" width="288" height="3" fill="url(#o33)"/><rect x="672" y="131" width="288" height="3" fill="url(#o34)"/><rect x="672" y="134" width="288" height="3" fill="url(#o35)"/><rect x="672" y="137" width="288" height="3" fill="url(#o36)"/><rect x="672" y="140" width="304" height="3" fill="url(#o37)"/><rect x="672" y="143" width="304" height="3" fill="url(#o38)"/><rect x="672" y="146" width="304" height="3" fill="url(#o39)"/><rect x="672" y="149" width="304" height="3" fill="url(#o40)"/><rect x="672" y="152" width="320" height="3" fill="url(#o41)"/><rect x="672" y="155" width="320" height="3" fill="url(#o42)"/><rect x="672" y="158" width="320" height="3" fill="url(#o43)"/><rect x="672" y="161" width="320" height="3" fill="url(#o44)"/><rect x="672" y="164" width="336" height="3" fill="url(#o45)"/><rect x="672" y="167" width="336" height="3" fill="url(#o46)"/><rect x="672" y="170" width="336" height="3" fill="url(#o47)"/><rect x="672" y="173" width="336" height="3" fill="url(#o48)"/><rect x="672" y="176" width="352" height="3" fill="url(#o49)"/><rect x="672" y="179" width="352" height="3" fill="url(#o50)"/><rect x="672" y="182" width="352" height="3" fill="url(#o51)"/><rect x="672" y="185" width="352" height="3" fill="url(#o52)"/><rect x="672" y="188" width="368" height="3" fill="url(#o53)"/><rect x="672" y="191" width="368" height="3" fill="url(#o54)"/><rect x="672" y="194" width="368" height="3" fill="url(#o55)"/><rect x="672" y="197" width="368" height="3" fill="url(#o56)"/><rect x="672" y="200" width="368" height="3" fill="url(#o57)"/><rect x="672" y="203" width="384" height="3" fill="url(#o58)"/><rect x="672" y="206" width="384" height="3" fill="url(#o59)"/><rect x="672" y="209" width="384" height="3" fill="url(#o60)"/><rect x="672" y="212" width="384" height="3" fill="url(#o61)"/><rect x="672" y="215" width="400" height="3" fill="url(#o62)"/><rect x="672" y="218" width="400" height="3" fill="url(#o63)"/><rect x="688" y="221" width="384" height="3" fill="url(#o64)"/><rect x="688" y="224" width="384" height="3" fill="url(#o65)"/><rect x="688" y="227" width="400" height="3" fill="url(#o66)"/><rect x="688" y="230" width="400" height="3" fill="url(#o67)"/><rect x="688" y="233" width="400" height="3" fill="url(#o68)"/><rect x="688" y="236" width="400" height="3" fill="url(#o69)"/><rect x="688" y="239" width="416" height="3" fill="url(#o70)"/><rect x="688" y="242" width="416" height="3" fill="url(#o71)"/><rect x="688" y="245" width="416" height="3" fill="url(#o72)"/><rect x="688" y="248" width="416" height="3" fill="url(#o73)"/><rect x="688" y="251" width="432" height="3" fill="url(#o74)"/><rect x="688" y="254" width="432" height="3" fill="url(#o75)"/><rect x="688" y="257" width="432" height="3" fill="url(#o76)"/><rect x="688" y="260" width="432" height="3" fill="url(#o77)"/><rect x="688" y="263" width="432" height="3" fill="url(#o78)"/><rect x="688" y="266" width="448" height="3" fill="url(#o79)"/><rect x="688" y="269" width="448" height="3" fill="url(#o80)"/><rect x="688" y="272" width="448" height="3" fill="url(#o81)"/><rect x="688" y="275" width="448" height="3" fill="url(#o82)"/><rect x="688" y="278" width="448" height="3" fill="url(#o83)"/><rect x="688" y="281" width="448" height="3" fill="url(#o84)"/><rect x="704" y="284" width="416" height="3" fill="url(#o85)"/><rect x="704" y="287" width="416" height="3" fill="url(#o86)"/><rect x="704" y="290" width="400" height="3" fill="url(#o87)"/><rect x="704" y="293" width="400" height="3" fill="url(#o88)"/><rect x="704" y="296" width="384" height="3" fill="url(#o89)"/><rect x="704" y="299" width="384" height="3" fill="url(#o90)"/><rect x="704" y="302" width="368" height="3" fill="url(#o91)"/><rect x="704" y="305" width="368" height="3" fill="url(#o92)"/><rect x="704" y="308" width="352" height="3" fill="url(#o93)"/><rect x="704" y="311" width="352" height="3" fill="url(#o94)"/><rect x="704" y="314" width="336" height="3" fill="url(#o95)"/><rect x="704" y="317" width="336" height="3" fill="url(#o96)"/><rect x="704" y="320" width="320" height="3" fill="url(#o97)"/><rect x="704" y="323" width="320" height="3" fill="url(#o98)"/><rect x="704" y="326" width="304" height="3" fill="url(#o99)"/><rect x="720" y="329" width="288" height="3" fill="url(#o100)"/><rect x="720" y="332" width="272" height="3" fill="url(#o101)"/><rect x="720" y="335" width="272" height="3" fill="url(#o102)"/><rect x="720" y="338" width="256" height="3" fill="url(#o103)"/><rect x="720" y="341" width="256" height="3" fill="url(#o104)"/><rect x="720" y="344" width="240" height="3" fill="url(#o105)"/><rect x="720" y="347" width="224" height="3" fill="url(#o106)"/><rect x="720" y="350" width="224" height="3" fill="url(#o107)"/><rect x="720" y="353" width="208" height="3" fill="url(#o108)"/><rect x="720" y="356" width="208" height="3" fill="url(#o109)"/><rect x="736" y="359" width="176" height="3" fill="url(#o110)"/><rect x="736" y="362" width="176" height="3" fill="url(#o111)"/><rect x="736" y="365" width="160" height="3" fill="url(#o112)"/><rect x="736" y="368" width="160" height="3" fill="url(#o113)"/><rect x="736" y="371" width="144" height="3" fill="url(#o114)"/><rect x="736" y="374" width="144" height="3" fill="url(#o115)"/><rect x="736" y="377" width="128" height="3" fill="url(#o116)"/><rect x="752" y="380" width="112" height="3" fill="url(#o117)"/><rect x="752" y="383" width="96" height="3" fill="url(#o118)"/><rect x="752" y="386" width="96" height="3" fill="url(#o119)"/><rect x="752" y="389" width="96" height="3" fill="url(#o120)"/><rect x="752" y="392" width="96" height="3" fill="url(#o121)"/></g></g>
<g clip-path="url(#cTr)" shape-rendering="geometricPrecision"><g filter="url(#bl)"><rect x="832" y="129" width="80" height="3" fill="url(#i122)"/><rect x="832" y="132" width="80" height="3" fill="url(#i123)"/><rect x="832" y="135" width="80" height="3" fill="url(#i124)"/><rect x="832" y="138" width="80" height="3" fill="url(#i125)"/><rect x="832" y="141" width="96" height="3" fill="url(#i126)"/><rect x="832" y="144" width="96" height="3" fill="url(#i127)"/><rect x="816" y="147" width="112" height="3" fill="url(#i128)"/><rect x="816" y="150" width="128" height="3" fill="url(#i129)"/><rect x="816" y="153" width="128" height="3" fill="url(#i130)"/><rect x="816" y="156" width="128" height="3" fill="url(#i131)"/><rect x="816" y="159" width="128" height="3" fill="url(#i132)"/><rect x="816" y="162" width="144" height="3" fill="url(#i133)"/><rect x="816" y="165" width="144" height="3" fill="url(#i134)"/><rect x="816" y="168" width="144" height="3" fill="url(#i135)"/><rect x="816" y="171" width="160" height="3" fill="url(#i136)"/><rect x="816" y="174" width="160" height="3" fill="url(#i137)"/><rect x="816" y="177" width="160" height="3" fill="url(#i138)"/><rect x="816" y="180" width="176" height="3" fill="url(#i139)"/><rect x="816" y="183" width="176" height="3" fill="url(#i140)"/><rect x="816" y="186" width="176" height="3" fill="url(#i141)"/><rect x="816" y="189" width="176" height="3" fill="url(#i142)"/><rect x="800" y="192" width="208" height="3" fill="url(#i143)"/><rect x="800" y="195" width="208" height="3" fill="url(#i144)"/><rect x="800" y="198" width="208" height="3" fill="url(#i145)"/><rect x="800" y="201" width="224" height="3" fill="url(#i146)"/><rect x="800" y="204" width="224" height="3" fill="url(#i147)"/><rect x="800" y="207" width="224" height="3" fill="url(#i148)"/><rect x="800" y="210" width="240" height="3" fill="url(#i149)"/><rect x="800" y="213" width="240" height="3" fill="url(#i150)"/><rect x="800" y="216" width="240" height="3" fill="url(#i151)"/><rect x="800" y="219" width="240" height="3" fill="url(#i152)"/><rect x="800" y="222" width="256" height="3" fill="url(#i153)"/><rect x="800" y="225" width="256" height="3" fill="url(#i154)"/><rect x="800" y="228" width="256" height="3" fill="url(#i155)"/><rect x="800" y="231" width="272" height="3" fill="url(#i156)"/><rect x="800" y="234" width="272" height="3" fill="url(#i157)"/><rect x="784" y="237" width="288" height="3" fill="url(#i158)"/><rect x="784" y="240" width="288" height="3" fill="url(#i159)"/><rect x="784" y="243" width="304" height="3" fill="url(#i160)"/><rect x="784" y="246" width="304" height="3" fill="url(#i161)"/><rect x="784" y="249" width="304" height="3" fill="url(#i162)"/><rect x="784" y="252" width="304" height="3" fill="url(#i163)"/><rect x="784" y="255" width="304" height="3" fill="url(#i164)"/><rect x="784" y="258" width="288" height="3" fill="url(#i165)"/><rect x="784" y="261" width="288" height="3" fill="url(#i166)"/><rect x="784" y="264" width="272" height="3" fill="url(#i167)"/><rect x="784" y="267" width="272" height="3" fill="url(#i168)"/><rect x="784" y="270" width="256" height="3" fill="url(#i169)"/><rect x="784" y="273" width="256" height="3" fill="url(#i170)"/><rect x="784" y="276" width="240" height="3" fill="url(#i171)"/><rect x="784" y="279" width="240" height="3" fill="url(#i172)"/><rect x="768" y="282" width="256" height="3" fill="url(#i173)"/><rect x="768" y="285" width="240" height="3" fill="url(#i174)"/><rect x="768" y="288" width="240" height="3" fill="url(#i175)"/><rect x="768" y="291" width="224" height="3" fill="url(#i176)"/><rect x="768" y="294" width="224" height="3" fill="url(#i177)"/><rect x="768" y="297" width="208" height="3" fill="url(#i178)"/><rect x="768" y="300" width="208" height="3" fill="url(#i179)"/><rect x="768" y="303" width="208" height="3" fill="url(#i180)"/><rect x="768" y="306" width="192" height="3" fill="url(#i181)"/><rect x="768" y="309" width="192" height="3" fill="url(#i182)"/><rect x="768" y="312" width="176" height="3" fill="url(#i183)"/><rect x="768" y="315" width="176" height="3" fill="url(#i184)"/><rect x="768" y="318" width="160" height="3" fill="url(#i185)"/><rect x="768" y="321" width="160" height="3" fill="url(#i186)"/><rect x="768" y="324" width="160" height="3" fill="url(#i187)"/><rect x="752" y="327" width="160" height="3" fill="url(#i188)"/><rect x="752" y="330" width="160" height="3" fill="url(#i189)"/><rect x="752" y="333" width="144" height="3" fill="url(#i190)"/><rect x="752" y="336" width="144" height="3" fill="url(#i191)"/><rect x="752" y="339" width="128" height="3" fill="url(#i192)"/><rect x="752" y="342" width="128" height="3" fill="url(#i193)"/><rect x="752" y="345" width="128" height="3" fill="url(#i194)"/><rect x="752" y="348" width="112" height="3" fill="url(#i195)"/><rect x="752" y="351" width="112" height="3" fill="url(#i196)"/><rect x="752" y="354" width="96" height="3" fill="url(#i197)"/><rect x="752" y="357" width="96" height="3" fill="url(#i198)"/><rect x="752" y="360" width="80" height="3" fill="url(#i199)"/><rect x="752" y="363" width="80" height="3" fill="url(#i200)"/><rect x="752" y="366" width="80" height="3" fill="url(#i201)"/><rect x="752" y="369" width="80" height="3" fill="url(#i202)"/></g></g>
<g>
<rect x="903.5" y="244.5" width="11" height="11" fill="none" stroke="#fff" stroke-width="1.05"/>
<rect x="940.5" y="244.5" width="11" height="11" fill="none" stroke="#fff" stroke-width="1.05"/>
<rect x="972.5" y="244.5" width="11" height="11" fill="none" stroke="#fff" stroke-width="1.05"/>
<rect x="1007.5" y="244.5" width="11" height="11" fill="none" stroke="#fff" stroke-width="1.05"/>
<rect x="1045.5" y="244.5" width="11" height="11" fill="none" stroke="#fff" stroke-width="1.05"/>
<rect x="868.5" y="221.5" width="11" height="11" fill="none" stroke="#fff" stroke-width="1.05"/>
<rect x="866.5" y="199.5" width="11" height="11" fill="none" stroke="#fff" stroke-width="1.05"/>
<rect x="865.5" y="176.5" width="11" height="11" fill="none" stroke="#fff" stroke-width="1.05"/>
<rect x="864.5" y="154.5" width="11" height="11" fill="none" stroke="#fff" stroke-width="1.05"/>
<rect x="862.5" y="129.5" width="11" height="11" fill="none" stroke="#fff" stroke-width="1.05"/>
<rect x="880.5" y="229.5" width="11" height="11" fill="none" stroke="#fff" stroke-width="1.05"/>
<rect x="892.5" y="213.5" width="11" height="11" fill="none" stroke="#fff" stroke-width="1.05"/>
<rect x="904.5" y="199.5" width="11" height="11" fill="none" stroke="#fff" stroke-width="1.05"/>
<rect x="914.5" y="185.5" width="11" height="11" fill="none" stroke="#fff" stroke-width="1.05"/>
<rect x="927.5" y="170.5" width="11" height="11" fill="none" stroke="#fff" stroke-width="1.05"/>
<rect x="860.5" y="244.5" width="11" height="11" fill="none" stroke="#fff" stroke-width="1.05"/>
<rect x="850.5" y="244.5" width="11" height="11" fill="none" stroke="#fff" stroke-width="1.05"/>
<rect x="841.5" y="244.5" width="11" height="11" fill="none" stroke="#fff" stroke-width="1.05"/>
<rect x="831.5" y="244.5" width="11" height="11" fill="none" stroke="#fff" stroke-width="1.05"/>
<rect x="821.5" y="244.5" width="11" height="11" fill="none" stroke="#fff" stroke-width="1.05"/>
<rect x="870.5" y="259.5" width="11" height="11" fill="none" stroke="#fff" stroke-width="1.05"/>
<rect x="871.5" y="274.5" width="11" height="11" fill="none" stroke="#fff" stroke-width="1.05"/>
<rect x="872.5" y="288.5" width="11" height="11" fill="none" stroke="#fff" stroke-width="1.05"/>
<rect x="873.5" y="303.5" width="11" height="11" fill="none" stroke="#fff" stroke-width="1.05"/>
<rect x="874.5" y="318.5" width="11" height="11" fill="none" stroke="#fff" stroke-width="1.05"/>
<rect x="852.5" y="267.5" width="11" height="11" fill="none" stroke="#fff" stroke-width="1.05"/>
<rect x="834.5" y="290.5" width="11" height="11" fill="none" stroke="#fff" stroke-width="1.05"/>
<rect x="818.5" y="311.5" width="11" height="11" fill="none" stroke="#fff" stroke-width="1.05"/>
<rect x="800.5" y="334.5" width="11" height="11" fill="none" stroke="#fff" stroke-width="1.05"/>
<rect x="782.5" y="358.5" width="11" height="11" fill="none" stroke="#fff" stroke-width="1.05"/>
<rect x="869.5" y="244.5" width="11" height="11" fill="none" stroke="#000" stroke-width="1.6"/>
<g shape-rendering="geometricPrecision">
<ellipse cx="870.4" cy="275.9" rx="3.5" ry="3.6" fill="#c08080" stroke="#222222" stroke-width="1"/>
<ellipse cx="903.8" cy="271.1" rx="3.5" ry="3.6" fill="#c06a66" stroke="#222222" stroke-width="1"/>
<ellipse cx="934.9" cy="264.8" rx="3.5" ry="3.6" fill="#c05656" stroke="#222222" stroke-width="1"/>
<ellipse cx="968.2" cy="259.4" rx="3.5" ry="3.6" fill="#c03838" stroke="#222222" stroke-width="1"/>
<ellipse cx="996.9" cy="253.4" rx="3.5" ry="3.6" fill="#c80808" stroke="#222222" stroke-width="1"/>
<ellipse cx="847.9" cy="259.5" rx="3.5" ry="3.6" fill="#98b090" stroke="#222222" stroke-width="1"/>
<ellipse cx="851.4" cy="238.6" rx="3.5" ry="3.6" fill="#80b080" stroke="#222222" stroke-width="1"/>
<ellipse cx="856.4" cy="216.7" rx="3.5" ry="3.6" fill="#70a868" stroke="#222222" stroke-width="1"/>
<ellipse cx="861.8" cy="191.8" rx="3.5" ry="3.6" fill="#58a858" stroke="#222222" stroke-width="1"/>
<ellipse cx="867.9" cy="169.9" rx="3.5" ry="3.6" fill="#10a010" stroke="#222222" stroke-width="1"/>
<ellipse cx="828.7" cy="293.8" rx="3.5" ry="3.6" fill="#a0a0b8" stroke="#222222" stroke-width="1"/>
<ellipse cx="813.5" cy="310.4" rx="3.5" ry="3.6" fill="#7878b8" stroke="#222222" stroke-width="1"/>
<ellipse cx="802" cy="323.8" rx="3.5" ry="3.6" fill="#5858b8" stroke="#222222" stroke-width="1"/>
<ellipse cx="792.9" cy="334.4" rx="3.5" ry="3.6" fill="#3838b0" stroke="#222222" stroke-width="1"/>
<ellipse cx="785.8" cy="341.9" rx="3.5" ry="3.6" fill="#1818b8" stroke="#222222" stroke-width="1"/>
<ellipse cx="839" cy="278.2" rx="3.5" ry="3.6" fill="#a0b8b0" stroke="#222222" stroke-width="1"/>
<ellipse cx="831.4" cy="278.2" rx="3.5" ry="3.6" fill="#90b8b0" stroke="#222222" stroke-width="1"/>
<ellipse cx="825.9" cy="278.2" rx="3.5" ry="3.6" fill="#80b8b0" stroke="#222222" stroke-width="1"/>
<ellipse cx="820.5" cy="278.2" rx="3.5" ry="3.6" fill="#60b8b0" stroke="#222222" stroke-width="1"/>
<ellipse cx="816.3" cy="278.2" rx="3.5" ry="3.6" fill="#20c0c0" stroke="#222222" stroke-width="1"/>
<ellipse cx="844" cy="286.8" rx="3.5" ry="3.6" fill="#c8a8b8" stroke="#222222" stroke-width="1"/>
<ellipse cx="840.9" cy="297.6" rx="3.5" ry="3.6" fill="#c898c0" stroke="#222222" stroke-width="1"/>
<ellipse cx="839.8" cy="306.2" rx="3.5" ry="3.6" fill="#c878c0" stroke="#222222" stroke-width="1"/>
<ellipse cx="838.3" cy="314.8" rx="3.5" ry="3.6" fill="#c858b8" stroke="#222222" stroke-width="1"/>
<ellipse cx="836.3" cy="320.9" rx="3.5" ry="3.6" fill="#c820b0" stroke="#222222" stroke-width="1"/>
<ellipse cx="858" cy="264.3" rx="3.5" ry="3.6" fill="#c0b890" stroke="#222222" stroke-width="1"/>
<ellipse cx="871.5" cy="249.6" rx="3.5" ry="3.6" fill="#b8b078" stroke="#222222" stroke-width="1"/>
<ellipse cx="886.1" cy="233.6" rx="3.5" ry="3.6" fill="#b8b068" stroke="#222222" stroke-width="1"/>
<ellipse cx="900.9" cy="217.2" rx="3.5" ry="3.6" fill="#b0b048" stroke="#222222" stroke-width="1"/>
<ellipse cx="916.5" cy="200.6" rx="3.5" ry="3.6" fill="#b0b010" stroke="#222222" stroke-width="1"/>
<ellipse cx="862.2" cy="259.4" rx="3.5" ry="3.6" fill="#ffffff" stroke="#222222" stroke-width="1"/>
</g>
</g>
<rect x="706" y="32" width="1" height="363" fill="#a6a6a6"/><rect x="1158" y="32" width="1" height="359" fill="#a6a6a6"/>
<rect x="706" y="32" width="453" height="1" fill="#a6a6a6"/><rect x="702" y="390" width="457" height="1" fill="#a6a6a6"/>
<rect x="702" y="390" width="4" height="1" fill="#a6a6a6"/>
<text x="701.8" y="395.0" text-anchor="end" textLength="5.7" lengthAdjust="spacingAndGlyphs" style="font-size:11px">0</text>
<rect x="706" y="390" width="1" height="5" fill="#a6a6a6"/>
<text x="706.5" y="405.0" text-anchor="middle" textLength="5.7" lengthAdjust="spacingAndGlyphs" style="font-size:11px">0</text>
<rect x="702" y="348" width="4" height="1" fill="#a6a6a6"/>
<text x="701.8" y="353.0" text-anchor="end" textLength="14.2" lengthAdjust="spacingAndGlyphs" style="font-size:11px">0,1</text>
<rect x="759" y="390" width="1" height="5" fill="#a6a6a6"/>
<text x="759.5" y="405.0" text-anchor="middle" textLength="14.2" lengthAdjust="spacingAndGlyphs" style="font-size:11px">0,1</text>
<rect x="702" y="305" width="4" height="1" fill="#a6a6a6"/>
<text x="701.8" y="310.0" text-anchor="end" textLength="14.2" lengthAdjust="spacingAndGlyphs" style="font-size:11px">0,2</text>
<rect x="814" y="390" width="1" height="5" fill="#a6a6a6"/>
<text x="814.5" y="405.0" text-anchor="middle" textLength="14.2" lengthAdjust="spacingAndGlyphs" style="font-size:11px">0,2</text>
<rect x="702" y="263" width="4" height="1" fill="#a6a6a6"/>
<text x="701.8" y="268.0" text-anchor="end" textLength="14.2" lengthAdjust="spacingAndGlyphs" style="font-size:11px">0,3</text>
<rect x="867" y="390" width="1" height="5" fill="#a6a6a6"/>
<text x="867.5" y="405.0" text-anchor="middle" textLength="14.2" lengthAdjust="spacingAndGlyphs" style="font-size:11px">0,3</text>
<rect x="702" y="220" width="4" height="1" fill="#a6a6a6"/>
<text x="701.8" y="225.0" text-anchor="end" textLength="14.2" lengthAdjust="spacingAndGlyphs" style="font-size:11px">0,4</text>
<rect x="921" y="390" width="1" height="5" fill="#a6a6a6"/>
<text x="921.5" y="405.0" text-anchor="middle" textLength="14.2" lengthAdjust="spacingAndGlyphs" style="font-size:11px">0,4</text>
<rect x="702" y="178" width="4" height="1" fill="#a6a6a6"/>
<text x="701.8" y="183.0" text-anchor="end" textLength="14.2" lengthAdjust="spacingAndGlyphs" style="font-size:11px">0,5</text>
<rect x="975" y="390" width="1" height="5" fill="#a6a6a6"/>
<text x="975.5" y="405.0" text-anchor="middle" textLength="14.2" lengthAdjust="spacingAndGlyphs" style="font-size:11px">0,5</text>
<rect x="702" y="135" width="4" height="1" fill="#a6a6a6"/>
<text x="701.8" y="140.0" text-anchor="end" textLength="14.2" lengthAdjust="spacingAndGlyphs" style="font-size:11px">0,6</text>
<rect x="1029" y="390" width="1" height="5" fill="#a6a6a6"/>
<text x="1029.5" y="405.0" text-anchor="middle" textLength="14.2" lengthAdjust="spacingAndGlyphs" style="font-size:11px">0,6</text>
<rect x="702" y="93" width="4" height="1" fill="#a6a6a6"/>
<text x="701.8" y="98.0" text-anchor="end" textLength="14.2" lengthAdjust="spacingAndGlyphs" style="font-size:11px">0,7</text>
<rect x="1083" y="390" width="1" height="5" fill="#a6a6a6"/>
<text x="1083.5" y="405.0" text-anchor="middle" textLength="14.2" lengthAdjust="spacingAndGlyphs" style="font-size:11px">0,7</text>
<rect x="702" y="50" width="4" height="1" fill="#a6a6a6"/>
<text x="701.8" y="55.0" text-anchor="end" textLength="14.2" lengthAdjust="spacingAndGlyphs" style="font-size:11px">0,8</text>
<rect x="1137" y="390" width="1" height="5" fill="#a6a6a6"/>
<text x="1137.5" y="405.0" text-anchor="middle" textLength="14.2" lengthAdjust="spacingAndGlyphs" style="font-size:11px">0,8</text>
<text x="923.8" y="29.0" text-anchor="middle" textLength="52.7" lengthAdjust="spacingAndGlyphs" style="font-size:11px">CIE 1931 xy</text>
<defs><linearGradient id="inA" x1="0" y1="0" x2="1" y2="0.6"><stop offset="0" stop-color="#6a9200"/><stop offset="0.6" stop-color="#959400"/><stop offset="1" stop-color="#8a6800"/></linearGradient>
<linearGradient id="inB" x1="0" y1="0.3" x2="1" y2="1"><stop offset="0" stop-color="#b8ff00"/><stop offset="0.45" stop-color="#ffff00"/><stop offset="1" stop-color="#ffb000"/></linearGradient></defs>
<rect x="1030" y="33" width="129" height="131" fill="#8a8a8a"/>
<rect x="1031" y="34" width="127" height="129" fill="url(#inA)"/>
<path d="M1031,46.5 L1158,149.5 L1158,163 L1031,163 Z" fill="url(#inB)" shape-rendering="geometricPrecision"/>
<rect x="1089.5" y="92.5" width="9" height="9" fill="none" stroke="#fff" stroke-width="1.6" shape-rendering="geometricPrecision"/>
</svg></body></html>
